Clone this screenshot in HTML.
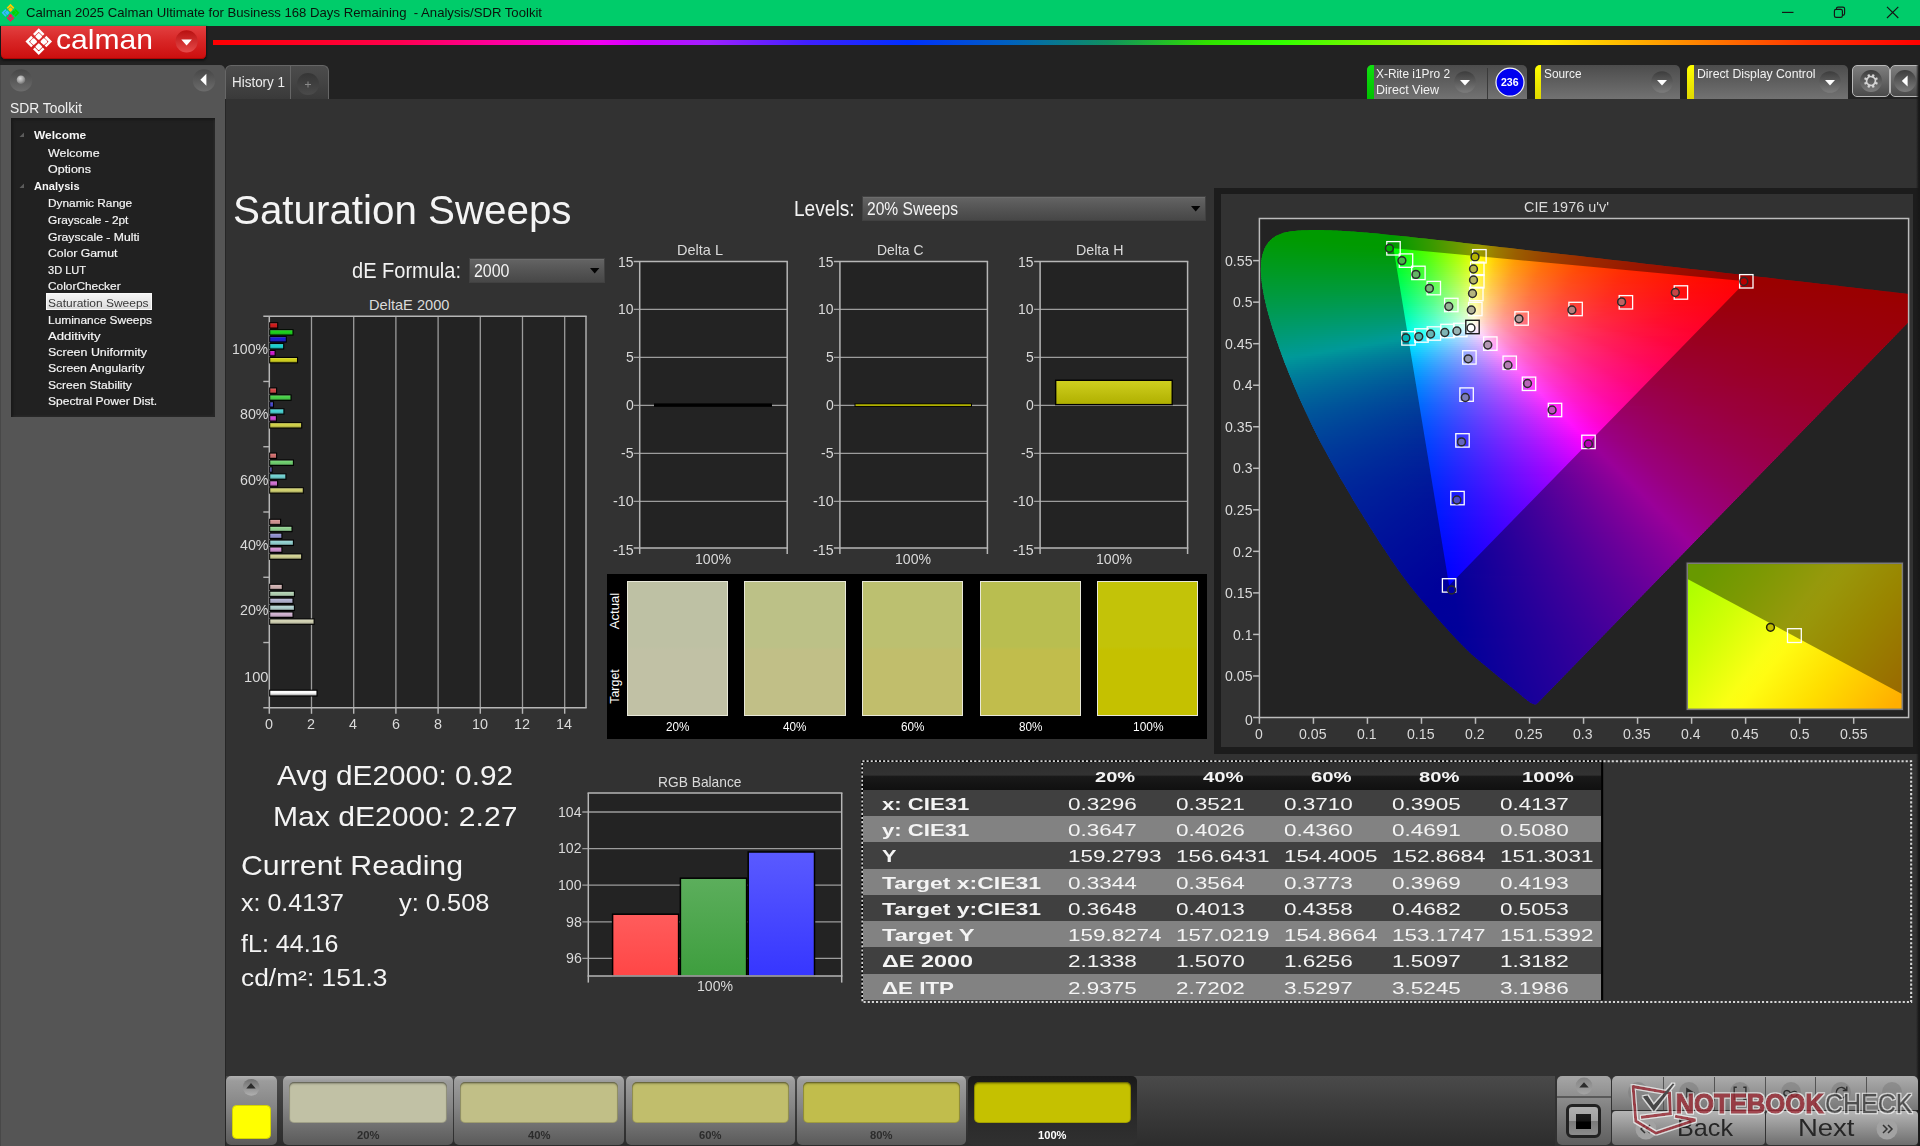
<!DOCTYPE html>
<html lang="en">
<head>
<meta charset="utf-8">
<title>Calman 2025 - Analysis/SDR Toolkit</title>
<style>
*{box-sizing:border-box;margin:0;padding:0}
html,body{width:1920px;height:1146px;overflow:hidden;background:#222;font-family:"Liberation Sans",sans-serif;color:#f0f0f0}
#root{position:relative;width:1920px;height:1146px;overflow:hidden;background:#222}
.a,svg{position:absolute}
.t{position:absolute;white-space:pre;line-height:1;transform-origin:0 50%}
svg{overflow:visible}
svg text{font-family:"Liberation Sans",sans-serif}
</style>
</head>
<body>
<div id="root">
<div class="a" style="left:0;top:0;width:1920px;height:25.5px;background:#00cc6a"></div><svg style="left:0;top:0" width="1920" height="100" viewBox="0 0 1920 100"><g transform="translate(10.5 12.8) rotate(45)" fill="none" stroke-width="1.75" stroke-linecap="butt" stroke-linejoin="miter"><path d="M-0.9 -5.45H-5.45V-0.9" stroke="#ffc800"/><rect x="-4.1" y="-4.1" width="3.55" height="3.55" rx="0.8" fill="#ffc800" stroke="none"/><path d="M0.9 -5.45H5.45V-0.9" stroke="#00d400"/><rect x="0.55" y="-4.1" width="3.55" height="3.55" rx="0.8" fill="#00d400" stroke="none"/><path d="M-0.9 5.45H-5.45V0.9" stroke="#35bbff"/><rect x="-4.1" y="0.55" width="3.55" height="3.55" rx="0.8" fill="#35bbff" stroke="none"/><path d="M0.9 5.45H5.45V0.9" stroke="#ff1058"/><rect x="0.55" y="0.55" width="3.55" height="3.55" rx="0.8" fill="#ff1058" stroke="none"/></g></svg><div class="t" id="t0" style="font-size:13.5px;color:#0a140c;left:26.00px;top:6.22px;transform:scaleX(0.9732);">Calman 2025 Calman Ultimate for Business 168 Days Remaining  - Analysis/SDR Toolkit</div><svg style="left:1770px;top:0" width="150" height="25" viewBox="0 0 150 25" fill="none" stroke="#151515" stroke-width="1.15">
<path d="M12 12.4H23.5"/>
<rect x="64.4" y="9.4" width="8" height="8" rx="1.7"/>
<path d="M66.4 9.4V8.8a1.7 1.7 0 0 1 1.7-1.7h4.8a1.7 1.7 0 0 1 1.7 1.7v4.8a1.7 1.7 0 0 1-1.7 1.7h-.5"/>
<path d="M117 6.8l11.3 11.200M128.3 6.8l-11.3 11.200"/>
</svg><div class="a" style="left:1px;top:25.5px;width:204.6px;height:33.2px;border-radius:0 0 4.5px 4.5px;background:linear-gradient(#e24040,#d82626 45%,#cc0d0d);box-shadow:0 1px 2px 1px rgba(10,10,10,.55),inset 0 -1px 0 rgba(150,0,0,.6)"></div><svg style="left:0;top:0" width="1920" height="100" viewBox="0 0 1920 100"><g transform="translate(38.75 41.6) rotate(45)" fill="none" stroke-width="2.5" stroke-linecap="butt" stroke-linejoin="miter"><path d="M-1.3 -8.15H-8.15V-1.3" stroke="#fff"/><rect x="-6.3" y="-6.3" width="5.35" height="5.35" rx="1.1" fill="#fff" stroke="none"/><path d="M1.3 -8.15H8.15V-1.3" stroke="#fff"/><rect x="0.95" y="-6.3" width="5.35" height="5.35" rx="1.1" fill="#fff" stroke="none"/><path d="M-1.3 8.15H-8.15V1.3" stroke="#fff"/><rect x="-6.3" y="0.95" width="5.35" height="5.35" rx="1.1" fill="#fff" stroke="none"/><path d="M1.3 8.15H8.15V1.3" stroke="#fff"/><rect x="0.95" y="0.95" width="5.35" height="5.35" rx="1.1" fill="#fff" stroke="none"/></g></svg><div class="t" id="t1" style="font-size:28.5px;color:#fff;left:55.50px;top:24.57px;transform:scaleX(1.0558);letter-spacing:0;">calman</div><svg style="left:174px;top:29px" width="24" height="24" viewBox="0 0 24 24">
<defs><linearGradient id="lgdd" x1="0" y1="0" x2="0" y2="1"><stop offset="0" stop-color="#b81010"/><stop offset="1" stop-color="#e64a4a"/></linearGradient></defs>
<circle cx="12.6" cy="12.3" r="11.1" fill="url(#lgdd)"/><path d="M7.3 10.5h10.6l-5.3 6z" fill="#fff"/></svg><div class="a" style="left:213px;top:39.6px;width:1707px;height:5.6px;background:linear-gradient(90deg,#ff0000 0%,#ff0028 6%,#ff0050 11%,#ff00a0 16.8%,#f000f0 22.7%,#d000ff 25%,#a020ff 29%,#4020ff 34.8%,#0030ff 40.7%,#0060c0 46.5%,#109060 52.4%,#30e000 58.2%,#30ff00 62.5%,#a0f000 70.3%,#fff000 78.1%,#ff9000 85.9%,#ff3000 93.7%,#ff0000 100%)"></div><div class="a" style="left:224.8px;top:65px;width:103.8px;height:34.5px;border:1.2px solid #666;border-bottom:none;border-radius:6px 6px 0 0;background:linear-gradient(#4c4c4c,#434343 50%,#393939)"></div><div class="a" style="left:289.7px;top:66px;width:1.2px;height:33px;background:#666"></div><div class="t" id="t2" style="font-size:13.9px;color:#ececec;left:231.60px;top:76.09px;transform:scaleX(0.9669);">History 1</div><svg style="left:296.1px;top:72px" width="24" height="24" viewBox="0 0 24 24"><defs><linearGradient id="lgp" x1="0" y1="0" x2="0" y2="1"><stop offset="0" stop-color="#353535"/><stop offset="1" stop-color="#4a4a4a"/></linearGradient></defs>
<circle cx="12" cy="12" r="11" fill="url(#lgp)"/><path d="M9 12.5h6M12 9.5v6" stroke="#8a8a8a" stroke-width="1" fill="none"/></svg><svg style="left:0;top:0" width="0" height="0"><defs>
<linearGradient id="lgbox" x1="0" y1="0" x2="0" y2="1"><stop offset="0" stop-color="#4c4c4c"/><stop offset="1" stop-color="#747474"/></linearGradient>
<linearGradient id="lgcir" x1="0" y1="0" x2="0" y2="1"><stop offset="0" stop-color="#3c3c3c"/><stop offset="1" stop-color="#7c7c7c"/></linearGradient>
<linearGradient id="lgbtn" x1="0" y1="0" x2="0" y2="1"><stop offset="0" stop-color="#808080"/><stop offset="1" stop-color="#484848"/></linearGradient>
</defs></svg><div class="a" style="left:1367px;top:65px;width:160px;height:34px;border-radius:5px 5px 0 0;background:linear-gradient(#4c4c4c,#727272);overflow:hidden"><div class="a" style="left:0;top:0;width:6.5px;height:34px;background:linear-gradient(#10e010,#00c000)"></div></div><div class="t" id="t3" style="font-size:12.4px;color:#f2f2f2;left:1376.00px;top:67.86px;transform:scaleX(0.9593);">X-Rite i1Pro 2</div><div class="t" id="t4" style="font-size:12.4px;color:#f2f2f2;left:1376.00px;top:84.46px;transform:scaleX(1.0090);">Direct View</div><svg style="left:1453px;top:70px" width="24" height="24" viewBox="-12 -12 24 24"><circle r="10.8" fill="url(#lgcir)"/><path d="M-5 -2h10l-5 5.6z" fill="#fff"/></svg><div class="a" style="left:1486.5px;top:68px;width:1.5px;height:31px;background:#3a3a3a"></div><svg style="left:1494px;top:66px" width="32" height="32" viewBox="-16 -16 32 32"><circle cx="0" cy="0.2" r="14" fill="#0000f0" stroke="#f4f4f4" stroke-width="1.2"/></svg><div class="t" id="t5" style="font-size:10.8px;color:#fff;font-weight:bold;left:1501.10px;top:77.02px;transform:scaleX(0.9769);">236</div><div class="a" style="left:1534.5px;top:65px;width:145.5px;height:34px;border-radius:5px 5px 0 0;background:linear-gradient(#4c4c4c,#727272);overflow:hidden"><div class="a" style="left:0;top:0;width:6.5px;height:34px;background:linear-gradient(#ffff00,#e0d800)"></div></div><div class="t" id="t6" style="font-size:12.4px;color:#f2f2f2;left:1543.50px;top:67.86px;transform:scaleX(0.9550);">Source</div><svg style="left:1650px;top:70px" width="24" height="24" viewBox="-12 -12 24 24"><circle r="10.8" fill="url(#lgcir)"/><path d="M-5 -2h10l-5 5.6z" fill="#fff"/></svg><div class="a" style="left:1687px;top:65px;width:161px;height:34px;border-radius:5px 5px 0 0;background:linear-gradient(#4c4c4c,#727272);overflow:hidden"><div class="a" style="left:0;top:0;width:6.5px;height:34px;background:linear-gradient(#ffff00,#e0d800)"></div></div><div class="t" id="t7" style="font-size:12.4px;color:#f2f2f2;left:1697.00px;top:67.86px;transform:scaleX(0.9890);">Direct Display Control</div><svg style="left:1818px;top:70px" width="24" height="24" viewBox="-12 -12 24 24"><circle r="10.8" fill="url(#lgcir)"/><path d="M-5 -2h10l-5 5.6z" fill="#fff"/></svg><div class="a" style="left:1851.5px;top:65px;width:38px;height:31.5px;border:1.3px solid #b8b8b8;border-radius:5px;background:linear-gradient(#7e7e7e,#4a4a4a)"></div><div class="a" style="left:1890px;top:65px;width:38px;height:31.5px;border:1.3px solid #b8b8b8;border-radius:5px;background:linear-gradient(#7e7e7e,#4a4a4a)"></div><svg style="left:1858.5px;top:68.8px" width="24" height="24" viewBox="-12 -12 24 24"><circle r="11" fill="url(#lgcir)"/><path d="M7.02 -1.05 7.02 1.05 5.16 1.19 4.49 2.81 5.71 4.22 4.22 5.71 2.81 4.49 1.19 5.16 1.05 7.02 -1.05 7.02 -1.19 5.16 -2.81 4.49 -4.22 5.71 -5.71 4.22 -4.49 2.81 -5.16 1.19 -7.02 1.05 -7.02 -1.05 -5.16 -1.19 -4.49 -2.81 -5.71 -4.22 -4.22 -5.71 -2.81 -4.49 -1.19 -5.16 -1.05 -7.02 1.05 -7.02 1.19 -5.16 2.81 -4.49 4.22 -5.71 5.71 -4.22 4.49 -2.81 5.16 -1.19Z M3.500 0A3.500 3.500 0 1 0 -3.500 0A3.500 3.500 0 1 0 3.500 0Z" fill="#d4d4d4" fill-rule="evenodd" transform="rotate(22.5)"/></svg><svg style="left:1893.3px;top:68.8px" width="24" height="24" viewBox="-12 -12 24 24"><circle r="11" fill="url(#lgcir)"/><path d="M2.6 -5.6v11.2l-5.8 -5.6z" fill="#fff"/></svg><div class="a" style="left:0;top:64.8px;width:224.8px;height:1082px;background:#555;border-radius:0 5px 0 0;border-left:1.5px solid #484848"></div><div class="a" style="left:224.8px;top:99px;width:1.4px;height:1047px;background:#262626"></div><svg style="left:8px;top:67px" width="26" height="26" viewBox="-13 -13 26 26"><defs>
<linearGradient id="lgsb" x1="0" y1="0" x2="0" y2="1"><stop offset="0" stop-color="#474747"/><stop offset="1" stop-color="#6c6c6c"/></linearGradient>
<radialGradient id="rgball" cx=".4" cy=".35" r=".7"><stop offset="0" stop-color="#d8d8d8"/><stop offset=".5" stop-color="#a8a8a8"/><stop offset="1" stop-color="#686868"/></radialGradient></defs>
<circle cx="0" cy=".4" r="11.2" fill="url(#lgsb)"/><circle cx="0" cy="-.2" r="4.3" fill="url(#rgball)"/></svg><svg style="left:190.8px;top:67.2px" width="26" height="26" viewBox="-13 -13 26 26"><circle cx="0" cy=".4" r="11.2" fill="url(#lgsb)"/><path d="M2.4 -6.2v12l-6 -6z" fill="#fff"/></svg><div class="t" id="t8" style="font-size:14.7px;color:#f0f0f0;left:10.00px;top:100.70px;transform:scaleX(0.9416);">SDR Toolkit</div><div class="a" style="left:11px;top:118px;width:204px;height:299px;background:#212121;box-shadow:inset 1.5px 1.5px 3px #171717,inset -1.5px -1.5px 2px #2b2b2b"></div><div class="a" style="left:46px;top:293.2px;width:106px;height:16.6px;background:linear-gradient(#f4f4f4,#dcdcdc);border:1px solid #fafafa"></div><div class="t" id="t9" style="font-size:11.7px;color:#f6f6f6;font-weight:bold;left:33.70px;top:128.81px;transform:scaleX(1.0213);">Welcome</div><div class="t" id="t10" style="font-size:11.7px;color:#f6f6f6;left:48.40px;top:146.71px;transform:scaleX(1.0639);-webkit-text-stroke:.18px #f6f6f6;">Welcome</div><div class="t" id="t11" style="font-size:11.7px;color:#f6f6f6;left:48.40px;top:162.50px;transform:scaleX(1.0675);-webkit-text-stroke:.18px #f6f6f6;">Options</div><div class="t" id="t12" style="font-size:11.7px;color:#f6f6f6;font-weight:bold;left:33.70px;top:179.81px;transform:scaleX(0.9485);">Analysis</div><div class="t" id="t13" style="font-size:11.7px;color:#f6f6f6;left:48.40px;top:197.10px;transform:scaleX(1.0126);-webkit-text-stroke:.18px #f6f6f6;">Dynamic Range</div><div class="t" id="t14" style="font-size:11.7px;color:#f6f6f6;left:48.40px;top:213.81px;transform:scaleX(1.0145);-webkit-text-stroke:.18px #f6f6f6;">Grayscale - 2pt</div><div class="t" id="t15" style="font-size:11.7px;color:#f6f6f6;left:48.40px;top:230.50px;transform:scaleX(1.0446);-webkit-text-stroke:.18px #f6f6f6;">Grayscale - Multi</div><div class="t" id="t16" style="font-size:11.7px;color:#f6f6f6;left:48.40px;top:247.21px;transform:scaleX(1.0488);-webkit-text-stroke:.18px #f6f6f6;">Color Gamut</div><div class="t" id="t17" style="font-size:11.7px;color:#f6f6f6;left:48.40px;top:263.71px;transform:scaleX(0.9458);-webkit-text-stroke:.18px #f6f6f6;">3D LUT</div><div class="t" id="t18" style="font-size:11.7px;color:#f6f6f6;left:48.40px;top:280.41px;transform:scaleX(1.0161);-webkit-text-stroke:.18px #f6f6f6;">ColorChecker</div><div class="t" id="t19" style="font-size:11.7px;color:#3a3a3a;left:48.40px;top:296.81px;transform:scaleX(1.0254);">Saturation Sweeps</div><div class="t" id="t20" style="font-size:11.7px;color:#f6f6f6;left:48.40px;top:313.51px;transform:scaleX(1.0195);-webkit-text-stroke:.18px #f6f6f6;">Luminance Sweeps</div><div class="t" id="t21" style="font-size:11.7px;color:#f6f6f6;left:48.40px;top:329.91px;transform:scaleX(1.1222);-webkit-text-stroke:.18px #f6f6f6;">Additivity</div><div class="t" id="t22" style="font-size:11.7px;color:#f6f6f6;left:48.40px;top:346.41px;transform:scaleX(1.0647);-webkit-text-stroke:.18px #f6f6f6;">Screen Uniformity</div><div class="t" id="t23" style="font-size:11.7px;color:#f6f6f6;left:48.40px;top:362.21px;transform:scaleX(1.0512);-webkit-text-stroke:.18px #f6f6f6;">Screen Angularity</div><div class="t" id="t24" style="font-size:11.7px;color:#f6f6f6;left:48.40px;top:378.71px;transform:scaleX(1.0332);-webkit-text-stroke:.18px #f6f6f6;">Screen Stability</div><div class="t" id="t25" style="font-size:11.7px;color:#f6f6f6;left:48.40px;top:395.41px;transform:scaleX(1.0314);-webkit-text-stroke:.18px #f6f6f6;">Spectral Power Dist.</div><svg style="left:19px;top:131.5px" width="6" height="6" viewBox="0 0 6 6"><path d="M5 .5V5H.5z" fill="#5c5c5c"/></svg><svg style="left:19px;top:182.5px" width="6" height="6" viewBox="0 0 6 6"><path d="M5 .5V5H.5z" fill="#5c5c5c"/></svg><div class="a" style="left:226.2px;top:99px;width:1694px;height:1047px;background:#323232"></div><div class="t" id="t26" style="font-size:41.2px;color:#f4f4f4;left:232.80px;top:189.58px;transform:scaleX(0.9791);">Saturation Sweeps</div><div class="t" id="t27" style="font-size:21.2px;color:#f2f2f2;left:351.50px;top:259.98px;transform:scaleX(0.9445);">dE Formula:</div><div class="a" style="left:468.7px;top:257.8px;width:136.3px;height:25.4px;background:linear-gradient(#646464,#565656 45%,#474747);border:1px solid #414141;box-shadow:inset 0 1px 0 #6c6c6c"></div><svg style="left:590.4px;top:268.3px" width="10" height="6" viewBox="0 0 10 6"><path d="M0 0h9.400l-4.700 5.400z" fill="#050505"/></svg><div class="t" id="t28" style="font-size:17.6px;color:#f4f4f4;left:473.60px;top:263.04px;transform:scaleX(0.9070);">2000</div><div class="t" id="t29" style="font-size:21.2px;color:#f2f2f2;left:793.50px;top:197.98px;transform:scaleX(0.9011);">Levels:</div><div class="a" style="left:862.4px;top:195.6px;width:343.6px;height:25.4px;background:linear-gradient(#646464,#565656 45%,#474747);border:1px solid #414141;box-shadow:inset 0 1px 0 #6c6c6c"></div><svg style="left:1191.4px;top:206.1px" width="10" height="6" viewBox="0 0 10 6"><path d="M0 0h9.400l-4.700 5.400z" fill="#050505"/></svg><div class="t" id="t30" style="font-size:17.6px;color:#f4f4f4;left:867.00px;top:201.04px;transform:scaleX(0.8860);">20% Sweeps</div><div class="t" id="t31" style="font-size:14.6px;color:#dadada;left:369.05px;top:297.59px;">DeltaE 2000</div><div class="t" id="t32" style="font-size:14.6px;color:#dadada;left:232.00px;top:342.29px;transform:scaleX(0.9644);">100%</div><div class="t" id="t33" style="font-size:14.6px;color:#dadada;left:239.50px;top:407.29px;transform:scaleX(0.9754);">80%</div><div class="t" id="t34" style="font-size:14.6px;color:#dadada;left:239.50px;top:472.79px;transform:scaleX(0.9754);">60%</div><div class="t" id="t35" style="font-size:14.6px;color:#dadada;left:239.50px;top:537.79px;transform:scaleX(0.9754);">40%</div><div class="t" id="t36" style="font-size:14.6px;color:#dadada;left:239.50px;top:603.29px;transform:scaleX(0.9754);">20%</div><div class="t" id="t37" style="font-size:14.6px;color:#dadada;left:243.50px;top:669.59px;transform:scaleX(1.0058);">100</div><div class="t" id="t38" style="font-size:14.6px;color:#dadada;left:265.00px;top:717.39px;transform:scaleX(0.9846);">0</div><div class="t" id="t39" style="font-size:14.6px;color:#dadada;left:307.20px;top:717.39px;transform:scaleX(0.9846);">2</div><div class="t" id="t40" style="font-size:14.6px;color:#dadada;left:349.40px;top:717.39px;transform:scaleX(0.9846);">4</div><div class="t" id="t41" style="font-size:14.6px;color:#dadada;left:391.60px;top:717.39px;transform:scaleX(0.9846);">6</div><div class="t" id="t42" style="font-size:14.6px;color:#dadada;left:433.80px;top:717.39px;transform:scaleX(0.9846);">8</div><div class="t" id="t43" style="font-size:14.6px;color:#dadada;left:472.00px;top:717.39px;transform:scaleX(0.9856);">10</div><div class="t" id="t44" style="font-size:14.6px;color:#dadada;left:514.20px;top:717.39px;transform:scaleX(0.9856);">12</div><div class="t" id="t45" style="font-size:14.6px;color:#dadada;left:556.40px;top:717.39px;transform:scaleX(0.9856);">14</div><div class="t" id="t46" style="font-size:14.6px;color:#dadada;left:618.00px;top:254.89px;transform:scaleX(0.9548);">15</div><div class="t" id="t47" style="font-size:14.6px;color:#dadada;left:618.00px;top:302.39px;transform:scaleX(0.9548);">10</div><div class="t" id="t48" style="font-size:14.6px;color:#dadada;left:625.70px;top:350.39px;transform:scaleX(0.9600);">5</div><div class="t" id="t49" style="font-size:14.6px;color:#dadada;left:625.70px;top:398.39px;transform:scaleX(0.9600);">0</div><div class="t" id="t50" style="font-size:14.6px;color:#dadada;left:620.90px;top:446.39px;transform:scaleX(0.9704);">-5</div><div class="t" id="t51" style="font-size:14.6px;color:#dadada;left:612.90px;top:494.39px;transform:scaleX(0.9766);">-10</div><div class="t" id="t52" style="font-size:14.6px;color:#dadada;left:612.90px;top:542.99px;transform:scaleX(0.9766);">-15</div><div class="t" id="t53" style="font-size:14.6px;color:#dadada;left:676.70px;top:243.19px;transform:scaleX(0.9946);">Delta L</div><div class="t" id="t54" style="font-size:14.6px;color:#dadada;left:695.20px;top:552.09px;transform:scaleX(0.9644);">100%</div><div class="t" id="t55" style="font-size:14.6px;color:#dadada;left:818.20px;top:254.89px;transform:scaleX(0.9548);">15</div><div class="t" id="t56" style="font-size:14.6px;color:#dadada;left:818.20px;top:302.39px;transform:scaleX(0.9548);">10</div><div class="t" id="t57" style="font-size:14.6px;color:#dadada;left:825.90px;top:350.39px;transform:scaleX(0.9600);">5</div><div class="t" id="t58" style="font-size:14.6px;color:#dadada;left:825.90px;top:398.39px;transform:scaleX(0.9600);">0</div><div class="t" id="t59" style="font-size:14.6px;color:#dadada;left:821.10px;top:446.39px;transform:scaleX(0.9704);">-5</div><div class="t" id="t60" style="font-size:14.6px;color:#dadada;left:813.10px;top:494.39px;transform:scaleX(0.9766);">-10</div><div class="t" id="t61" style="font-size:14.6px;color:#dadada;left:813.10px;top:542.99px;transform:scaleX(0.9766);">-15</div><div class="t" id="t62" style="font-size:14.6px;color:#dadada;left:876.65px;top:243.19px;transform:scaleX(0.9554);">Delta C</div><div class="t" id="t63" style="font-size:14.6px;color:#dadada;left:895.40px;top:552.09px;transform:scaleX(0.9644);">100%</div><div class="t" id="t64" style="font-size:14.6px;color:#dadada;left:1018.40px;top:254.89px;transform:scaleX(0.9548);">15</div><div class="t" id="t65" style="font-size:14.6px;color:#dadada;left:1018.40px;top:302.39px;transform:scaleX(0.9548);">10</div><div class="t" id="t66" style="font-size:14.6px;color:#dadada;left:1026.10px;top:350.39px;transform:scaleX(0.9600);">5</div><div class="t" id="t67" style="font-size:14.6px;color:#dadada;left:1026.10px;top:398.39px;transform:scaleX(0.9600);">0</div><div class="t" id="t68" style="font-size:14.6px;color:#dadada;left:1021.30px;top:446.39px;transform:scaleX(0.9704);">-5</div><div class="t" id="t69" style="font-size:14.6px;color:#dadada;left:1013.30px;top:494.39px;transform:scaleX(0.9766);">-10</div><div class="t" id="t70" style="font-size:14.6px;color:#dadada;left:1013.30px;top:542.99px;transform:scaleX(0.9766);">-15</div><div class="t" id="t71" style="font-size:14.6px;color:#dadada;left:1076.35px;top:243.19px;transform:scaleX(0.9759);">Delta H</div><div class="t" id="t72" style="font-size:14.6px;color:#dadada;left:1095.60px;top:552.09px;transform:scaleX(0.9644);">100%</div><div class="a" style="left:606.5px;top:574.3px;width:600.5px;height:165.2px;background:#000"></div><div class="a" style="left:626.8px;top:581.2px;width:101.2px;height:135px;border:1.2px solid #e8e8d8;background:linear-gradient(#bec1a4 0,#bec1a4 48.500%,#c1c1a5 51.500%,#c1c1a5 100%)"></div><div class="t" id="t73" style="font-size:12.3px;color:#fff;left:665.65px;top:721.34px;transform:scaleX(0.9543);">20%</div><div class="a" style="left:744.42px;top:581.2px;width:101.2px;height:135px;border:1.2px solid #e8e8d8;background:linear-gradient(#bcc187 0,#bcc187 48.500%,#c1bf87 51.500%,#c1bf87 100%)"></div><div class="t" id="t74" style="font-size:12.3px;color:#fff;left:783.27px;top:721.34px;transform:scaleX(0.9543);">40%</div><div class="a" style="left:862.04px;top:581.2px;width:101.2px;height:135px;border:1.2px solid #e8e8d8;background:linear-gradient(#bcc070 0,#bcc070 48.500%,#c1be6c 51.500%,#c1be6c 100%)"></div><div class="t" id="t75" style="font-size:12.3px;color:#fff;left:900.89px;top:721.34px;transform:scaleX(0.9543);">60%</div><div class="a" style="left:979.66px;top:581.2px;width:101.2px;height:135px;border:1.2px solid #e8e8d8;background:linear-gradient(#b9be50 0,#b9be50 48.500%,#c1bd4c 51.500%,#c1bd4c 100%)"></div><div class="t" id="t76" style="font-size:12.3px;color:#fff;left:1018.51px;top:721.34px;transform:scaleX(0.9543);">80%</div><div class="a" style="left:1097.28px;top:581.2px;width:101.2px;height:135px;border:1.2px solid #e8e8d8;background:linear-gradient(#c3c308 0,#c3c308 48.500%,#c5c100 51.500%,#c5c100 100%)"></div><div class="t" id="t77" style="font-size:12.3px;color:#fff;left:1132.63px;top:721.34px;transform:scaleX(0.9697);">100%</div><div class="t" id="t78" style="font-size:12.3px;color:#fff;left:0.00px;top:0.00px;transform-origin:0 0;transform:translate(609.45px,629.25px) rotate(-90deg) scaleX(1.0676);">Actual</div><div class="t" id="t79" style="font-size:12.3px;color:#fff;left:0.00px;top:0.00px;transform-origin:0 0;transform:translate(609.45px,703.75px) rotate(-90deg) scaleX(1.0091);">Target</div><div class="t" id="t80" style="font-size:27.6px;color:#f4f4f4;left:277.20px;top:762.24px;transform:scaleX(1.0782);">Avg dE2000: 0.92</div><div class="t" id="t81" style="font-size:27.6px;color:#f4f4f4;left:272.80px;top:803.44px;transform:scaleX(1.0916);">Max dE2000: 2.27</div><div class="t" id="t82" style="font-size:27.6px;color:#f4f4f4;left:240.60px;top:852.04px;transform:scaleX(1.0965);">Current Reading</div><div class="t" id="t83" style="font-size:23px;color:#f4f4f4;left:240.60px;top:891.95px;transform:scaleX(1.0883);">x: 0.4137</div><div class="t" id="t84" style="font-size:23px;color:#f4f4f4;left:399.30px;top:891.95px;transform:scaleX(1.1058);">y: 0.508</div><div class="t" id="t85" style="font-size:23px;color:#f4f4f4;left:240.60px;top:933.45px;transform:scaleX(1.0890);">fL: 44.16</div><div class="t" id="t86" style="font-size:23px;color:#f4f4f4;left:240.60px;top:967.25px;transform:scaleX(1.1459);">cd/m²: 151.3</div><div class="t" id="t87" style="font-size:14.6px;color:#dadada;left:657.65px;top:774.59px;transform:scaleX(0.9443);">RGB Balance</div><div class="t" id="t88" style="font-size:14.6px;color:#dadada;left:558.10px;top:804.79px;transform:scaleX(0.9647);">104</div><div class="t" id="t89" style="font-size:14.6px;color:#dadada;left:558.10px;top:841.39px;transform:scaleX(0.9647);">102</div><div class="t" id="t90" style="font-size:14.6px;color:#dadada;left:558.10px;top:877.99px;transform:scaleX(0.9647);">100</div><div class="t" id="t91" style="font-size:14.6px;color:#dadada;left:565.80px;top:914.59px;transform:scaleX(0.9732);">98</div><div class="t" id="t92" style="font-size:14.6px;color:#dadada;left:565.80px;top:951.19px;transform:scaleX(0.9732);">96</div><div class="t" id="t93" style="font-size:14.6px;color:#dadada;left:697.00px;top:979.49px;transform:scaleX(0.9644);">100%</div><svg style="left:0;top:0" width="1920" height="1146" viewBox="0 0 1920 1146" fill="none"><defs>
<linearGradient id="shade" x1="0" y1="0" x2="0" y2="1"><stop offset="0" stop-color="#fff" stop-opacity=".25"/><stop offset=".4" stop-color="#fff" stop-opacity="0"/><stop offset="1" stop-color="#000" stop-opacity=".38"/></linearGradient>
<linearGradient id="shadeh" x1="0" y1="0" x2="0" y2="1"><stop offset="0" stop-color="#fff" stop-opacity=".12"/><stop offset="1" stop-color="#000" stop-opacity=".12"/></linearGradient>
<linearGradient id="whbar" x1="0" y1="0" x2="0" y2="1"><stop offset="0" stop-color="#fff"/><stop offset=".5" stop-color="#fafafa"/><stop offset="1" stop-color="#8a8a8a"/></linearGradient>
</defs><rect x="269.3" y="316.2" width="316.7" height="391.6" fill="#232323" /><path d="M311.5 316.2L311.5 707.8" stroke="#9c9c9c" stroke-width="1.3"/><path d="M353.7 316.2L353.7 707.8" stroke="#9c9c9c" stroke-width="1.3"/><path d="M395.9 316.2L395.9 707.8" stroke="#9c9c9c" stroke-width="1.3"/><path d="M438.1 316.2L438.1 707.8" stroke="#9c9c9c" stroke-width="1.3"/><path d="M480.3 316.2L480.3 707.8" stroke="#9c9c9c" stroke-width="1.3"/><path d="M522.5 316.2L522.5 707.8" stroke="#9c9c9c" stroke-width="1.3"/><path d="M564.7 316.2L564.7 707.8" stroke="#9c9c9c" stroke-width="1.3"/><path d="M586 316.2L586 707.8" stroke="#b6b6b6" stroke-width="1.4"/><path d="M263.3 316.2L586.7 316.2" stroke="#b6b6b6" stroke-width="1.5"/><path d="M269.3 316.2L269.3 713.8" stroke="#b6b6b6" stroke-width="1.5"/><path d="M263.3 707.8L586.7 707.8" stroke="#b6b6b6" stroke-width="1.5"/><path d="M263.3 381.467L269.3 381.467" stroke="#b6b6b6" stroke-width="1.4"/><path d="M263.3 446.733L269.3 446.733" stroke="#b6b6b6" stroke-width="1.4"/><path d="M263.3 512L269.3 512" stroke="#b6b6b6" stroke-width="1.4"/><path d="M263.3 577.267L269.3 577.267" stroke="#b6b6b6" stroke-width="1.4"/><path d="M263.3 642.533L269.3 642.533" stroke="#b6b6b6" stroke-width="1.4"/><path d="M311.5 707.8L311.5 713.8" stroke="#b6b6b6" stroke-width="1.4"/><path d="M353.7 707.8L353.7 713.8" stroke="#b6b6b6" stroke-width="1.4"/><path d="M395.9 707.8L395.9 713.8" stroke="#b6b6b6" stroke-width="1.4"/><path d="M438.1 707.8L438.1 713.8" stroke="#b6b6b6" stroke-width="1.4"/><path d="M480.3 707.8L480.3 713.8" stroke="#b6b6b6" stroke-width="1.4"/><path d="M522.5 707.8L522.5 713.8" stroke="#b6b6b6" stroke-width="1.4"/><path d="M564.7 707.8L564.7 713.8" stroke="#b6b6b6" stroke-width="1.4"/><rect x="269.7" y="322.8" width="8" height="5.4" fill="#ce0c0c" stroke="#000" stroke-width="1.1"/><rect x="270.2" y="323.3" width="7" height="4.4" fill="url(#shade)"/><rect x="269.7" y="329.73" width="23.3" height="5.4" fill="#0cce0c" stroke="#000" stroke-width="1.1"/><rect x="270.2" y="330.23" width="22.3" height="4.4" fill="url(#shade)"/><rect x="269.7" y="336.66" width="16.6" height="5.4" fill="#0c0cce" stroke="#000" stroke-width="1.1"/><rect x="270.2" y="337.16" width="15.6" height="4.4" fill="url(#shade)"/><rect x="269.7" y="343.59" width="14" height="5.4" fill="#0ccece" stroke="#000" stroke-width="1.1"/><rect x="270.2" y="344.09" width="13" height="4.4" fill="url(#shade)"/><rect x="269.7" y="350.52" width="5.4" height="5.4" fill="#ce0cce" stroke="#000" stroke-width="1.1"/><rect x="270.2" y="351.02" width="4.4" height="4.4" fill="url(#shade)"/><rect x="269.7" y="357.45" width="27.8" height="5.4" fill="#cece0c" stroke="#000" stroke-width="1.1"/><rect x="270.2" y="357.95" width="26.8" height="4.4" fill="url(#shade)"/><rect x="269.7" y="388" width="6.9" height="5.4" fill="#ce3d3d" stroke="#000" stroke-width="1.1"/><rect x="270.2" y="388.5" width="5.9" height="4.4" fill="url(#shade)"/><rect x="269.7" y="394.93" width="21.3" height="5.4" fill="#3dce3d" stroke="#000" stroke-width="1.1"/><rect x="270.2" y="395.43" width="20.3" height="4.4" fill="url(#shade)"/><rect x="269.7" y="401.86" width="3.8" height="5.4" fill="#3d3dce" stroke="#000" stroke-width="1.1"/><rect x="270.2" y="402.36" width="2.8" height="4.4" fill="url(#shade)"/><rect x="269.7" y="408.79" width="14.2" height="5.4" fill="#3dcece" stroke="#000" stroke-width="1.1"/><rect x="270.2" y="409.29" width="13.2" height="4.4" fill="url(#shade)"/><rect x="269.7" y="415.72" width="6.7" height="5.4" fill="#ce3dce" stroke="#000" stroke-width="1.1"/><rect x="270.2" y="416.22" width="5.7" height="4.4" fill="url(#shade)"/><rect x="269.7" y="422.65" width="32" height="5.4" fill="#cece3d" stroke="#000" stroke-width="1.1"/><rect x="270.2" y="423.15" width="31" height="4.4" fill="url(#shade)"/><rect x="269.7" y="453.1" width="6.9" height="5.4" fill="#ce6767" stroke="#000" stroke-width="1.1"/><rect x="270.2" y="453.6" width="5.9" height="4.4" fill="url(#shade)"/><rect x="269.7" y="460.03" width="23.7" height="5.4" fill="#67ce67" stroke="#000" stroke-width="1.1"/><rect x="270.2" y="460.53" width="22.7" height="4.4" fill="url(#shade)"/><rect x="269.7" y="466.96" width="2.4" height="5.4" fill="#6767ce" stroke="#000" stroke-width="1.1"/><rect x="270.2" y="467.46" width="1.4" height="4.4" fill="url(#shade)"/><rect x="269.7" y="473.89" width="16.2" height="5.4" fill="#67cece" stroke="#000" stroke-width="1.1"/><rect x="270.2" y="474.39" width="15.2" height="4.4" fill="url(#shade)"/><rect x="269.7" y="480.82" width="7.9" height="5.4" fill="#ce67ce" stroke="#000" stroke-width="1.1"/><rect x="270.2" y="481.32" width="6.9" height="4.4" fill="url(#shade)"/><rect x="269.7" y="487.75" width="33.6" height="5.4" fill="#cece67" stroke="#000" stroke-width="1.1"/><rect x="270.2" y="488.25" width="32.6" height="4.4" fill="url(#shade)"/><rect x="269.7" y="519.3" width="10.9" height="5.4" fill="#ce8c8c" stroke="#000" stroke-width="1.1"/><rect x="270.2" y="519.8" width="9.9" height="4.4" fill="url(#shade)"/><rect x="269.7" y="526.23" width="22.3" height="5.4" fill="#8cce8c" stroke="#000" stroke-width="1.1"/><rect x="270.2" y="526.73" width="21.3" height="4.4" fill="url(#shade)"/><rect x="269.7" y="533.16" width="12.2" height="5.4" fill="#8c8cce" stroke="#000" stroke-width="1.1"/><rect x="270.2" y="533.66" width="11.2" height="4.4" fill="url(#shade)"/><rect x="269.7" y="540.09" width="23.7" height="5.4" fill="#8ccece" stroke="#000" stroke-width="1.1"/><rect x="270.2" y="540.59" width="22.7" height="4.4" fill="url(#shade)"/><rect x="269.7" y="547.02" width="12.2" height="5.4" fill="#ce8cce" stroke="#000" stroke-width="1.1"/><rect x="270.2" y="547.52" width="11.2" height="4.4" fill="url(#shade)"/><rect x="269.7" y="553.95" width="32" height="5.4" fill="#cece8c" stroke="#000" stroke-width="1.1"/><rect x="270.2" y="554.45" width="31" height="4.4" fill="url(#shade)"/><rect x="269.7" y="584.3" width="12.6" height="5.4" fill="#ceaeae" stroke="#000" stroke-width="1.1"/><rect x="270.2" y="584.8" width="11.6" height="4.4" fill="url(#shade)"/><rect x="269.7" y="591.23" width="24.7" height="5.4" fill="#aeceae" stroke="#000" stroke-width="1.1"/><rect x="270.2" y="591.73" width="23.7" height="4.4" fill="url(#shade)"/><rect x="269.7" y="598.16" width="23.3" height="5.4" fill="#aeaece" stroke="#000" stroke-width="1.1"/><rect x="270.2" y="598.66" width="22.3" height="4.4" fill="url(#shade)"/><rect x="269.7" y="605.09" width="24.7" height="5.4" fill="#aecece" stroke="#000" stroke-width="1.1"/><rect x="270.2" y="605.59" width="23.7" height="4.4" fill="url(#shade)"/><rect x="269.7" y="612.02" width="23.3" height="5.4" fill="#ceaece" stroke="#000" stroke-width="1.1"/><rect x="270.2" y="612.52" width="22.3" height="4.4" fill="url(#shade)"/><rect x="269.7" y="618.95" width="44.4" height="5.4" fill="#ceceae" stroke="#000" stroke-width="1.1"/><rect x="270.2" y="619.45" width="43.4" height="4.4" fill="url(#shade)"/><rect x="269.7" y="690.2" width="47.3" height="5.8" fill="url(#whbar)" stroke="#000" stroke-width="1.1"/><rect x="639.7" y="261.4" width="147.5" height="286.5" fill="#232323" /><path d="M633.7 309.4L787.2 309.4" stroke="#9c9c9c" stroke-width="1.3"/><path d="M633.7 357.4L787.2 357.4" stroke="#9c9c9c" stroke-width="1.3"/><path d="M633.7 405.4L787.2 405.4" stroke="#9c9c9c" stroke-width="1.3"/><path d="M633.7 453.4L787.2 453.4" stroke="#9c9c9c" stroke-width="1.3"/><path d="M633.7 501.4L787.2 501.4" stroke="#9c9c9c" stroke-width="1.3"/><path d="M633.7 261.4L787.9 261.4" stroke="#b6b6b6" stroke-width="1.5"/><path d="M639.7 261.4L639.7 553.9" stroke="#b6b6b6" stroke-width="1.5"/><path d="M787.2 261.4L787.2 553.9" stroke="#b6b6b6" stroke-width="1.5"/><path d="M633.7 547.9L787.9 547.9" stroke="#b6b6b6" stroke-width="1.5"/><rect x="654" y="403.4" width="118" height="3.400" fill="#000"/><rect x="839.9" y="261.4" width="147.5" height="286.5" fill="#232323" /><path d="M833.9 309.4L987.4 309.4" stroke="#9c9c9c" stroke-width="1.3"/><path d="M833.9 357.4L987.4 357.4" stroke="#9c9c9c" stroke-width="1.3"/><path d="M833.9 405.4L987.4 405.4" stroke="#9c9c9c" stroke-width="1.3"/><path d="M833.9 453.4L987.4 453.4" stroke="#9c9c9c" stroke-width="1.3"/><path d="M833.9 501.4L987.4 501.4" stroke="#9c9c9c" stroke-width="1.3"/><path d="M833.9 261.4L988.1 261.4" stroke="#b6b6b6" stroke-width="1.5"/><path d="M839.9 261.4L839.9 553.9" stroke="#b6b6b6" stroke-width="1.5"/><path d="M987.4 261.4L987.4 553.9" stroke="#b6b6b6" stroke-width="1.5"/><path d="M833.9 547.9L988.1 547.9" stroke="#b6b6b6" stroke-width="1.5"/><rect x="855" y="403.8" width="116.500" height="2.600" fill="#c4c400" stroke="#000" stroke-width="1"/><rect x="1040.1" y="261.4" width="147.5" height="286.5" fill="#232323" /><path d="M1034.1 309.4L1187.6 309.4" stroke="#9c9c9c" stroke-width="1.3"/><path d="M1034.1 357.4L1187.6 357.4" stroke="#9c9c9c" stroke-width="1.3"/><path d="M1034.1 405.4L1187.6 405.4" stroke="#9c9c9c" stroke-width="1.3"/><path d="M1034.1 453.4L1187.6 453.4" stroke="#9c9c9c" stroke-width="1.3"/><path d="M1034.1 501.4L1187.6 501.4" stroke="#9c9c9c" stroke-width="1.3"/><path d="M1034.1 261.4L1188.3 261.4" stroke="#b6b6b6" stroke-width="1.5"/><path d="M1040.1 261.4L1040.1 553.9" stroke="#b6b6b6" stroke-width="1.5"/><path d="M1187.6 261.4L1187.6 553.9" stroke="#b6b6b6" stroke-width="1.5"/><path d="M1034.1 547.9L1188.3 547.9" stroke="#b6b6b6" stroke-width="1.5"/><rect x="1055.700" y="380.300" width="116.500" height="24.300" fill="#c8c800" stroke="#000" stroke-width="1.4"/><rect x="1056.400" y="381" width="115.100" height="22.900" fill="url(#shadeh)"/><rect x="588.3" y="792.9" width="253.4" height="183.2" fill="#232323" /><path d="M582.3 812L841.7 812" stroke="#9c9c9c" stroke-width="1.3"/><path d="M582.3 848.6L841.7 848.6" stroke="#9c9c9c" stroke-width="1.3"/><path d="M582.3 885.2L841.7 885.2" stroke="#9c9c9c" stroke-width="1.3"/><path d="M582.3 921.8L841.7 921.8" stroke="#9c9c9c" stroke-width="1.3"/><path d="M582.3 958.4L841.7 958.4" stroke="#9c9c9c" stroke-width="1.3"/><path d="M587.6 792.9L842.4 792.9" stroke="#b6b6b6" stroke-width="1.5"/><path d="M588.3 792.9L588.3 982.6" stroke="#b6b6b6" stroke-width="1.5"/><path d="M841.7 792.9L841.7 982.6" stroke="#b6b6b6" stroke-width="1.5"/><defs><linearGradient id="gR" x1="0" y1="0" x2="0" y2="1"><stop offset="0" stop-color="#ff5c5c"/><stop offset="1" stop-color="#ff4646"/></linearGradient>
<linearGradient id="gG" x1="0" y1="0" x2="0" y2="1"><stop offset="0" stop-color="#5cae5c"/><stop offset="1" stop-color="#3e9e3e"/></linearGradient>
<linearGradient id="gB" x1="0" y1="0" x2="0" y2="1"><stop offset="0" stop-color="#5a5aff"/><stop offset="1" stop-color="#3636ff"/></linearGradient></defs><rect x="612.6" y="914.2" width="66" height="61.9" fill="url(#gR)" stroke="#000" stroke-width="1.5"/><rect x="680.4" y="878.2" width="66.2" height="97.9" fill="url(#gG)" stroke="#000" stroke-width="1.5"/><rect x="748.2" y="852" width="66.3" height="124.1" fill="url(#gB)" stroke="#000" stroke-width="1.5"/><path d="M587.6 976.1L842.4 976.1" stroke="#b6b6b6" stroke-width="1.5"/></svg><svg style="left:0;top:0" width="1920" height="1146" viewBox="0 0 1920 1146" fill="none"><path d="M862.4 1001V761.3H1602.15V1000.2" stroke="#000" stroke-width="2.1"/><rect x="862.4" y="761.3" width="1048.75" height="240.75" stroke="#d6d6d6" stroke-width="2.1" stroke-dasharray="2.1 2.04"/></svg><div class="a" style="left:863.3px;top:762.3px;width:738px;height:28px;background:linear-gradient(#2f2f2f 0,#323232 46%,#191919 52%,#101010 100%)"></div><div class="a" style="left:863.3px;top:789.9px;width:738px;height:26.56px;background:#404040"></div><div class="t" id="t94" style="font-size:16.2px;color:#f4f4f4;font-weight:bold;left:882.20px;top:795.83px;transform:scaleX(1.3664);">x: CIE31</div><div class="t" id="t95" style="font-size:16px;color:#f4f4f4;left:1067.60px;top:796.90px;transform:scaleX(1.4059);">0.3296</div><div class="t" id="t96" style="font-size:16px;color:#f4f4f4;left:1175.60px;top:796.90px;transform:scaleX(1.4059);">0.3521</div><div class="t" id="t97" style="font-size:16px;color:#f4f4f4;left:1283.60px;top:796.90px;transform:scaleX(1.4059);">0.3710</div><div class="t" id="t98" style="font-size:16px;color:#f4f4f4;left:1391.60px;top:796.90px;transform:scaleX(1.4059);">0.3905</div><div class="t" id="t99" style="font-size:16px;color:#f4f4f4;left:1499.60px;top:796.90px;transform:scaleX(1.4059);">0.4137</div><div class="a" style="left:863.3px;top:816.16px;width:738px;height:26.56px;background:#828282"></div><div class="t" id="t100" style="font-size:16.2px;color:#f4f4f4;font-weight:bold;left:882.20px;top:822.09px;transform:scaleX(1.3664);">y: CIE31</div><div class="t" id="t101" style="font-size:16px;color:#f4f4f4;left:1067.60px;top:823.16px;transform:scaleX(1.4059);">0.3647</div><div class="t" id="t102" style="font-size:16px;color:#f4f4f4;left:1175.60px;top:823.16px;transform:scaleX(1.4059);">0.4026</div><div class="t" id="t103" style="font-size:16px;color:#f4f4f4;left:1283.60px;top:823.16px;transform:scaleX(1.4059);">0.4360</div><div class="t" id="t104" style="font-size:16px;color:#f4f4f4;left:1391.60px;top:823.16px;transform:scaleX(1.4059);">0.4691</div><div class="t" id="t105" style="font-size:16px;color:#f4f4f4;left:1499.60px;top:823.16px;transform:scaleX(1.4059);">0.5080</div><div class="a" style="left:863.3px;top:842.42px;width:738px;height:26.56px;background:#404040"></div><div class="t" id="t106" style="font-size:16.2px;color:#f4f4f4;font-weight:bold;left:882.20px;top:848.35px;transform:scaleX(1.3410);">Y</div><div class="t" id="t107" style="font-size:16px;color:#f4f4f4;left:1067.60px;top:849.42px;transform:scaleX(1.4011);">159.2793</div><div class="t" id="t108" style="font-size:16px;color:#f4f4f4;left:1175.60px;top:849.42px;transform:scaleX(1.4011);">156.6431</div><div class="t" id="t109" style="font-size:16px;color:#f4f4f4;left:1283.60px;top:849.42px;transform:scaleX(1.4011);">154.4005</div><div class="t" id="t110" style="font-size:16px;color:#f4f4f4;left:1391.60px;top:849.42px;transform:scaleX(1.4011);">152.8684</div><div class="t" id="t111" style="font-size:16px;color:#f4f4f4;left:1499.60px;top:849.42px;transform:scaleX(1.4011);">151.3031</div><div class="a" style="left:863.3px;top:868.68px;width:738px;height:26.56px;background:#828282"></div><div class="t" id="t112" style="font-size:16.2px;color:#f4f4f4;font-weight:bold;left:882.20px;top:874.61px;transform:scaleX(1.4177);">Target x:CIE31</div><div class="t" id="t113" style="font-size:16px;color:#f4f4f4;left:1067.60px;top:875.68px;transform:scaleX(1.4059);">0.3344</div><div class="t" id="t114" style="font-size:16px;color:#f4f4f4;left:1175.60px;top:875.68px;transform:scaleX(1.4059);">0.3564</div><div class="t" id="t115" style="font-size:16px;color:#f4f4f4;left:1283.60px;top:875.68px;transform:scaleX(1.4059);">0.3773</div><div class="t" id="t116" style="font-size:16px;color:#f4f4f4;left:1391.60px;top:875.68px;transform:scaleX(1.4059);">0.3969</div><div class="t" id="t117" style="font-size:16px;color:#f4f4f4;left:1499.60px;top:875.68px;transform:scaleX(1.4059);">0.4193</div><div class="a" style="left:863.3px;top:894.94px;width:738px;height:26.56px;background:#404040"></div><div class="t" id="t118" style="font-size:16.2px;color:#f4f4f4;font-weight:bold;left:882.20px;top:900.87px;transform:scaleX(1.4177);">Target y:CIE31</div><div class="t" id="t119" style="font-size:16px;color:#f4f4f4;left:1067.60px;top:901.94px;transform:scaleX(1.4059);">0.3648</div><div class="t" id="t120" style="font-size:16px;color:#f4f4f4;left:1175.60px;top:901.94px;transform:scaleX(1.4059);">0.4013</div><div class="t" id="t121" style="font-size:16px;color:#f4f4f4;left:1283.60px;top:901.94px;transform:scaleX(1.4059);">0.4358</div><div class="t" id="t122" style="font-size:16px;color:#f4f4f4;left:1391.60px;top:901.94px;transform:scaleX(1.4059);">0.4682</div><div class="t" id="t123" style="font-size:16px;color:#f4f4f4;left:1499.60px;top:901.94px;transform:scaleX(1.4059);">0.5053</div><div class="a" style="left:863.3px;top:921.2px;width:738px;height:26.56px;background:#828282"></div><div class="t" id="t124" style="font-size:16.2px;color:#f4f4f4;font-weight:bold;left:882.20px;top:927.13px;transform:scaleX(1.4617);">Target Y</div><div class="t" id="t125" style="font-size:16px;color:#f4f4f4;left:1067.60px;top:928.20px;transform:scaleX(1.4011);">159.8274</div><div class="t" id="t126" style="font-size:16px;color:#f4f4f4;left:1175.60px;top:928.20px;transform:scaleX(1.4011);">157.0219</div><div class="t" id="t127" style="font-size:16px;color:#f4f4f4;left:1283.60px;top:928.20px;transform:scaleX(1.4011);">154.8664</div><div class="t" id="t128" style="font-size:16px;color:#f4f4f4;left:1391.60px;top:928.20px;transform:scaleX(1.4011);">153.1747</div><div class="t" id="t129" style="font-size:16px;color:#f4f4f4;left:1499.60px;top:928.20px;transform:scaleX(1.4011);">151.5392</div><div class="a" style="left:863.3px;top:947.46px;width:738px;height:26.56px;background:#404040"></div><div class="t" id="t130" style="font-size:16.2px;color:#f4f4f4;font-weight:bold;left:882.20px;top:953.39px;transform:scaleX(1.4455);">ΔE 2000</div><div class="t" id="t131" style="font-size:16px;color:#f4f4f4;left:1067.60px;top:954.46px;transform:scaleX(1.4059);">2.1338</div><div class="t" id="t132" style="font-size:16px;color:#f4f4f4;left:1175.60px;top:954.46px;transform:scaleX(1.4059);">1.5070</div><div class="t" id="t133" style="font-size:16px;color:#f4f4f4;left:1283.60px;top:954.46px;transform:scaleX(1.4059);">1.6256</div><div class="t" id="t134" style="font-size:16px;color:#f4f4f4;left:1391.60px;top:954.46px;transform:scaleX(1.4059);">1.5097</div><div class="t" id="t135" style="font-size:16px;color:#f4f4f4;left:1499.60px;top:954.46px;transform:scaleX(1.4059);">1.3182</div><div class="a" style="left:863.3px;top:973.72px;width:738px;height:26.56px;background:#828282"></div><div class="t" id="t136" style="font-size:16.2px;color:#f4f4f4;font-weight:bold;left:882.20px;top:979.65px;transform:scaleX(1.3813);">ΔE ITP</div><div class="t" id="t137" style="font-size:16px;color:#f4f4f4;left:1067.60px;top:980.72px;transform:scaleX(1.4059);">2.9375</div><div class="t" id="t138" style="font-size:16px;color:#f4f4f4;left:1175.60px;top:980.72px;transform:scaleX(1.4059);">2.7202</div><div class="t" id="t139" style="font-size:16px;color:#f4f4f4;left:1283.60px;top:980.72px;transform:scaleX(1.4059);">3.5297</div><div class="t" id="t140" style="font-size:16px;color:#f4f4f4;left:1391.60px;top:980.72px;transform:scaleX(1.4059);">3.5245</div><div class="t" id="t141" style="font-size:16px;color:#f4f4f4;left:1499.60px;top:980.72px;transform:scaleX(1.4059);">3.1986</div><div class="t" id="t142" style="font-size:14.6px;color:#f4f4f4;font-weight:bold;left:1095.30px;top:769.99px;transform:scaleX(1.3724);">20%</div><div class="t" id="t143" style="font-size:14.6px;color:#f4f4f4;font-weight:bold;left:1202.80px;top:769.99px;transform:scaleX(1.3929);">40%</div><div class="t" id="t144" style="font-size:14.6px;color:#f4f4f4;font-weight:bold;left:1311.00px;top:769.99px;transform:scaleX(1.3929);">60%</div><div class="t" id="t145" style="font-size:14.6px;color:#f4f4f4;font-weight:bold;left:1418.60px;top:769.99px;transform:scaleX(1.3827);">80%</div><div class="t" id="t146" style="font-size:14.6px;color:#f4f4f4;font-weight:bold;left:1521.70px;top:769.99px;transform:scaleX(1.3877);">100%</div><div class="a" style="left:1214.4px;top:187.6px;width:704.6px;height:566px;background:#1c1c1c"></div><div class="a" style="left:1220.6px;top:193.8px;width:692px;height:553.2px;background:#323232"></div><div class="t" id="t147" style="font-size:14.6px;color:#dadada;left:1524.00px;top:200.19px;transform:scaleX(0.9896);">CIE 1976 u'v'</div><div class="t" id="t148" style="font-size:14.6px;color:#dadada;left:1244.80px;top:712.69px;transform:scaleX(0.9600);">0</div><div class="t" id="t149" style="font-size:14.6px;color:#dadada;left:1225.10px;top:669.16px;transform:scaleX(0.9681);">0.05</div><div class="t" id="t150" style="font-size:14.6px;color:#dadada;left:1233.10px;top:627.62px;transform:scaleX(0.9607);">0.1</div><div class="t" id="t151" style="font-size:14.6px;color:#dadada;left:1225.10px;top:586.09px;transform:scaleX(0.9681);">0.15</div><div class="t" id="t152" style="font-size:14.6px;color:#dadada;left:1233.10px;top:544.55px;transform:scaleX(0.9607);">0.2</div><div class="t" id="t153" style="font-size:14.6px;color:#dadada;left:1225.10px;top:503.01px;transform:scaleX(0.9681);">0.25</div><div class="t" id="t154" style="font-size:14.6px;color:#dadada;left:1233.10px;top:461.48px;transform:scaleX(0.9607);">0.3</div><div class="t" id="t155" style="font-size:14.6px;color:#dadada;left:1225.10px;top:419.94px;transform:scaleX(0.9681);">0.35</div><div class="t" id="t156" style="font-size:14.6px;color:#dadada;left:1233.10px;top:378.41px;transform:scaleX(0.9607);">0.4</div><div class="t" id="t157" style="font-size:14.6px;color:#dadada;left:1225.10px;top:336.87px;transform:scaleX(0.9681);">0.45</div><div class="t" id="t158" style="font-size:14.6px;color:#dadada;left:1233.10px;top:295.34px;transform:scaleX(0.9607);">0.5</div><div class="t" id="t159" style="font-size:14.6px;color:#dadada;left:1225.10px;top:253.80px;transform:scaleX(0.9681);">0.55</div><div class="t" id="t160" style="font-size:14.6px;color:#dadada;left:1255.10px;top:726.79px;transform:scaleX(0.9600);">0</div><div class="t" id="t161" style="font-size:14.6px;color:#dadada;left:1299.28px;top:726.79px;transform:scaleX(0.9681);">0.05</div><div class="t" id="t162" style="font-size:14.6px;color:#dadada;left:1357.30px;top:726.79px;transform:scaleX(0.9607);">0.1</div><div class="t" id="t163" style="font-size:14.6px;color:#dadada;left:1407.33px;top:726.79px;transform:scaleX(0.9681);">0.15</div><div class="t" id="t164" style="font-size:14.6px;color:#dadada;left:1465.35px;top:726.79px;transform:scaleX(0.9607);">0.2</div><div class="t" id="t165" style="font-size:14.6px;color:#dadada;left:1515.38px;top:726.79px;transform:scaleX(0.9681);">0.25</div><div class="t" id="t166" style="font-size:14.6px;color:#dadada;left:1573.40px;top:726.79px;transform:scaleX(0.9607);">0.3</div><div class="t" id="t167" style="font-size:14.6px;color:#dadada;left:1623.43px;top:726.79px;transform:scaleX(0.9681);">0.35</div><div class="t" id="t168" style="font-size:14.6px;color:#dadada;left:1681.45px;top:726.79px;transform:scaleX(0.9607);">0.4</div><div class="t" id="t169" style="font-size:14.6px;color:#dadada;left:1731.47px;top:726.79px;transform:scaleX(0.9681);">0.45</div><div class="t" id="t170" style="font-size:14.6px;color:#dadada;left:1789.50px;top:726.79px;transform:scaleX(0.9607);">0.5</div><div class="t" id="t171" style="font-size:14.6px;color:#dadada;left:1839.53px;top:726.79px;transform:scaleX(0.9681);">0.55</div><svg style="left:0;top:0" width="1920" height="1146" viewBox="0 0 1920 1146"><rect x="1259.4" y="218.4" width="649.2" height="499.1" fill="#232323"/><defs><clipPath id="hs"><path d="M1536.9 703.7 L1536.8 703.8 L1536.7 703.8 L1536.6 703.9 L1536.5 704.0 L1536.4 704.1 L1536.2 704.2 L1536.0 704.3 L1535.7 704.3 L1535.4 704.3 L1535.0 704.3 L1534.6 704.2 L1534.1 704.2 L1533.6 704.1 L1533.1 704.0 L1532.5 703.8 L1531.9 703.5 L1531.3 703.1 L1530.6 702.7 L1529.9 702.2 L1529.2 701.7 L1528.3 701.1 L1527.4 700.4 L1526.5 699.6 L1525.3 698.7 L1524.1 697.7 L1522.8 696.7 L1521.5 695.5 L1520.0 694.3 L1518.4 693.0 L1516.8 691.6 L1514.9 690.0 L1513.0 688.4 L1510.9 686.7 L1508.7 685.0 L1506.5 683.1 L1504.1 681.2 L1501.5 679.1 L1498.8 676.9 L1495.9 674.5 L1492.9 671.9 L1489.6 669.2 L1486.3 666.5 L1482.9 663.7 L1479.2 660.8 L1475.4 657.5 L1471.3 653.9 L1466.9 649.8 L1462.2 645.1 L1457.0 639.7 L1451.2 633.5 L1445.1 626.8 L1438.7 619.7 L1432.4 612.5 L1426.2 605.3 L1420.3 598.5 L1415.1 592.1 L1410.4 586.2 L1406.1 580.6 L1402.2 575.3 L1398.4 570.0 L1394.8 564.8 L1391.1 559.4 L1387.3 553.7 L1383.3 547.7 L1379.1 541.4 L1374.9 534.8 L1370.5 528.0 L1366.2 521.1 L1361.8 514.0 L1357.5 506.9 L1353.1 499.7 L1348.9 492.5 L1344.6 485.3 L1340.3 477.9 L1336.0 470.4 L1331.8 462.8 L1327.6 455.2 L1323.5 447.7 L1319.5 440.2 L1315.7 432.8 L1312.1 425.5 L1308.6 418.1 L1305.1 410.8 L1301.8 403.5 L1298.6 396.2 L1295.5 389.2 L1292.6 382.2 L1289.8 375.5 L1287.2 369.0 L1284.6 362.5 L1282.3 356.2 L1280.0 350.0 L1277.9 344.0 L1275.9 338.2 L1274.0 332.6 L1272.2 327.2 L1270.7 322.0 L1269.2 317.1 L1267.9 312.3 L1266.7 307.8 L1265.7 303.4 L1264.7 299.2 L1263.9 295.2 L1263.2 291.3 L1262.5 287.6 L1262.0 284.1 L1261.6 280.8 L1261.3 277.6 L1261.1 274.6 L1260.9 271.7 L1260.9 269.0 L1261.0 266.3 L1261.1 263.7 L1261.3 261.3 L1261.6 259.0 L1262.0 256.8 L1262.5 254.8 L1263.1 252.8 L1263.7 250.9 L1264.4 249.1 L1265.2 247.4 L1266.1 245.8 L1267.0 244.3 L1268.0 242.9 L1269.1 241.6 L1270.3 240.4 L1271.4 239.3 L1272.7 238.2 L1274.0 237.2 L1275.3 236.4 L1276.7 235.6 L1278.2 234.9 L1279.7 234.2 L1281.2 233.7 L1282.8 233.1 L1284.4 232.6 L1286.0 232.2 L1287.7 231.9 L1289.4 231.6 L1291.1 231.3 L1292.9 231.1 L1294.7 230.9 L1296.5 230.8 L1298.3 230.6 L1300.1 230.4 L1302.0 230.3 L1303.9 230.3 L1305.8 230.2 L1307.7 230.2 L1309.6 230.1 L1311.6 230.1 L1313.5 230.1 L1315.4 230.1 L1317.3 230.1 L1319.2 230.1 L1321.1 230.1 L1323.1 230.1 L1325.0 230.2 L1327.0 230.2 L1328.9 230.3 L1330.9 230.3 L1332.9 230.4 L1334.8 230.5 L1336.8 230.6 L1338.8 230.7 L1340.9 230.8 L1342.9 230.9 L1345.0 231.0 L1347.1 231.2 L1349.2 231.3 L1351.3 231.4 L1353.5 231.6 L1355.7 231.8 L1357.9 231.9 L1360.1 232.1 L1362.3 232.3 L1364.5 232.4 L1366.4 232.6 L1368.2 232.8 L1370.1 232.9 L1372.2 233.1 L1374.7 233.3 L1377.6 233.6 L1381.2 234.0 L1385.4 234.4 L1390.1 234.9 L1395.3 235.4 L1400.8 236.0 L1406.6 236.6 L1412.6 237.2 L1418.7 237.9 L1424.8 238.5 L1431.0 239.2 L1437.2 239.9 L1443.7 240.6 L1450.3 241.3 L1457.0 242.1 L1463.9 242.9 L1471.0 243.7 L1478.3 244.5 L1485.8 245.4 L1493.4 246.3 L1501.3 247.2 L1509.3 248.1 L1517.4 249.0 L1525.7 250.0 L1534.2 250.9 L1542.9 251.9 L1551.7 253.0 L1560.8 254.0 L1570.0 255.1 L1579.4 256.1 L1588.9 257.2 L1598.5 258.3 L1608.1 259.4 L1617.6 260.5 L1627.2 261.6 L1637.0 262.8 L1646.8 263.9 L1656.7 265.0 L1666.6 266.2 L1676.3 267.3 L1685.9 268.4 L1695.4 269.5 L1704.7 270.5 L1713.9 271.6 L1723.2 272.7 L1732.3 273.7 L1741.2 274.7 L1749.9 275.7 L1758.3 276.7 L1766.3 277.6 L1774.1 278.5 L1781.6 279.4 L1788.9 280.2 L1795.9 281.0 L1802.7 281.8 L1809.2 282.5 L1815.5 283.3 L1821.5 284.0 L1827.3 284.6 L1832.7 285.2 L1837.9 285.8 L1842.8 286.4 L1847.5 286.9 L1852.0 287.5 L1856.4 288.0 L1860.7 288.5 L1864.9 288.9 L1868.8 289.4 L1872.7 289.8 L1876.3 290.3 L1879.8 290.7 L1883.1 291.0 L1886.3 291.4 L1889.4 291.8 L1892.2 292.1 L1895.0 292.4 L1897.5 292.7 L1899.9 293.0 L1902.2 293.2 L1904.3 293.5 L1906.3 293.7 L1908.2 293.9 L1910.0 294.1 L1911.6 294.3 L1913.1 294.5 L1914.4 294.6 L1915.7 294.8 L1916.9 294.9 L1918.2 295.1 L1919.5 295.2 L1920.8 295.4 L1922.1 295.5 L1923.5 295.7 L1924.8 295.8 L1926.0 296.0 L1927.2 296.1 L1928.3 296.2 L1929.2 296.3 L1930.0 296.4 L1930.7 296.5 L1931.2 296.6 L1931.7 296.6 L1932.1 296.7 L1932.4 296.7 L1932.7 296.7 L1933.0 296.8Z"/></clipPath><clipPath id="pr"><rect x="1259.4" y="218.4" width="649.2" height="499.1"/></clipPath><linearGradient id="r0" gradientUnits="userSpaceOnUse" x1="1286" x2="1359" y1="0" y2="0"><stop offset=".000" stop-color="#00ff00"/><stop offset="1.0" stop-color="#00ff00"/></linearGradient><linearGradient id="r1" gradientUnits="userSpaceOnUse" x1="1280" x2="1382" y1="0" y2="0"><stop offset=".000" stop-color="#00ff00"/><stop offset="1.0" stop-color="#00ff00"/></linearGradient><linearGradient id="r2" gradientUnits="userSpaceOnUse" x1="1275" x2="1402" y1="0" y2="0"><stop offset=".000" stop-color="#00ff00"/><stop offset=".929" stop-color="#02ff00"/><stop offset="1.0" stop-color="#16ff00"/></linearGradient><linearGradient id="r3" gradientUnits="userSpaceOnUse" x1="1272" x2="1420" y1="0" y2="0"><stop offset=".000" stop-color="#00ff00"/><stop offset=".818" stop-color="#01ff00"/><stop offset="1.0" stop-color="#41ff00"/></linearGradient><linearGradient id="r4" gradientUnits="userSpaceOnUse" x1="1270" x2="1439" y1="0" y2="0"><stop offset=".000" stop-color="#00ff04"/><stop offset=".355" stop-color="#00ff00"/><stop offset=".728" stop-color="#00ff00"/><stop offset=".941" stop-color="#59ff00"/><stop offset="1.0" stop-color="#75ff00"/></linearGradient><linearGradient id="r5" gradientUnits="userSpaceOnUse" x1="1268" x2="1457" y1="0" y2="0"><stop offset=".000" stop-color="#00ff07"/><stop offset=".370" stop-color="#00ff00"/><stop offset=".667" stop-color="#02ff00"/><stop offset=".857" stop-color="#5bff00"/><stop offset="1.0" stop-color="#abff00"/></linearGradient><linearGradient id="r6" gradientUnits="userSpaceOnUse" x1="1267" x2="1474" y1="0" y2="0"><stop offset=".000" stop-color="#00ff0b"/><stop offset=".435" stop-color="#00ff00"/><stop offset=".614" stop-color="#01ff00"/><stop offset=".787" stop-color="#5bff00"/><stop offset=".937" stop-color="#b8ff00"/><stop offset="1.0" stop-color="#e5ff00"/></linearGradient><linearGradient id="r7" gradientUnits="userSpaceOnUse" x1="1265" x2="1492" y1="0" y2="0"><stop offset=".000" stop-color="#00ff0e"/><stop offset=".493" stop-color="#00ff00"/><stop offset=".573" stop-color="#02ff00"/><stop offset=".727" stop-color="#5bff00"/><stop offset=".863" stop-color="#b9ff00"/><stop offset=".952" stop-color="#fffe00"/><stop offset="1.0" stop-color="#ffda00"/></linearGradient><linearGradient id="r8" gradientUnits="userSpaceOnUse" x1="1264" x2="1509" y1="0" y2="0"><stop offset=".000" stop-color="#00ff11"/><stop offset=".535" stop-color="#02ff00"/><stop offset=".678" stop-color="#5aff00"/><stop offset=".804" stop-color="#b9ff00"/><stop offset=".886" stop-color="#fffe00"/><stop offset=".951" stop-color="#ffcb00"/><stop offset="1.0" stop-color="#ffae00"/></linearGradient><linearGradient id="r9" gradientUnits="userSpaceOnUse" x1="1264" x2="1526" y1="0" y2="0"><stop offset=".000" stop-color="#00ff15"/><stop offset=".500" stop-color="#01ff01"/><stop offset=".634" stop-color="#5aff00"/><stop offset=".748" stop-color="#b6ff00"/><stop offset=".828" stop-color="#fffd00"/><stop offset=".889" stop-color="#ffca00"/><stop offset=".969" stop-color="#ff9b00"/><stop offset="1.0" stop-color="#ff8d00"/></linearGradient><linearGradient id="r10" gradientUnits="userSpaceOnUse" x1="1263" x2="1544" y1="0" y2="0"><stop offset=".000" stop-color="#00ff18"/><stop offset=".470" stop-color="#00ff06"/><stop offset=".594" stop-color="#5aff00"/><stop offset=".701" stop-color="#b6ff00"/><stop offset=".772" stop-color="#feff00"/><stop offset=".833" stop-color="#ffc900"/><stop offset=".907" stop-color="#ff9a00"/><stop offset="1.0" stop-color="#ff7300"/></linearGradient><linearGradient id="r11" gradientUnits="userSpaceOnUse" x1="1262" x2="1561" y1="0" y2="0"><stop offset=".000" stop-color="#00ff1c"/><stop offset=".448" stop-color="#02ff0a"/><stop offset=".565" stop-color="#5cff03"/><stop offset=".666" stop-color="#baff00"/><stop offset=".729" stop-color="#ffff00"/><stop offset=".783" stop-color="#ffcb00"/><stop offset=".849" stop-color="#ff9d00"/><stop offset=".940" stop-color="#ff7300"/><stop offset="1.0" stop-color="#ff5f00"/></linearGradient><linearGradient id="r12" gradientUnits="userSpaceOnUse" x1="1262" x2="1579" y1="0" y2="0"><stop offset=".000" stop-color="#00ff1f"/><stop offset=".423" stop-color="#01ff0e"/><stop offset=".530" stop-color="#59ff08"/><stop offset=".625" stop-color="#b6ff02"/><stop offset=".688" stop-color="#ffff00"/><stop offset=".735" stop-color="#ffcd00"/><stop offset=".798" stop-color="#ff9e00"/><stop offset=".883" stop-color="#ff7400"/><stop offset="1.0" stop-color="#ff4d00"/></linearGradient><linearGradient id="r13" gradientUnits="userSpaceOnUse" x1="1261" x2="1596" y1="0" y2="0"><stop offset=".000" stop-color="#00ff22"/><stop offset=".403" stop-color="#00ff13"/><stop offset=".504" stop-color="#59ff0d"/><stop offset=".594" stop-color="#b7ff07"/><stop offset=".654" stop-color="#fffe02"/><stop offset=".699" stop-color="#ffcc00"/><stop offset=".758" stop-color="#ff9e00"/><stop offset=".839" stop-color="#ff7300"/><stop offset=".949" stop-color="#ff4d00"/><stop offset="1.0" stop-color="#ff4000"/></linearGradient><linearGradient id="r14" gradientUnits="userSpaceOnUse" x1="1261" x2="1614" y1="0" y2="0"><stop offset=".000" stop-color="#00ff26"/><stop offset=".385" stop-color="#02ff17"/><stop offset=".482" stop-color="#5bff12"/><stop offset=".564" stop-color="#b7ff0c"/><stop offset=".620" stop-color="#fffd08"/><stop offset=".663" stop-color="#ffcb03"/><stop offset=".720" stop-color="#ff9d00"/><stop offset=".796" stop-color="#ff7200"/><stop offset=".901" stop-color="#ff4c00"/><stop offset="1.0" stop-color="#ff3400"/></linearGradient><linearGradient id="r15" gradientUnits="userSpaceOnUse" x1="1261" x2="1631" y1="0" y2="0"><stop offset=".000" stop-color="#00ff29"/><stop offset=".368" stop-color="#01ff1c"/><stop offset=".459" stop-color="#5bff17"/><stop offset=".538" stop-color="#b7ff12"/><stop offset=".589" stop-color="#feff0e"/><stop offset=".635" stop-color="#ffc808"/><stop offset=".689" stop-color="#ff9a03"/><stop offset=".762" stop-color="#ff7000"/><stop offset=".862" stop-color="#ff4b00"/><stop offset="1.0" stop-color="#ff2a00"/></linearGradient><linearGradient id="r16" gradientUnits="userSpaceOnUse" x1="1261" x2="1648" y1="0" y2="0"><stop offset=".000" stop-color="#00ff2c"/><stop offset=".351" stop-color="#00ff20"/><stop offset=".439" stop-color="#5bff1c"/><stop offset=".514" stop-color="#b7ff17"/><stop offset=".563" stop-color="#feff14"/><stop offset=".605" stop-color="#ffca0d"/><stop offset=".656" stop-color="#ff9b07"/><stop offset=".726" stop-color="#ff7101"/><stop offset=".822" stop-color="#ff4b00"/><stop offset=".961" stop-color="#ff2900"/><stop offset="1.0" stop-color="#ff2200"/></linearGradient><linearGradient id="r17" gradientUnits="userSpaceOnUse" x1="1260" x2="1666" y1="0" y2="0"><stop offset=".000" stop-color="#00ff30"/><stop offset=".340" stop-color="#02ff25"/><stop offset=".421" stop-color="#5aff21"/><stop offset=".493" stop-color="#b8ff1d"/><stop offset=".539" stop-color="#ffff19"/><stop offset=".576" stop-color="#ffcc12"/><stop offset=".623" stop-color="#ff9e0b"/><stop offset=".687" stop-color="#ff7405"/><stop offset=".776" stop-color="#ff4e00"/><stop offset=".904" stop-color="#ff2b00"/><stop offset="1.0" stop-color="#ff1a00"/></linearGradient><linearGradient id="r18" gradientUnits="userSpaceOnUse" x1="1260" x2="1683" y1="0" y2="0"><stop offset=".000" stop-color="#00ff33"/><stop offset=".326" stop-color="#01ff2a"/><stop offset=".404" stop-color="#5aff26"/><stop offset=".473" stop-color="#b8ff22"/><stop offset=".518" stop-color="#fffe1f"/><stop offset=".553" stop-color="#ffcb17"/><stop offset=".598" stop-color="#ff9e10"/><stop offset=".660" stop-color="#ff7309"/><stop offset=".745" stop-color="#ff4d02"/><stop offset=".868" stop-color="#ff2b00"/><stop offset="1.0" stop-color="#ff1400"/></linearGradient><linearGradient id="r19" gradientUnits="userSpaceOnUse" x1="1260" x2="1700" y1="0" y2="0"><stop offset=".000" stop-color="#00ff37"/><stop offset=".314" stop-color="#00ff2e"/><stop offset=".389" stop-color="#5aff2b"/><stop offset=".455" stop-color="#b8ff28"/><stop offset=".498" stop-color="#fffd25"/><stop offset=".532" stop-color="#ffca1c"/><stop offset=".575" stop-color="#ff9d14"/><stop offset=".634" stop-color="#ff720c"/><stop offset=".716" stop-color="#ff4c05"/><stop offset=".834" stop-color="#ff2a00"/><stop offset="1.0" stop-color="#ff0e00"/></linearGradient><linearGradient id="r20" gradientUnits="userSpaceOnUse" x1="1260" x2="1718" y1="0" y2="0"><stop offset=".000" stop-color="#00ff3a"/><stop offset=".303" stop-color="#02ff33"/><stop offset=".376" stop-color="#5cff31"/><stop offset=".437" stop-color="#b8ff2e"/><stop offset=".476" stop-color="#fdff2c"/><stop offset=".513" stop-color="#ffc720"/><stop offset=".557" stop-color="#ff9817"/><stop offset=".616" stop-color="#ff6e0f"/><stop offset=".697" stop-color="#ff4807"/><stop offset=".814" stop-color="#ff2700"/><stop offset=".993" stop-color="#ff0a00"/><stop offset="1.0" stop-color="#ff0900"/></linearGradient><linearGradient id="r21" gradientUnits="userSpaceOnUse" x1="1260" x2="1735" y1="0" y2="0"><stop offset=".000" stop-color="#00ff3e"/><stop offset=".293" stop-color="#01ff38"/><stop offset=".360" stop-color="#59ff36"/><stop offset=".419" stop-color="#b5ff34"/><stop offset=".459" stop-color="#feff32"/><stop offset=".493" stop-color="#ffc926"/><stop offset=".533" stop-color="#ff9b1c"/><stop offset=".587" stop-color="#ff7113"/><stop offset=".663" stop-color="#ff4b0a"/><stop offset=".773" stop-color="#ff2903"/><stop offset=".939" stop-color="#ff0c00"/><stop offset="1.0" stop-color="#ff0400"/></linearGradient><linearGradient id="r22" gradientUnits="userSpaceOnUse" x1="1261" x2="1753" y1="0" y2="0"><stop offset=".000" stop-color="#00ff41"/><stop offset=".280" stop-color="#01ff3d"/><stop offset=".346" stop-color="#59ff3b"/><stop offset=".402" stop-color="#b5ff3a"/><stop offset=".441" stop-color="#ffff38"/><stop offset=".470" stop-color="#ffce2d"/><stop offset=".508" stop-color="#ff9e21"/><stop offset=".559" stop-color="#ff7417"/><stop offset=".630" stop-color="#ff4e0e"/><stop offset=".732" stop-color="#ff2c06"/><stop offset=".886" stop-color="#ff0e00"/><stop offset="1.0" stop-color="#ff0000"/></linearGradient><linearGradient id="r23" gradientUnits="userSpaceOnUse" x1="1261" x2="1770" y1="0" y2="0"><stop offset=".000" stop-color="#00ff45"/><stop offset=".271" stop-color="#00ff42"/><stop offset=".332" stop-color="#55ff41"/><stop offset=".387" stop-color="#b2ff40"/><stop offset=".426" stop-color="#fffe3f"/><stop offset=".454" stop-color="#ffcd32"/><stop offset=".491" stop-color="#ff9e26"/><stop offset=".540" stop-color="#ff731b"/><stop offset=".609" stop-color="#ff4d11"/><stop offset=".707" stop-color="#ff2b08"/><stop offset=".857" stop-color="#ff0d00"/><stop offset=".982" stop-color="#ff0000"/><stop offset="1.0" stop-color="#ff0000"/></linearGradient><linearGradient id="r24" gradientUnits="userSpaceOnUse" x1="1261" x2="1788" y1="0" y2="0"><stop offset=".000" stop-color="#00ff49"/><stop offset=".264" stop-color="#01ff47"/><stop offset=".324" stop-color="#5bff46"/><stop offset=".378" stop-color="#b9ff46"/><stop offset=".412" stop-color="#fffd45"/><stop offset=".438" stop-color="#ffcc37"/><stop offset=".472" stop-color="#ff9f2b"/><stop offset=".520" stop-color="#ff741f"/><stop offset=".584" stop-color="#ff4e14"/><stop offset=".677" stop-color="#ff2c0b"/><stop offset=".818" stop-color="#ff0e02"/><stop offset=".945" stop-color="#ff0000"/><stop offset="1.0" stop-color="#ff0000"/></linearGradient><linearGradient id="r25" gradientUnits="userSpaceOnUse" x1="1261" x2="1805" y1="0" y2="0"><stop offset=".000" stop-color="#00ff4c"/><stop offset=".256" stop-color="#01ff4c"/><stop offset=".314" stop-color="#5bff4c"/><stop offset=".364" stop-color="#b6ff4c"/><stop offset=".399" stop-color="#fffd4b"/><stop offset=".425" stop-color="#ffcb3c"/><stop offset=".458" stop-color="#ff9e2f"/><stop offset=".504" stop-color="#ff7322"/><stop offset=".566" stop-color="#ff4d17"/><stop offset=".656" stop-color="#ff2b0d"/><stop offset=".792" stop-color="#ff0e04"/><stop offset=".912" stop-color="#ff0000"/><stop offset="1.0" stop-color="#ff0000"/></linearGradient><linearGradient id="r26" gradientUnits="userSpaceOnUse" x1="1261" x2="1822" y1="0" y2="0"><stop offset=".000" stop-color="#00ff50"/><stop offset=".248" stop-color="#00ff51"/><stop offset=".303" stop-color="#57ff52"/><stop offset=".351" stop-color="#b3ff52"/><stop offset=".385" stop-color="#feff53"/><stop offset=".414" stop-color="#ffc741"/><stop offset=".447" stop-color="#ff9932"/><stop offset=".492" stop-color="#ff7025"/><stop offset=".554" stop-color="#ff4a19"/><stop offset=".645" stop-color="#ff280e"/><stop offset=".783" stop-color="#ff0b05"/><stop offset=".882" stop-color="#ff0001"/><stop offset="1.0" stop-color="#ff0000"/></linearGradient><linearGradient id="r27" gradientUnits="userSpaceOnUse" x1="1261" x2="1840" y1="0" y2="0"><stop offset=".000" stop-color="#00ff54"/><stop offset=".242" stop-color="#02ff57"/><stop offset=".295" stop-color="#5aff58"/><stop offset=".342" stop-color="#b6ff59"/><stop offset=".373" stop-color="#ffff59"/><stop offset=".397" stop-color="#ffcd48"/><stop offset=".428" stop-color="#ff9e39"/><stop offset=".470" stop-color="#ff742a"/><stop offset=".527" stop-color="#ff4f1d"/><stop offset=".610" stop-color="#ff2c12"/><stop offset=".734" stop-color="#ff0f08"/><stop offset=".848" stop-color="#ff0002"/><stop offset="1.0" stop-color="#ff0000"/></linearGradient><linearGradient id="r28" gradientUnits="userSpaceOnUse" x1="1262" x2="1857" y1="0" y2="0"><stop offset=".000" stop-color="#00ff58"/><stop offset=".234" stop-color="#01ff5c"/><stop offset=".286" stop-color="#5aff5d"/><stop offset=".331" stop-color="#b7ff5f"/><stop offset=".361" stop-color="#ffff60"/><stop offset=".385" stop-color="#ffcc4e"/><stop offset=".415" stop-color="#ff9e3d"/><stop offset=".455" stop-color="#ff742e"/><stop offset=".511" stop-color="#ff4e20"/><stop offset=".592" stop-color="#ff2c14"/><stop offset=".714" stop-color="#ff0e09"/><stop offset=".822" stop-color="#ff0004"/><stop offset="1.0" stop-color="#ff0000"/></linearGradient><linearGradient id="r29" gradientUnits="userSpaceOnUse" x1="1262" x2="1875" y1="0" y2="0"><stop offset=".000" stop-color="#00ff5b"/><stop offset=".227" stop-color="#00ff61"/><stop offset=".277" stop-color="#59ff63"/><stop offset=".321" stop-color="#b7ff66"/><stop offset=".351" stop-color="#fffe67"/><stop offset=".374" stop-color="#ffcb53"/><stop offset=".403" stop-color="#ff9d42"/><stop offset=".442" stop-color="#ff7332"/><stop offset=".496" stop-color="#ff4d23"/><stop offset=".574" stop-color="#ff2b16"/><stop offset=".693" stop-color="#ff0d0b"/><stop offset=".794" stop-color="#ff0005"/><stop offset="1.0" stop-color="#ff0000"/></linearGradient><linearGradient id="r30" gradientUnits="userSpaceOnUse" x1="1262" x2="1892" y1="0" y2="0"><stop offset=".000" stop-color="#00ff5f"/><stop offset=".222" stop-color="#02ff67"/><stop offset=".271" stop-color="#5cff6a"/><stop offset=".313" stop-color="#b7ff6c"/><stop offset=".341" stop-color="#fffd6d"/><stop offset=".363" stop-color="#ffca59"/><stop offset=".392" stop-color="#ff9c46"/><stop offset=".430" stop-color="#ff7235"/><stop offset=".483" stop-color="#ff4c26"/><stop offset=".559" stop-color="#ff2b19"/><stop offset=".675" stop-color="#ff0d0d"/><stop offset=".770" stop-color="#ff0007"/><stop offset="1.0" stop-color="#ff0000"/></linearGradient><linearGradient id="r31" gradientUnits="userSpaceOnUse" x1="1263" x2="1909.6" y1="0" y2="0"><stop offset=".000" stop-color="#00ff63"/><stop offset=".215" stop-color="#01ff6c"/><stop offset=".261" stop-color="#58ff70"/><stop offset=".302" stop-color="#b4ff73"/><stop offset=".329" stop-color="#feff75"/><stop offset=".354" stop-color="#ffc65d"/><stop offset=".382" stop-color="#ff994a"/><stop offset=".419" stop-color="#ff7039"/><stop offset=".472" stop-color="#ff4a28"/><stop offset=".547" stop-color="#ff281a"/><stop offset=".663" stop-color="#ff0b0e"/><stop offset=".745" stop-color="#ff0008"/><stop offset="1.001" stop-color="#ff0000"/></linearGradient><linearGradient id="r32" gradientUnits="userSpaceOnUse" x1="1263" x2="1909.6" y1="0" y2="0"><stop offset=".000" stop-color="#00ff67"/><stop offset=".215" stop-color="#00ff72"/><stop offset=".261" stop-color="#58ff76"/><stop offset=".302" stop-color="#b4ff7a"/><stop offset=".329" stop-color="#feff7d"/><stop offset=".351" stop-color="#ffcb66"/><stop offset=".379" stop-color="#ff9c51"/><stop offset=".416" stop-color="#ff723e"/><stop offset=".467" stop-color="#ff4c2d"/><stop offset=".541" stop-color="#ff2a1d"/><stop offset=".653" stop-color="#ff0d10"/><stop offset=".742" stop-color="#ff000a"/><stop offset="1.001" stop-color="#ff0000"/></linearGradient><linearGradient id="r33" gradientUnits="userSpaceOnUse" x1="1264" x2="1909.6" y1="0" y2="0"><stop offset=".000" stop-color="#00ff6b"/><stop offset=".215" stop-color="#02ff78"/><stop offset=".262" stop-color="#5bff7c"/><stop offset=".302" stop-color="#b8ff81"/><stop offset=".328" stop-color="#ffff84"/><stop offset=".349" stop-color="#ffce6d"/><stop offset=".375" stop-color="#ffa057"/><stop offset=".410" stop-color="#ff7543"/><stop offset=".460" stop-color="#ff4f31"/><stop offset=".531" stop-color="#ff2d21"/><stop offset=".638" stop-color="#ff0f13"/><stop offset=".737" stop-color="#ff000b"/><stop offset="1.001" stop-color="#ff0000"/></linearGradient><linearGradient id="r34" gradientUnits="userSpaceOnUse" x1="1264" x2="1909.6" y1="0" y2="0"><stop offset=".000" stop-color="#00ff6f"/><stop offset=".215" stop-color="#01ff7e"/><stop offset=".262" stop-color="#5bff82"/><stop offset=".302" stop-color="#b8ff88"/><stop offset=".328" stop-color="#fffe8b"/><stop offset=".349" stop-color="#ffcd73"/><stop offset=".375" stop-color="#ff9f5c"/><stop offset=".410" stop-color="#ff7547"/><stop offset=".460" stop-color="#ff4e34"/><stop offset=".531" stop-color="#ff2c24"/><stop offset=".638" stop-color="#ff0e15"/><stop offset=".734" stop-color="#ff000d"/><stop offset="1.001" stop-color="#ff0001"/></linearGradient><linearGradient id="r35" gradientUnits="userSpaceOnUse" x1="1264" x2="1909.6" y1="0" y2="0"><stop offset=".000" stop-color="#00ff73"/><stop offset=".215" stop-color="#00ff83"/><stop offset=".262" stop-color="#5aff89"/><stop offset=".302" stop-color="#b9ff8f"/><stop offset=".328" stop-color="#fffd92"/><stop offset=".349" stop-color="#ffcc79"/><stop offset=".375" stop-color="#ff9e61"/><stop offset=".410" stop-color="#ff744b"/><stop offset=".460" stop-color="#ff4d38"/><stop offset=".531" stop-color="#ff2b26"/><stop offset=".640" stop-color="#ff0d17"/><stop offset=".733" stop-color="#ff000f"/><stop offset="1.001" stop-color="#ff0002"/></linearGradient><linearGradient id="r36" gradientUnits="userSpaceOnUse" x1="1265" x2="1909.6" y1="0" y2="0"><stop offset=".000" stop-color="#00ff77"/><stop offset=".216" stop-color="#02ff89"/><stop offset=".261" stop-color="#5aff8f"/><stop offset=".299" stop-color="#b5ff96"/><stop offset=".326" stop-color="#fdff9b"/><stop offset=".351" stop-color="#ffc57b"/><stop offset=".379" stop-color="#ff9762"/><stop offset=".416" stop-color="#ff6d4c"/><stop offset=".467" stop-color="#ff4838"/><stop offset=".541" stop-color="#ff2726"/><stop offset=".656" stop-color="#ff0a17"/><stop offset=".731" stop-color="#ff0010"/><stop offset="1.001" stop-color="#ff0003"/></linearGradient><linearGradient id="r37" gradientUnits="userSpaceOnUse" x1="1265" x2="1909.6" y1="0" y2="0"><stop offset=".000" stop-color="#00ff7b"/><stop offset=".216" stop-color="#01ff8f"/><stop offset=".261" stop-color="#59ff96"/><stop offset=".299" stop-color="#b5ff9d"/><stop offset=".326" stop-color="#feffa2"/><stop offset=".348" stop-color="#ffca85"/><stop offset=".374" stop-color="#ff9c6b"/><stop offset=".410" stop-color="#ff7253"/><stop offset=".459" stop-color="#ff4c3e"/><stop offset=".531" stop-color="#ff2a2b"/><stop offset=".639" stop-color="#ff0c1a"/><stop offset=".726" stop-color="#ff0012"/><stop offset="1.001" stop-color="#ff0004"/></linearGradient><linearGradient id="r38" gradientUnits="userSpaceOnUse" x1="1266" x2="1909.6" y1="0" y2="0"><stop offset=".000" stop-color="#00ff7f"/><stop offset=".214" stop-color="#00ff95"/><stop offset=".259" stop-color="#59ff9d"/><stop offset=".298" stop-color="#b5ffa4"/><stop offset=".325" stop-color="#ffffaa"/><stop offset=".345" stop-color="#ffcc8d"/><stop offset=".371" stop-color="#ff9e71"/><stop offset=".407" stop-color="#ff7358"/><stop offset=".455" stop-color="#ff4d42"/><stop offset=".525" stop-color="#ff2b2e"/><stop offset=".631" stop-color="#ff0e1d"/><stop offset=".721" stop-color="#ff0014"/><stop offset="1.001" stop-color="#ff0005"/></linearGradient><linearGradient id="r39" gradientUnits="userSpaceOnUse" x1="1266" x2="1909.6" y1="0" y2="0"><stop offset=".000" stop-color="#00ff84"/><stop offset=".214" stop-color="#00ff9c"/><stop offset=".255" stop-color="#4fffa3"/><stop offset=".294" stop-color="#aaffab"/><stop offset=".325" stop-color="#fffeb2"/><stop offset=".345" stop-color="#ffcb93"/><stop offset=".371" stop-color="#ff9d76"/><stop offset=".407" stop-color="#ff725c"/><stop offset=".455" stop-color="#ff4c45"/><stop offset=".525" stop-color="#ff2b31"/><stop offset=".631" stop-color="#ff0d1f"/><stop offset=".719" stop-color="#ff0015"/><stop offset="1.001" stop-color="#ff0006"/></linearGradient><linearGradient id="r40" gradientUnits="userSpaceOnUse" x1="1267" x2="1909.6" y1="0" y2="0"><stop offset=".000" stop-color="#00ff88"/><stop offset=".209" stop-color="#00ffa1"/><stop offset=".215" stop-color="#01ffa2"/><stop offset=".258" stop-color="#58ffaa"/><stop offset=".297" stop-color="#b6ffb3"/><stop offset=".324" stop-color="#fffdb9"/><stop offset=".344" stop-color="#ffca99"/><stop offset=".370" stop-color="#ff9c7b"/><stop offset=".405" stop-color="#ff7261"/><stop offset=".453" stop-color="#ff4c49"/><stop offset=".523" stop-color="#ff2a33"/><stop offset=".629" stop-color="#ff0d21"/><stop offset=".716" stop-color="#ff0017"/><stop offset="1.001" stop-color="#ff0007"/></linearGradient><linearGradient id="r41" gradientUnits="userSpaceOnUse" x1="1267" x2="1909.6" y1="0" y2="0"><stop offset=".000" stop-color="#00ff8c"/><stop offset=".201" stop-color="#00ffa6"/><stop offset=".215" stop-color="#00ffa8"/><stop offset=".258" stop-color="#58ffb1"/><stop offset=".297" stop-color="#b6ffbb"/><stop offset=".322" stop-color="#fdffc2"/><stop offset=".347" stop-color="#ffc39b"/><stop offset=".373" stop-color="#ff967e"/><stop offset=".409" stop-color="#ff6d62"/><stop offset=".459" stop-color="#ff484a"/><stop offset=".532" stop-color="#ff2634"/><stop offset=".643" stop-color="#ff0a21"/><stop offset=".714" stop-color="#ff0019"/><stop offset="1.001" stop-color="#ff0008"/></linearGradient><linearGradient id="r42" gradientUnits="userSpaceOnUse" x1="1268" x2="1909.6" y1="0" y2="0"><stop offset=".000" stop-color="#00ff91"/><stop offset=".195" stop-color="#00ffab"/><stop offset=".215" stop-color="#02ffaf"/><stop offset=".259" stop-color="#5bffb9"/><stop offset=".296" stop-color="#b6ffc3"/><stop offset=".321" stop-color="#feffcb"/><stop offset=".343" stop-color="#ffc9a6"/><stop offset=".369" stop-color="#ff9a86"/><stop offset=".404" stop-color="#ff7169"/><stop offset=".452" stop-color="#ff4b50"/><stop offset=".522" stop-color="#ff2938"/><stop offset=".628" stop-color="#ff0c24"/><stop offset=".709" stop-color="#ff001b"/><stop offset="1.001" stop-color="#ff0009"/></linearGradient><linearGradient id="r43" gradientUnits="userSpaceOnUse" x1="1268" x2="1909.6" y1="0" y2="0"><stop offset=".000" stop-color="#00ff95"/><stop offset=".190" stop-color="#00ffb0"/><stop offset=".215" stop-color="#01ffb5"/><stop offset=".259" stop-color="#5bffc0"/><stop offset=".296" stop-color="#b7ffcb"/><stop offset=".321" stop-color="#ffffd3"/><stop offset=".341" stop-color="#ffcbae"/><stop offset=".366" stop-color="#ff9e8e"/><stop offset=".401" stop-color="#ff7370"/><stop offset=".447" stop-color="#ff4d55"/><stop offset=".514" stop-color="#ff2b3d"/><stop offset=".617" stop-color="#ff0e28"/><stop offset=".704" stop-color="#ff001d"/><stop offset=".994" stop-color="#ff000a"/><stop offset="1.001" stop-color="#ff000a"/></linearGradient><linearGradient id="r44" gradientUnits="userSpaceOnUse" x1="1269" x2="1909.6" y1="0" y2="0"><stop offset=".000" stop-color="#00ff9a"/><stop offset=".184" stop-color="#00ffb6"/><stop offset=".214" stop-color="#00ffbc"/><stop offset=".258" stop-color="#5affc7"/><stop offset=".295" stop-color="#b7ffd3"/><stop offset=".320" stop-color="#ffffdc"/><stop offset=".339" stop-color="#ffcdb7"/><stop offset=".364" stop-color="#ff9f95"/><stop offset=".397" stop-color="#ff7576"/><stop offset=".442" stop-color="#ff4f5b"/><stop offset=".507" stop-color="#ff2d41"/><stop offset=".606" stop-color="#ff0f2b"/><stop offset=".701" stop-color="#ff001f"/><stop offset=".982" stop-color="#ff000b"/><stop offset="1.001" stop-color="#ff000a"/></linearGradient><linearGradient id="r45" gradientUnits="userSpaceOnUse" x1="1270" x2="1909.6" y1="0" y2="0"><stop offset=".000" stop-color="#00ff9e"/><stop offset=".180" stop-color="#00ffbb"/><stop offset=".213" stop-color="#00ffc3"/><stop offset=".253" stop-color="#53ffce"/><stop offset=".291" stop-color="#afffda"/><stop offset=".319" stop-color="#fffee4"/><stop offset=".338" stop-color="#ffccbe"/><stop offset=".363" stop-color="#ff9e9b"/><stop offset=".396" stop-color="#ff747b"/><stop offset=".441" stop-color="#ff4f5e"/><stop offset=".507" stop-color="#ff2d44"/><stop offset=".607" stop-color="#ff0f2d"/><stop offset=".697" stop-color="#ff0020"/><stop offset=".969" stop-color="#ff000d"/><stop offset="1.001" stop-color="#ff000b"/></linearGradient><linearGradient id="r46" gradientUnits="userSpaceOnUse" x1="1270" x2="1909" y1="0" y2="0"><stop offset=".000" stop-color="#00ffa3"/><stop offset=".175" stop-color="#00ffc0"/><stop offset=".214" stop-color="#01ffca"/><stop offset=".257" stop-color="#59ffd6"/><stop offset=".294" stop-color="#b8ffe4"/><stop offset=".319" stop-color="#fffdec"/><stop offset=".338" stop-color="#ffcbc5"/><stop offset=".363" stop-color="#ff9da0"/><stop offset=".396" stop-color="#ff737f"/><stop offset=".441" stop-color="#ff4e61"/><stop offset=".507" stop-color="#ff2c47"/><stop offset=".607" stop-color="#ff0e2f"/><stop offset=".695" stop-color="#ff0022"/><stop offset=".959" stop-color="#ff000e"/><stop offset="1.0" stop-color="#ff000c"/></linearGradient><linearGradient id="r47" gradientUnits="userSpaceOnUse" x1="1271" x2="1907" y1="0" y2="0"><stop offset=".000" stop-color="#00ffa7"/><stop offset=".170" stop-color="#00ffc5"/><stop offset=".214" stop-color="#00ffd1"/><stop offset=".256" stop-color="#59ffde"/><stop offset=".292" stop-color="#b4ffeb"/><stop offset=".318" stop-color="#fdfff6"/><stop offset=".340" stop-color="#ffc7c9"/><stop offset=".365" stop-color="#ff9aa4"/><stop offset=".399" stop-color="#ff6f81"/><stop offset=".447" stop-color="#ff4a62"/><stop offset=".516" stop-color="#ff2847"/><stop offset=".621" stop-color="#ff0b2f"/><stop offset=".695" stop-color="#ff0024"/><stop offset=".954" stop-color="#ff0010"/><stop offset="1.0" stop-color="#ff000e"/></linearGradient><linearGradient id="r48" gradientUnits="userSpaceOnUse" x1="1271" x2="1905" y1="0" y2="0"><stop offset=".000" stop-color="#00ffac"/><stop offset=".167" stop-color="#00ffcb"/><stop offset=".215" stop-color="#00ffd8"/><stop offset=".254" stop-color="#51ffe5"/><stop offset=".292" stop-color="#b0fff3"/><stop offset=".319" stop-color="#fefeff"/><stop offset=".341" stop-color="#ffc6d0"/><stop offset=".366" stop-color="#ff99a9"/><stop offset=".401" stop-color="#ff6e85"/><stop offset=".448" stop-color="#ff4966"/><stop offset=".517" stop-color="#ff2749"/><stop offset=".623" stop-color="#ff0a31"/><stop offset=".694" stop-color="#ff0026"/><stop offset=".946" stop-color="#ff0011"/><stop offset="1.0" stop-color="#ff000f"/></linearGradient><linearGradient id="r49" gradientUnits="userSpaceOnUse" x1="1272" x2="1903" y1="0" y2="0"><stop offset=".000" stop-color="#00ffb1"/><stop offset=".163" stop-color="#00ffd0"/><stop offset=".216" stop-color="#02ffdf"/><stop offset=".258" stop-color="#5cffee"/><stop offset=".295" stop-color="#b9fffd"/><stop offset=".322" stop-color="#fef4ff"/><stop offset=".344" stop-color="#ffbed1"/><stop offset=".371" stop-color="#ff91a9"/><stop offset=".407" stop-color="#ff6785"/><stop offset=".458" stop-color="#ff4364"/><stop offset=".532" stop-color="#ff2248"/><stop offset=".647" stop-color="#ff052f"/><stop offset=".699" stop-color="#ff0027"/><stop offset=".951" stop-color="#ff0012"/><stop offset="1.0" stop-color="#ff0010"/></linearGradient><linearGradient id="r50" gradientUnits="userSpaceOnUse" x1="1273" x2="1901" y1="0" y2="0"><stop offset=".000" stop-color="#00ffb6"/><stop offset=".159" stop-color="#00ffd6"/><stop offset=".215" stop-color="#01ffe6"/><stop offset=".256" stop-color="#58fff5"/><stop offset=".285" stop-color="#9dfcff"/><stop offset=".325" stop-color="#feeaff"/><stop offset=".349" stop-color="#ffb4cf"/><stop offset=".377" stop-color="#ff87a6"/><stop offset=".416" stop-color="#ff6083"/><stop offset=".470" stop-color="#ff3c62"/><stop offset=".549" stop-color="#ff1c45"/><stop offset=".674" stop-color="#ff002d"/><stop offset=".898" stop-color="#ff0017"/><stop offset="1.0" stop-color="#ff0011"/></linearGradient><linearGradient id="r51" gradientUnits="userSpaceOnUse" x1="1273" x2="1899" y1="0" y2="0"><stop offset=".000" stop-color="#00ffba"/><stop offset=".157" stop-color="#00ffdb"/><stop offset=".216" stop-color="#00ffee"/><stop offset=".256" stop-color="#54fffd"/><stop offset=".329" stop-color="#fee0ff"/><stop offset=".355" stop-color="#ffaacd"/><stop offset=".385" stop-color="#ff7ea4"/><stop offset=".427" stop-color="#ff577f"/><stop offset=".486" stop-color="#ff345f"/><stop offset=".573" stop-color="#ff1542"/><stop offset=".684" stop-color="#ff002d"/><stop offset=".912" stop-color="#ff0017"/><stop offset="1.0" stop-color="#ff0012"/></linearGradient><linearGradient id="r52" gradientUnits="userSpaceOnUse" x1="1274" x2="1897" y1="0" y2="0"><stop offset=".000" stop-color="#00ffbf"/><stop offset=".154" stop-color="#00ffe1"/><stop offset=".217" stop-color="#02fff6"/><stop offset=".247" stop-color="#40fcff"/><stop offset=".321" stop-color="#e3dcff"/><stop offset=".334" stop-color="#ffd4fd"/><stop offset=".356" stop-color="#ffa6d1"/><stop offset=".387" stop-color="#ff7ca7"/><stop offset=".429" stop-color="#ff5582"/><stop offset=".488" stop-color="#ff3261"/><stop offset=".578" stop-color="#ff1443"/><stop offset=".684" stop-color="#ff002f"/><stop offset=".909" stop-color="#ff0019"/><stop offset="1.0" stop-color="#ff0013"/></linearGradient><linearGradient id="r53" gradientUnits="userSpaceOnUse" x1="1275" x2="1895" y1="0" y2="0"><stop offset=".000" stop-color="#00ffc4"/><stop offset=".150" stop-color="#00ffe7"/><stop offset=".216" stop-color="#01fffd"/><stop offset=".295" stop-color="#a3e0ff"/><stop offset=".335" stop-color="#feceff"/><stop offset=".363" stop-color="#ff9bcc"/><stop offset=".395" stop-color="#ff72a4"/><stop offset=".440" stop-color="#ff4c7e"/><stop offset=".506" stop-color="#ff2a5c"/><stop offset=".606" stop-color="#ff0c3f"/><stop offset=".685" stop-color="#ff0031"/><stop offset=".906" stop-color="#ff001a"/><stop offset="1.0" stop-color="#ff0014"/></linearGradient><linearGradient id="r54" gradientUnits="userSpaceOnUse" x1="1275" x2="1893" y1="0" y2="0"><stop offset=".000" stop-color="#00ffc9"/><stop offset=".147" stop-color="#00ffec"/><stop offset=".209" stop-color="#00fdff"/><stop offset=".217" stop-color="#00f9ff"/><stop offset=".294" stop-color="#9bdaff"/><stop offset=".340" stop-color="#fec6ff"/><stop offset=".367" stop-color="#ff95cd"/><stop offset=".401" stop-color="#ff6ca3"/><stop offset=".448" stop-color="#ff477e"/><stop offset=".516" stop-color="#ff265c"/><stop offset=".620" stop-color="#ff093f"/><stop offset=".686" stop-color="#ff0033"/><stop offset=".903" stop-color="#ff001c"/><stop offset="1.0" stop-color="#ff0015"/></linearGradient><linearGradient id="r55" gradientUnits="userSpaceOnUse" x1="1276" x2="1891" y1="0" y2="0"><stop offset=".000" stop-color="#00ffcf"/><stop offset=".145" stop-color="#00fff2"/><stop offset=".189" stop-color="#00fdff"/><stop offset=".218" stop-color="#02f2ff"/><stop offset=".301" stop-color="#a4d0ff"/><stop offset=".345" stop-color="#ffbbfd"/><stop offset=".371" stop-color="#ff8fce"/><stop offset=".405" stop-color="#ff68a5"/><stop offset=".452" stop-color="#ff447f"/><stop offset=".520" stop-color="#ff245e"/><stop offset=".624" stop-color="#ff0840"/><stop offset=".686" stop-color="#ff0035"/><stop offset=".899" stop-color="#ff001d"/><stop offset="1.0" stop-color="#ff0017"/></linearGradient><linearGradient id="r56" gradientUnits="userSpaceOnUse" x1="1277" x2="1889" y1="0" y2="0"><stop offset=".000" stop-color="#00ffd4"/><stop offset=".142" stop-color="#00fff8"/><stop offset=".170" stop-color="#00fcff"/><stop offset=".217" stop-color="#01ebff"/><stop offset=".302" stop-color="#a2c9ff"/><stop offset=".348" stop-color="#ffb4fd"/><stop offset=".374" stop-color="#ff8acf"/><stop offset=".410" stop-color="#ff62a4"/><stop offset=".459" stop-color="#ff407f"/><stop offset=".529" stop-color="#ff215d"/><stop offset=".637" stop-color="#ff0540"/><stop offset=".690" stop-color="#ff0036"/><stop offset=".902" stop-color="#ff001e"/><stop offset="1.0" stop-color="#ff0018"/></linearGradient><linearGradient id="r57" gradientUnits="userSpaceOnUse" x1="1277" x2="1887" y1="0" y2="0"><stop offset=".000" stop-color="#00ffd9"/><stop offset=".149" stop-color="#00fdff"/><stop offset=".218" stop-color="#00e4ff"/><stop offset=".302" stop-color="#9bc4ff"/><stop offset=".352" stop-color="#ffadfd"/><stop offset=".379" stop-color="#ff84d0"/><stop offset=".415" stop-color="#ff5fa6"/><stop offset=".464" stop-color="#ff3d80"/><stop offset=".536" stop-color="#ff1e5e"/><stop offset=".644" stop-color="#ff0440"/><stop offset=".697" stop-color="#ff0037"/><stop offset=".910" stop-color="#ff001f"/><stop offset="1.0" stop-color="#ff0019"/></linearGradient><linearGradient id="r58" gradientUnits="userSpaceOnUse" x1="1278" x2="1886" y1="0" y2="0"><stop offset=".000" stop-color="#00ffde"/><stop offset=".128" stop-color="#00fdff"/><stop offset=".219" stop-color="#02ddff"/><stop offset=".308" stop-color="#a3bbff"/><stop offset=".355" stop-color="#ffa6fd"/><stop offset=".383" stop-color="#ff7dce"/><stop offset=".421" stop-color="#ff58a4"/><stop offset=".472" stop-color="#ff387f"/><stop offset=".546" stop-color="#ff1b5d"/><stop offset=".660" stop-color="#ff013f"/><stop offset=".844" stop-color="#ff0026"/><stop offset="1.0" stop-color="#ff001a"/></linearGradient><linearGradient id="r59" gradientUnits="userSpaceOnUse" x1="1279" x2="1884" y1="0" y2="0"><stop offset=".000" stop-color="#00ffe4"/><stop offset=".107" stop-color="#00fdff"/><stop offset=".218" stop-color="#01d7ff"/><stop offset=".309" stop-color="#a2b5ff"/><stop offset=".359" stop-color="#ff9ffd"/><stop offset=".387" stop-color="#ff78cf"/><stop offset=".425" stop-color="#ff55a5"/><stop offset=".478" stop-color="#ff357f"/><stop offset=".554" stop-color="#ff185d"/><stop offset=".668" stop-color="#ff0040"/><stop offset=".855" stop-color="#ff0027"/><stop offset="1.0" stop-color="#ff001b"/></linearGradient><linearGradient id="r60" gradientUnits="userSpaceOnUse" x1="1279" x2="1882" y1="0" y2="0"><stop offset=".000" stop-color="#00ffe9"/><stop offset=".088" stop-color="#00fdff"/><stop offset=".219" stop-color="#00d2ff"/><stop offset=".310" stop-color="#9dafff"/><stop offset=".363" stop-color="#ff99fd"/><stop offset=".391" stop-color="#ff74d0"/><stop offset=".430" stop-color="#ff51a6"/><stop offset=".483" stop-color="#ff3280"/><stop offset=".559" stop-color="#ff165f"/><stop offset=".668" stop-color="#ff0042"/><stop offset=".852" stop-color="#ff0028"/><stop offset="1.0" stop-color="#ff001d"/></linearGradient><linearGradient id="r61" gradientUnits="userSpaceOnUse" x1="1280" x2="1880" y1="0" y2="0"><stop offset=".000" stop-color="#00ffef"/><stop offset=".068" stop-color="#00fdff"/><stop offset=".220" stop-color="#02cbff"/><stop offset=".315" stop-color="#a2a8ff"/><stop offset=".367" stop-color="#ff92fd"/><stop offset=".397" stop-color="#ff6dcf"/><stop offset=".437" stop-color="#ff4ca5"/><stop offset=".492" stop-color="#ff2e7f"/><stop offset=".572" stop-color="#ff135d"/><stop offset=".670" stop-color="#ff0044"/><stop offset=".852" stop-color="#ff002a"/><stop offset="1.0" stop-color="#ff001e"/></linearGradient><linearGradient id="r62" gradientUnits="userSpaceOnUse" x1="1281" x2="1878" y1="0" y2="0"><stop offset=".000" stop-color="#00fff5"/><stop offset=".047" stop-color="#00fdff"/><stop offset=".219" stop-color="#01c6ff"/><stop offset=".317" stop-color="#a1a3ff"/><stop offset=".370" stop-color="#ff8dfd"/><stop offset=".400" stop-color="#ff69cf"/><stop offset=".441" stop-color="#ff49a6"/><stop offset=".497" stop-color="#ff2b7f"/><stop offset=".580" stop-color="#ff105d"/><stop offset=".670" stop-color="#ff0046"/><stop offset=".849" stop-color="#ff002c"/><stop offset="1.0" stop-color="#ff001f"/></linearGradient><linearGradient id="r63" gradientUnits="userSpaceOnUse" x1="1282" x2="1876" y1="0" y2="0"><stop offset=".000" stop-color="#00fffa"/><stop offset=".030" stop-color="#00fbff"/><stop offset=".219" stop-color="#00c1ff"/><stop offset=".318" stop-color="#a09dff"/><stop offset=".374" stop-color="#ff87fd"/><stop offset=".404" stop-color="#ff65d0"/><stop offset=".446" stop-color="#ff44a5"/><stop offset=".503" stop-color="#ff2880"/><stop offset=".586" stop-color="#ff0e5e"/><stop offset=".670" stop-color="#ff0048"/><stop offset=".847" stop-color="#ff002e"/><stop offset="1.0" stop-color="#ff0020"/></linearGradient><linearGradient id="r64" gradientUnits="userSpaceOnUse" x1="1282" x2="1874" y1="0" y2="0"><stop offset=".000" stop-color="#00feff"/><stop offset=".221" stop-color="#02bbff"/><stop offset=".324" stop-color="#a497ff"/><stop offset=".378" stop-color="#ff81fd"/><stop offset=".410" stop-color="#ff5fcf"/><stop offset=".453" stop-color="#ff40a5"/><stop offset=".512" stop-color="#ff247f"/><stop offset=".596" stop-color="#ff0c5e"/><stop offset=".669" stop-color="#ff004b"/><stop offset=".841" stop-color="#ff0030"/><stop offset="1.0" stop-color="#ff0022"/></linearGradient><linearGradient id="r65" gradientUnits="userSpaceOnUse" x1="1283" x2="1872" y1="0" y2="0"><stop offset=".000" stop-color="#00f8ff"/><stop offset=".221" stop-color="#01b7ff"/><stop offset=".326" stop-color="#a392ff"/><stop offset=".382" stop-color="#ff7cfd"/><stop offset=".414" stop-color="#ff5bcf"/><stop offset=".458" stop-color="#ff3da5"/><stop offset=".520" stop-color="#ff217f"/><stop offset=".608" stop-color="#ff095d"/><stop offset=".669" stop-color="#ff004d"/><stop offset=".839" stop-color="#ff0032"/><stop offset="1.0" stop-color="#ff0023"/></linearGradient><linearGradient id="r66" gradientUnits="userSpaceOnUse" x1="1284" x2="1870" y1="0" y2="0"><stop offset=".000" stop-color="#00f3ff"/><stop offset=".220" stop-color="#00b2ff"/><stop offset=".328" stop-color="#a28dff"/><stop offset=".386" stop-color="#ff77fd"/><stop offset=".418" stop-color="#ff57d0"/><stop offset=".462" stop-color="#ff3aa6"/><stop offset=".524" stop-color="#ff1f80"/><stop offset=".613" stop-color="#ff085e"/><stop offset=".669" stop-color="#ff004f"/><stop offset=".836" stop-color="#ff0034"/><stop offset="1.0" stop-color="#ff0024"/></linearGradient><linearGradient id="r67" gradientUnits="userSpaceOnUse" x1="1285" x2="1868" y1="0" y2="0"><stop offset=".000" stop-color="#00edff"/><stop offset=".221" stop-color="#02adff"/><stop offset=".331" stop-color="#a388ff"/><stop offset=".389" stop-color="#ff72fd"/><stop offset=".424" stop-color="#ff52cf"/><stop offset=".470" stop-color="#ff35a4"/><stop offset=".533" stop-color="#ff1c7f"/><stop offset=".626" stop-color="#ff055d"/><stop offset=".674" stop-color="#ff0051"/><stop offset=".842" stop-color="#ff0035"/><stop offset="1.0" stop-color="#ff0026"/></linearGradient><linearGradient id="r68" gradientUnits="userSpaceOnUse" x1="1286" x2="1866" y1="0" y2="0"><stop offset=".000" stop-color="#00e8ff"/><stop offset=".221" stop-color="#01a9ff"/><stop offset=".333" stop-color="#a284ff"/><stop offset=".393" stop-color="#ff6dfd"/><stop offset=".428" stop-color="#ff4fd0"/><stop offset=".474" stop-color="#ff33a5"/><stop offset=".538" stop-color="#ff1a80"/><stop offset=".631" stop-color="#ff035e"/><stop offset=".686" stop-color="#ff0050"/><stop offset=".859" stop-color="#ff0034"/><stop offset="1.0" stop-color="#ff0027"/></linearGradient><linearGradient id="r69" gradientUnits="userSpaceOnUse" x1="1286" x2="1864" y1="0" y2="0"><stop offset=".000" stop-color="#00e3ff"/><stop offset=".221" stop-color="#00a5ff"/><stop offset=".336" stop-color="#a17fff"/><stop offset=".398" stop-color="#ff68fd"/><stop offset=".434" stop-color="#ff4ace"/><stop offset=".483" stop-color="#ff2fa4"/><stop offset=".550" stop-color="#ff167e"/><stop offset=".647" stop-color="#ff005c"/><stop offset=".794" stop-color="#ff003f"/><stop offset="1.0" stop-color="#ff0028"/></linearGradient><linearGradient id="r70" gradientUnits="userSpaceOnUse" x1="1287" x2="1862" y1="0" y2="0"><stop offset=".000" stop-color="#00deff"/><stop offset=".223" stop-color="#02a0ff"/><stop offset=".339" stop-color="#a37bff"/><stop offset=".402" stop-color="#ff64fd"/><stop offset=".438" stop-color="#ff47cf"/><stop offset=".487" stop-color="#ff2ca5"/><stop offset=".555" stop-color="#ff147f"/><stop offset=".652" stop-color="#ff005d"/><stop offset=".800" stop-color="#ff0040"/><stop offset="1.0" stop-color="#ff002a"/></linearGradient><linearGradient id="r71" gradientUnits="userSpaceOnUse" x1="1288" x2="1860" y1="0" y2="0"><stop offset=".000" stop-color="#00d9ff"/><stop offset=".222" stop-color="#019cff"/><stop offset=".341" stop-color="#a276ff"/><stop offset=".406" stop-color="#ff60fd"/><stop offset=".442" stop-color="#ff43d0"/><stop offset=".491" stop-color="#ff2aa6"/><stop offset=".559" stop-color="#ff1380"/><stop offset=".654" stop-color="#ff005f"/><stop offset=".801" stop-color="#ff0041"/><stop offset="1.0" stop-color="#ff002b"/></linearGradient><linearGradient id="r72" gradientUnits="userSpaceOnUse" x1="1289" x2="1858" y1="0" y2="0"><stop offset=".000" stop-color="#00d4ff"/><stop offset=".221" stop-color="#0099ff"/><stop offset=".343" stop-color="#a173ff"/><stop offset=".409" stop-color="#ff5bfd"/><stop offset=".448" stop-color="#ff3fce"/><stop offset=".499" stop-color="#ff26a5"/><stop offset=".569" stop-color="#ff107f"/><stop offset=".654" stop-color="#ff0062"/><stop offset=".800" stop-color="#ff0043"/><stop offset="1.0" stop-color="#ff002c"/></linearGradient><linearGradient id="r73" gradientUnits="userSpaceOnUse" x1="1290" x2="1856" y1="0" y2="0"><stop offset=".000" stop-color="#00d0ff"/><stop offset=".223" stop-color="#0294ff"/><stop offset=".348" stop-color="#a46eff"/><stop offset=".413" stop-color="#ff57fe"/><stop offset=".452" stop-color="#ff3ccf"/><stop offset=".504" stop-color="#ff24a5"/><stop offset=".576" stop-color="#ff0e7f"/><stop offset=".654" stop-color="#ff0064"/><stop offset=".797" stop-color="#ff0046"/><stop offset="1.0" stop-color="#ff002e"/></linearGradient><linearGradient id="r74" gradientUnits="userSpaceOnUse" x1="1290" x2="1854" y1="0" y2="0"><stop offset=".000" stop-color="#00ccff"/><stop offset=".223" stop-color="#0191ff"/><stop offset=".351" stop-color="#a36aff"/><stop offset=".418" stop-color="#ff53fe"/><stop offset=".457" stop-color="#ff39d0"/><stop offset=".511" stop-color="#ff21a5"/><stop offset=".583" stop-color="#ff0c7f"/><stop offset=".652" stop-color="#ff0067"/><stop offset=".793" stop-color="#ff0049"/><stop offset="1.0" stop-color="#ff002f"/></linearGradient><linearGradient id="r75" gradientUnits="userSpaceOnUse" x1="1291" x2="1852" y1="0" y2="0"><stop offset=".000" stop-color="#00c7ff"/><stop offset=".223" stop-color="#008dff"/><stop offset=".353" stop-color="#a267ff"/><stop offset=".422" stop-color="#ff4ffe"/><stop offset=".463" stop-color="#ff35cf"/><stop offset=".517" stop-color="#ff1ea5"/><stop offset=".592" stop-color="#ff097f"/><stop offset=".652" stop-color="#ff006a"/><stop offset=".791" stop-color="#ff004b"/><stop offset="1.0" stop-color="#ff0031"/></linearGradient><linearGradient id="r76" gradientUnits="userSpaceOnUse" x1="1292" x2="1851" y1="0" y2="0"><stop offset=".000" stop-color="#00c3ff"/><stop offset=".224" stop-color="#028aff"/><stop offset=".356" stop-color="#a463ff"/><stop offset=".426" stop-color="#ff4cfe"/><stop offset=".467" stop-color="#ff33cf"/><stop offset=".522" stop-color="#ff1ca5"/><stop offset=".599" stop-color="#ff077f"/><stop offset=".651" stop-color="#ff006d"/><stop offset=".787" stop-color="#ff004d"/><stop offset="1.0" stop-color="#ff0032"/></linearGradient><linearGradient id="r77" gradientUnits="userSpaceOnUse" x1="1293" x2="1849" y1="0" y2="0"><stop offset=".000" stop-color="#00bfff"/><stop offset=".223" stop-color="#0186ff"/><stop offset=".358" stop-color="#a35fff"/><stop offset=".430" stop-color="#ff48fe"/><stop offset=".471" stop-color="#ff30d0"/><stop offset=".527" stop-color="#ff1aa6"/><stop offset=".604" stop-color="#ff0680"/><stop offset=".651" stop-color="#ff006f"/><stop offset=".786" stop-color="#ff004f"/><stop offset=".996" stop-color="#ff0034"/><stop offset="1.0" stop-color="#ff0033"/></linearGradient><linearGradient id="r78" gradientUnits="userSpaceOnUse" x1="1294" x2="1847" y1="0" y2="0"><stop offset=".000" stop-color="#00bbff"/><stop offset=".222" stop-color="#0083ff"/><stop offset=".360" stop-color="#a25cff"/><stop offset=".434" stop-color="#ff45fe"/><stop offset=".477" stop-color="#ff2ccf"/><stop offset=".535" stop-color="#ff17a4"/><stop offset=".615" stop-color="#ff037f"/><stop offset=".675" stop-color="#ff006b"/><stop offset=".819" stop-color="#ff004c"/><stop offset="1.0" stop-color="#ff0035"/></linearGradient><linearGradient id="r79" gradientUnits="userSpaceOnUse" x1="1295" x2="1845" y1="0" y2="0"><stop offset=".000" stop-color="#00b7ff"/><stop offset=".224" stop-color="#0280ff"/><stop offset=".364" stop-color="#a358ff"/><stop offset=".438" stop-color="#ff41fe"/><stop offset=".482" stop-color="#ff2acf"/><stop offset=".540" stop-color="#ff15a5"/><stop offset=".622" stop-color="#ff017f"/><stop offset=".738" stop-color="#ff005d"/><stop offset=".916" stop-color="#ff0040"/><stop offset="1.0" stop-color="#ff0036"/></linearGradient><linearGradient id="r80" gradientUnits="userSpaceOnUse" x1="1295" x2="1843" y1="0" y2="0"><stop offset=".000" stop-color="#00b4ff"/><stop offset=".224" stop-color="#017dff"/><stop offset=".367" stop-color="#a255ff"/><stop offset=".443" stop-color="#ff3efe"/><stop offset=".487" stop-color="#ff27d0"/><stop offset=".547" stop-color="#ff12a5"/><stop offset=".630" stop-color="#ff007f"/><stop offset=".748" stop-color="#ff005d"/><stop offset=".929" stop-color="#ff0040"/><stop offset="1.0" stop-color="#ff0038"/></linearGradient><linearGradient id="r81" gradientUnits="userSpaceOnUse" x1="1296" x2="1841" y1="0" y2="0"><stop offset=".000" stop-color="#00b0ff"/><stop offset=".224" stop-color="#007aff"/><stop offset=".369" stop-color="#a152ff"/><stop offset=".448" stop-color="#ff3bfe"/><stop offset=".494" stop-color="#ff24cf"/><stop offset=".554" stop-color="#ff10a5"/><stop offset=".637" stop-color="#ff0080"/><stop offset=".758" stop-color="#ff005e"/><stop offset=".941" stop-color="#ff0040"/><stop offset="1.0" stop-color="#ff0039"/></linearGradient><linearGradient id="r82" gradientUnits="userSpaceOnUse" x1="1297" x2="1839" y1="0" y2="0"><stop offset=".000" stop-color="#00acff"/><stop offset=".225" stop-color="#0277ff"/><stop offset=".373" stop-color="#a24fff"/><stop offset=".452" stop-color="#ff37fe"/><stop offset=".498" stop-color="#ff22cf"/><stop offset=".561" stop-color="#ff0ea5"/><stop offset=".635" stop-color="#ff0083"/><stop offset=".753" stop-color="#ff0061"/><stop offset=".932" stop-color="#ff0043"/><stop offset="1.0" stop-color="#ff003b"/></linearGradient><linearGradient id="r83" gradientUnits="userSpaceOnUse" x1="1298" x2="1837" y1="0" y2="0"><stop offset=".000" stop-color="#00a9ff"/><stop offset=".224" stop-color="#0174ff"/><stop offset=".377" stop-color="#a44cff"/><stop offset=".456" stop-color="#ff34fe"/><stop offset=".503" stop-color="#ff20d0"/><stop offset=".566" stop-color="#ff0ca6"/><stop offset=".635" stop-color="#ff0086"/><stop offset=".751" stop-color="#ff0064"/><stop offset=".928" stop-color="#ff0045"/><stop offset="1.0" stop-color="#ff003d"/></linearGradient><linearGradient id="r84" gradientUnits="userSpaceOnUse" x1="1299" x2="1835" y1="0" y2="0"><stop offset=".000" stop-color="#00a5ff"/><stop offset=".226" stop-color="#0271ff"/><stop offset=".381" stop-color="#a549ff"/><stop offset=".461" stop-color="#ff31fe"/><stop offset=".509" stop-color="#ff1dcf"/><stop offset=".575" stop-color="#ff0aa4"/><stop offset=".632" stop-color="#ff008a"/><stop offset=".748" stop-color="#ff0067"/><stop offset=".920" stop-color="#ff0048"/><stop offset="1.0" stop-color="#ff003e"/></linearGradient><linearGradient id="r85" gradientUnits="userSpaceOnUse" x1="1300" x2="1833" y1="0" y2="0"><stop offset=".000" stop-color="#00a2ff"/><stop offset=".225" stop-color="#026fff"/><stop offset=".383" stop-color="#a446ff"/><stop offset=".465" stop-color="#ff2ffe"/><stop offset=".514" stop-color="#ff1acf"/><stop offset=".580" stop-color="#ff08a5"/><stop offset=".632" stop-color="#ff008d"/><stop offset=".745" stop-color="#ff006a"/><stop offset=".914" stop-color="#ff004a"/><stop offset="1.0" stop-color="#ff0040"/></linearGradient><linearGradient id="r86" gradientUnits="userSpaceOnUse" x1="1301" x2="1831" y1="0" y2="0"><stop offset=".000" stop-color="#009eff"/><stop offset=".225" stop-color="#016cff"/><stop offset=".385" stop-color="#a343ff"/><stop offset=".470" stop-color="#ff2cfe"/><stop offset=".519" stop-color="#ff18d0"/><stop offset=".585" stop-color="#ff06a6"/><stop offset=".632" stop-color="#ff0090"/><stop offset=".743" stop-color="#ff006d"/><stop offset=".909" stop-color="#ff004d"/><stop offset="1.0" stop-color="#ff0041"/></linearGradient><linearGradient id="r87" gradientUnits="userSpaceOnUse" x1="1302" x2="1829" y1="0" y2="0"><stop offset=".000" stop-color="#009bff"/><stop offset=".226" stop-color="#0269ff"/><stop offset=".389" stop-color="#a440ff"/><stop offset=".474" stop-color="#ff29fe"/><stop offset=".526" stop-color="#ff16cf"/><stop offset=".594" stop-color="#ff04a5"/><stop offset=".639" stop-color="#ff0090"/><stop offset=".753" stop-color="#ff006d"/><stop offset=".922" stop-color="#ff004d"/><stop offset="1.0" stop-color="#ff0043"/></linearGradient><linearGradient id="r88" gradientUnits="userSpaceOnUse" x1="1302" x2="1827" y1="0" y2="0"><stop offset=".000" stop-color="#0098ff"/><stop offset=".227" stop-color="#0267ff"/><stop offset=".392" stop-color="#a33eff"/><stop offset=".480" stop-color="#ff26fe"/><stop offset=".531" stop-color="#ff14d0"/><stop offset=".600" stop-color="#ff03a6"/><stop offset=".695" stop-color="#ff0080"/><stop offset=".832" stop-color="#ff005e"/><stop offset="1.0" stop-color="#ff0045"/></linearGradient><linearGradient id="r89" gradientUnits="userSpaceOnUse" x1="1303" x2="1825" y1="0" y2="0"><stop offset=".000" stop-color="#0095ff"/><stop offset=".226" stop-color="#0165ff"/><stop offset=".395" stop-color="#a23cff"/><stop offset=".485" stop-color="#ff24fe"/><stop offset=".536" stop-color="#ff12d0"/><stop offset=".607" stop-color="#ff01a5"/><stop offset=".705" stop-color="#ff007f"/><stop offset=".847" stop-color="#ff005d"/><stop offset="1.0" stop-color="#ff0046"/></linearGradient><linearGradient id="r90" gradientUnits="userSpaceOnUse" x1="1304" x2="1823" y1="0" y2="0"><stop offset=".000" stop-color="#0092ff"/><stop offset=".227" stop-color="#0262ff"/><stop offset=".399" stop-color="#a339ff"/><stop offset=".489" stop-color="#ff21fe"/><stop offset=".543" stop-color="#ff0fcf"/><stop offset=".615" stop-color="#ff00a5"/><stop offset=".715" stop-color="#ff007f"/><stop offset=".859" stop-color="#ff005d"/><stop offset="1.0" stop-color="#ff0048"/></linearGradient><linearGradient id="r91" gradientUnits="userSpaceOnUse" x1="1305" x2="1821" y1="0" y2="0"><stop offset=".000" stop-color="#008fff"/><stop offset=".227" stop-color="#0260ff"/><stop offset=".401" stop-color="#a337ff"/><stop offset=".494" stop-color="#ff1ffe"/><stop offset=".548" stop-color="#ff0dd0"/><stop offset=".616" stop-color="#ff00a8"/><stop offset=".715" stop-color="#ff0081"/><stop offset=".859" stop-color="#ff005f"/><stop offset="1.0" stop-color="#ff004a"/></linearGradient><linearGradient id="r92" gradientUnits="userSpaceOnUse" x1="1306" x2="1819" y1="0" y2="0"><stop offset=".000" stop-color="#008cff"/><stop offset=".226" stop-color="#015eff"/><stop offset=".405" stop-color="#a434ff"/><stop offset=".499" stop-color="#ff1cfe"/><stop offset=".554" stop-color="#ff0bd0"/><stop offset=".616" stop-color="#ff00ab"/><stop offset=".713" stop-color="#ff0085"/><stop offset=".854" stop-color="#ff0062"/><stop offset="1.0" stop-color="#ff004b"/></linearGradient><linearGradient id="r93" gradientUnits="userSpaceOnUse" x1="1307" x2="1817" y1="0" y2="0"><stop offset=".000" stop-color="#008aff"/><stop offset=".227" stop-color="#025bff"/><stop offset=".410" stop-color="#a531ff"/><stop offset=".504" stop-color="#ff1afe"/><stop offset=".561" stop-color="#ff09cf"/><stop offset=".614" stop-color="#ff00b0"/><stop offset=".710" stop-color="#ff0089"/><stop offset=".847" stop-color="#ff0066"/><stop offset="1.0" stop-color="#ff004d"/></linearGradient><linearGradient id="r94" gradientUnits="userSpaceOnUse" x1="1308" x2="1815" y1="0" y2="0"><stop offset=".000" stop-color="#0087ff"/><stop offset=".227" stop-color="#0259ff"/><stop offset=".412" stop-color="#a42fff"/><stop offset=".509" stop-color="#ff17fe"/><stop offset=".566" stop-color="#ff07d0"/><stop offset=".613" stop-color="#ff00b4"/><stop offset=".708" stop-color="#ff008c"/><stop offset=".842" stop-color="#ff0069"/><stop offset="1.0" stop-color="#ff004f"/></linearGradient><linearGradient id="r95" gradientUnits="userSpaceOnUse" x1="1309" x2="1814" y1="0" y2="0"><stop offset=".000" stop-color="#0084ff"/><stop offset=".226" stop-color="#0157ff"/><stop offset=".414" stop-color="#a32dff"/><stop offset=".513" stop-color="#ff15fe"/><stop offset=".570" stop-color="#ff05d0"/><stop offset=".612" stop-color="#ff00b7"/><stop offset=".705" stop-color="#ff0090"/><stop offset=".838" stop-color="#ff006c"/><stop offset="1.0" stop-color="#ff0051"/></linearGradient><linearGradient id="r96" gradientUnits="userSpaceOnUse" x1="1310" x2="1812" y1="0" y2="0"><stop offset=".000" stop-color="#0081ff"/><stop offset=".227" stop-color="#0255ff"/><stop offset=".418" stop-color="#a42bff"/><stop offset=".518" stop-color="#ff13fe"/><stop offset=".578" stop-color="#ff03cf"/><stop offset=".624" stop-color="#ff00b5"/><stop offset=".721" stop-color="#ff008d"/><stop offset=".859" stop-color="#ff006a"/><stop offset="1.0" stop-color="#ff0052"/></linearGradient><linearGradient id="r97" gradientUnits="userSpaceOnUse" x1="1311" x2="1810" y1="0" y2="0"><stop offset=".000" stop-color="#007fff"/><stop offset=".226" stop-color="#0253ff"/><stop offset=".421" stop-color="#a329ff"/><stop offset=".523" stop-color="#ff11fe"/><stop offset=".583" stop-color="#ff02d0"/><stop offset=".663" stop-color="#ff00a6"/><stop offset=".776" stop-color="#ff007f"/><stop offset=".938" stop-color="#ff005d"/><stop offset="1.0" stop-color="#ff0054"/></linearGradient><linearGradient id="r98" gradientUnits="userSpaceOnUse" x1="1312" x2="1808" y1="0" y2="0"><stop offset=".000" stop-color="#007cff"/><stop offset=".226" stop-color="#0151ff"/><stop offset=".423" stop-color="#a327ff"/><stop offset=".528" stop-color="#ff0ffe"/><stop offset=".589" stop-color="#ff00d0"/><stop offset=".671" stop-color="#ff00a6"/><stop offset=".786" stop-color="#ff007f"/><stop offset=".952" stop-color="#ff005d"/><stop offset="1.0" stop-color="#ff0056"/></linearGradient><linearGradient id="r99" gradientUnits="userSpaceOnUse" x1="1313" x2="1806" y1="0" y2="0"><stop offset=".000" stop-color="#007aff"/><stop offset=".227" stop-color="#024fff"/><stop offset=".428" stop-color="#a425ff"/><stop offset=".533" stop-color="#ff0dfe"/><stop offset=".596" stop-color="#ff00cf"/><stop offset=".680" stop-color="#ff00a5"/><stop offset=".795" stop-color="#ff007f"/><stop offset=".963" stop-color="#ff005d"/><stop offset="1.0" stop-color="#ff0058"/></linearGradient><linearGradient id="r100" gradientUnits="userSpaceOnUse" x1="1314" x2="1804" y1="0" y2="0"><stop offset=".000" stop-color="#0077ff"/><stop offset=".227" stop-color="#024dff"/><stop offset=".431" stop-color="#a323ff"/><stop offset=".539" stop-color="#ff0bfe"/><stop offset=".596" stop-color="#ff00d4"/><stop offset=".680" stop-color="#ff00a9"/><stop offset=".794" stop-color="#ff0082"/><stop offset=".959" stop-color="#ff0060"/><stop offset="1.0" stop-color="#ff005a"/></linearGradient><linearGradient id="r101" gradientUnits="userSpaceOnUse" x1="1315" x2="1802" y1="0" y2="0"><stop offset=".000" stop-color="#0075ff"/><stop offset=".226" stop-color="#014cff"/><stop offset=".433" stop-color="#a221ff"/><stop offset=".544" stop-color="#ff09fe"/><stop offset=".593" stop-color="#ff00d9"/><stop offset=".676" stop-color="#ff00ae"/><stop offset=".789" stop-color="#ff0086"/><stop offset=".949" stop-color="#ff0064"/><stop offset="1.0" stop-color="#ff005c"/></linearGradient><linearGradient id="r102" gradientUnits="userSpaceOnUse" x1="1316" x2="1800" y1="0" y2="0"><stop offset=".000" stop-color="#0073ff"/><stop offset=".227" stop-color="#024aff"/><stop offset=".440" stop-color="#a51fff"/><stop offset=".550" stop-color="#ff07fe"/><stop offset=".593" stop-color="#ff00de"/><stop offset=".674" stop-color="#ff00b2"/><stop offset=".783" stop-color="#ff008b"/><stop offset=".940" stop-color="#ff0067"/><stop offset="1.0" stop-color="#ff005e"/></linearGradient><linearGradient id="r103" gradientUnits="userSpaceOnUse" x1="1317" x2="1798" y1="0" y2="0"><stop offset=".000" stop-color="#0070ff"/><stop offset=".227" stop-color="#0248ff"/><stop offset=".443" stop-color="#a41dff"/><stop offset=".555" stop-color="#ff05fe"/><stop offset=".595" stop-color="#ff00e1"/><stop offset=".676" stop-color="#ff00b4"/><stop offset=".786" stop-color="#ff008d"/><stop offset=".942" stop-color="#ff0069"/><stop offset="1.0" stop-color="#ff0060"/></linearGradient><linearGradient id="r104" gradientUnits="userSpaceOnUse" x1="1318" x2="1796" y1="0" y2="0"><stop offset=".000" stop-color="#006eff"/><stop offset=".226" stop-color="#0146ff"/><stop offset=".446" stop-color="#a31bff"/><stop offset=".561" stop-color="#ff03fe"/><stop offset=".617" stop-color="#ff00d6"/><stop offset=".705" stop-color="#ff00ab"/><stop offset=".826" stop-color="#ff0084"/><stop offset="1.0" stop-color="#ff0062"/></linearGradient><linearGradient id="r105" gradientUnits="userSpaceOnUse" x1="1319" x2="1794" y1="0" y2="0"><stop offset=".000" stop-color="#006cff"/><stop offset=".227" stop-color="#0244ff"/><stop offset=".451" stop-color="#a419ff"/><stop offset=".566" stop-color="#ff01fe"/><stop offset=".636" stop-color="#ff00cf"/><stop offset=".728" stop-color="#ff00a5"/><stop offset=".857" stop-color="#ff007f"/><stop offset="1.0" stop-color="#ff0064"/></linearGradient><linearGradient id="r106" gradientUnits="userSpaceOnUse" x1="1320" x2="1792" y1="0" y2="0"><stop offset=".000" stop-color="#006aff"/><stop offset=".227" stop-color="#0243ff"/><stop offset=".453" stop-color="#a418ff"/><stop offset=".572" stop-color="#ff00fe"/><stop offset=".642" stop-color="#ff00d0"/><stop offset=".737" stop-color="#ff00a5"/><stop offset=".869" stop-color="#ff007f"/><stop offset="1.0" stop-color="#ff0066"/></linearGradient><linearGradient id="r107" gradientUnits="userSpaceOnUse" x1="1321" x2="1790" y1="0" y2="0"><stop offset=".000" stop-color="#0067ff"/><stop offset=".226" stop-color="#0141ff"/><stop offset=".456" stop-color="#a316ff"/><stop offset=".578" stop-color="#ff00fe"/><stop offset=".650" stop-color="#ff00cf"/><stop offset=".746" stop-color="#ff00a5"/><stop offset=".881" stop-color="#ff007f"/><stop offset="1.0" stop-color="#ff0068"/></linearGradient><linearGradient id="r108" gradientUnits="userSpaceOnUse" x1="1322" x2="1788" y1="0" y2="0"><stop offset=".000" stop-color="#0065ff"/><stop offset=".227" stop-color="#0240ff"/><stop offset=".461" stop-color="#a414ff"/><stop offset=".575" stop-color="#f900ff"/><stop offset=".588" stop-color="#ff00fb"/><stop offset=".663" stop-color="#ff00cc"/><stop offset=".764" stop-color="#ff00a2"/><stop offset=".903" stop-color="#ff007c"/><stop offset="1.0" stop-color="#ff006a"/></linearGradient><linearGradient id="r109" gradientUnits="userSpaceOnUse" x1="1323" x2="1786" y1="0" y2="0"><stop offset=".000" stop-color="#0063ff"/><stop offset=".227" stop-color="#023eff"/><stop offset=".464" stop-color="#a313ff"/><stop offset=".572" stop-color="#f300ff"/><stop offset=".592" stop-color="#ff00fd"/><stop offset=".667" stop-color="#ff00ce"/><stop offset=".769" stop-color="#ff00a3"/><stop offset=".909" stop-color="#ff007d"/><stop offset="1.0" stop-color="#ff006c"/></linearGradient><linearGradient id="r110" gradientUnits="userSpaceOnUse" x1="1324" x2="1784" y1="0" y2="0"><stop offset=".000" stop-color="#0061ff"/><stop offset=".226" stop-color="#013dff"/><stop offset=".467" stop-color="#a311ff"/><stop offset=".570" stop-color="#ec00ff"/><stop offset=".598" stop-color="#ff00fd"/><stop offset=".674" stop-color="#ff00ce"/><stop offset=".776" stop-color="#ff00a4"/><stop offset=".917" stop-color="#ff007e"/><stop offset="1.0" stop-color="#ff006e"/></linearGradient><linearGradient id="r111" gradientUnits="userSpaceOnUse" x1="1325" x2="1782" y1="0" y2="0"><stop offset=".000" stop-color="#005fff"/><stop offset=".228" stop-color="#023bff"/><stop offset=".473" stop-color="#a310ff"/><stop offset=".569" stop-color="#e800ff"/><stop offset=".604" stop-color="#ff00fd"/><stop offset=".681" stop-color="#ff00cf"/><stop offset=".783" stop-color="#ff00a4"/><stop offset=".928" stop-color="#ff007e"/><stop offset="1.0" stop-color="#ff0070"/></linearGradient><linearGradient id="r112" gradientUnits="userSpaceOnUse" x1="1326" x2="1780" y1="0" y2="0"><stop offset=".000" stop-color="#005dff"/><stop offset=".227" stop-color="#023aff"/><stop offset=".478" stop-color="#a40eff"/><stop offset=".566" stop-color="#e200ff"/><stop offset=".610" stop-color="#ff00fd"/><stop offset=".689" stop-color="#ff00ce"/><stop offset=".795" stop-color="#ff00a4"/><stop offset=".943" stop-color="#ff007d"/><stop offset="1.0" stop-color="#ff0073"/></linearGradient><linearGradient id="r113" gradientUnits="userSpaceOnUse" x1="1327" x2="1778" y1="0" y2="0"><stop offset=".000" stop-color="#005bff"/><stop offset=".226" stop-color="#0138ff"/><stop offset=".481" stop-color="#a40dff"/><stop offset=".563" stop-color="#dc00ff"/><stop offset=".616" stop-color="#ff00fd"/><stop offset=".696" stop-color="#ff00ce"/><stop offset=".803" stop-color="#ff00a4"/><stop offset=".951" stop-color="#ff007e"/><stop offset="1.0" stop-color="#ff0075"/></linearGradient><linearGradient id="r114" gradientUnits="userSpaceOnUse" x1="1329" x2="1777" y1="0" y2="0"><stop offset=".000" stop-color="#0059ff"/><stop offset=".225" stop-color="#0237ff"/><stop offset=".484" stop-color="#a40bff"/><stop offset=".558" stop-color="#d600ff"/><stop offset=".621" stop-color="#ff00fd"/><stop offset=".701" stop-color="#ff00cf"/><stop offset=".810" stop-color="#ff00a4"/><stop offset=".962" stop-color="#ff007e"/><stop offset="1.0" stop-color="#ff0077"/></linearGradient><linearGradient id="r115" gradientUnits="userSpaceOnUse" x1="1330" x2="1775" y1="0" y2="0"><stop offset=".000" stop-color="#0057ff"/><stop offset=".225" stop-color="#0235ff"/><stop offset=".488" stop-color="#a40aff"/><stop offset=".557" stop-color="#d200ff"/><stop offset=".627" stop-color="#ff00fd"/><stop offset=".710" stop-color="#ff00ce"/><stop offset=".820" stop-color="#ff00a4"/><stop offset=".973" stop-color="#ff007e"/><stop offset="1.0" stop-color="#ff0079"/></linearGradient><linearGradient id="r116" gradientUnits="userSpaceOnUse" x1="1331" x2="1773" y1="0" y2="0"><stop offset=".000" stop-color="#0056ff"/><stop offset=".224" stop-color="#0134ff"/><stop offset=".491" stop-color="#a308ff"/><stop offset=".554" stop-color="#cc00ff"/><stop offset=".633" stop-color="#ff00fd"/><stop offset=".717" stop-color="#ff00ce"/><stop offset=".830" stop-color="#ff00a4"/><stop offset=".986" stop-color="#ff007e"/><stop offset="1.0" stop-color="#ff007b"/></linearGradient><linearGradient id="r117" gradientUnits="userSpaceOnUse" x1="1332" x2="1771" y1="0" y2="0"><stop offset=".000" stop-color="#0054ff"/><stop offset=".226" stop-color="#0233ff"/><stop offset=".497" stop-color="#a407ff"/><stop offset=".554" stop-color="#c800ff"/><stop offset=".640" stop-color="#ff00fd"/><stop offset=".724" stop-color="#ff00cf"/><stop offset=".838" stop-color="#ff00a4"/><stop offset=".995" stop-color="#ff007e"/><stop offset="1.0" stop-color="#ff007e"/></linearGradient><linearGradient id="r118" gradientUnits="userSpaceOnUse" x1="1333" x2="1769" y1="0" y2="0"><stop offset=".000" stop-color="#0052ff"/><stop offset=".225" stop-color="#0231ff"/><stop offset=".500" stop-color="#a305ff"/><stop offset=".553" stop-color="#c400ff"/><stop offset=".647" stop-color="#ff00fd"/><stop offset=".734" stop-color="#ff00ce"/><stop offset=".851" stop-color="#ff00a4"/><stop offset="1.0" stop-color="#ff0080"/></linearGradient><linearGradient id="r119" gradientUnits="userSpaceOnUse" x1="1334" x2="1767" y1="0" y2="0"><stop offset=".000" stop-color="#0050ff"/><stop offset=".224" stop-color="#0130ff"/><stop offset=".503" stop-color="#a304ff"/><stop offset=".557" stop-color="#c400ff"/><stop offset=".654" stop-color="#ff00fd"/><stop offset=".741" stop-color="#ff00ce"/><stop offset=".859" stop-color="#ff00a4"/><stop offset="1.0" stop-color="#ff0082"/></linearGradient><linearGradient id="r120" gradientUnits="userSpaceOnUse" x1="1335" x2="1765" y1="0" y2="0"><stop offset=".000" stop-color="#004fff"/><stop offset=".226" stop-color="#022fff"/><stop offset=".509" stop-color="#a403ff"/><stop offset=".602" stop-color="#dc00ff"/><stop offset=".660" stop-color="#ff00fd"/><stop offset=".749" stop-color="#ff00cf"/><stop offset=".867" stop-color="#ff00a5"/><stop offset="1.0" stop-color="#ff0085"/></linearGradient><linearGradient id="r121" gradientUnits="userSpaceOnUse" x1="1336" x2="1763" y1="0" y2="0"><stop offset=".000" stop-color="#004dff"/><stop offset=".225" stop-color="#022eff"/><stop offset=".513" stop-color="#a302ff"/><stop offset=".667" stop-color="#ff00fd"/><stop offset=".759" stop-color="#ff00ce"/><stop offset=".881" stop-color="#ff00a4"/><stop offset="1.0" stop-color="#ff0087"/></linearGradient><linearGradient id="r122" gradientUnits="userSpaceOnUse" x1="1338" x2="1761" y1="0" y2="0"><stop offset=".000" stop-color="#004bff"/><stop offset=".222" stop-color="#012dff"/><stop offset=".518" stop-color="#a400ff"/><stop offset=".674" stop-color="#ff00fd"/><stop offset=".766" stop-color="#ff00ce"/><stop offset=".889" stop-color="#ff00a4"/><stop offset="1.0" stop-color="#ff008a"/></linearGradient><linearGradient id="r123" gradientUnits="userSpaceOnUse" x1="1339" x2="1759" y1="0" y2="0"><stop offset=".000" stop-color="#0049ff"/><stop offset=".224" stop-color="#022bff"/><stop offset=".524" stop-color="#a500ff"/><stop offset=".681" stop-color="#ff00fd"/><stop offset=".774" stop-color="#ff00cf"/><stop offset=".900" stop-color="#ff00a4"/><stop offset="1.0" stop-color="#ff008c"/></linearGradient><linearGradient id="r124" gradientUnits="userSpaceOnUse" x1="1340" x2="1757" y1="0" y2="0"><stop offset=".000" stop-color="#0048ff"/><stop offset=".223" stop-color="#022aff"/><stop offset=".528" stop-color="#a400ff"/><stop offset=".688" stop-color="#ff00fd"/><stop offset=".784" stop-color="#ff00ce"/><stop offset=".914" stop-color="#ff00a4"/><stop offset="1.0" stop-color="#ff008f"/></linearGradient><linearGradient id="r125" gradientUnits="userSpaceOnUse" x1="1341" x2="1755" y1="0" y2="0"><stop offset=".000" stop-color="#0046ff"/><stop offset=".222" stop-color="#0129ff"/><stop offset=".524" stop-color="#9f00ff"/><stop offset=".696" stop-color="#ff00fd"/><stop offset=".792" stop-color="#ff00cf"/><stop offset=".923" stop-color="#ff00a4"/><stop offset="1.0" stop-color="#ff0092"/></linearGradient><linearGradient id="r126" gradientUnits="userSpaceOnUse" x1="1342" x2="1753" y1="0" y2="0"><stop offset=".000" stop-color="#0045ff"/><stop offset=".224" stop-color="#0228ff"/><stop offset=".521" stop-color="#9b00ff"/><stop offset=".703" stop-color="#ff00fd"/><stop offset=".800" stop-color="#ff00cf"/><stop offset=".932" stop-color="#ff00a5"/><stop offset="1.0" stop-color="#ff0094"/></linearGradient><linearGradient id="r127" gradientUnits="userSpaceOnUse" x1="1343" x2="1751" y1="0" y2="0"><stop offset=".000" stop-color="#0043ff"/><stop offset=".223" stop-color="#0227ff"/><stop offset=".517" stop-color="#9600ff"/><stop offset=".711" stop-color="#ff00fd"/><stop offset=".811" stop-color="#ff00ce"/><stop offset=".946" stop-color="#ff00a4"/><stop offset="1.0" stop-color="#ff0097"/></linearGradient><linearGradient id="r128" gradientUnits="userSpaceOnUse" x1="1345" x2="1749" y1="0" y2="0"><stop offset=".000" stop-color="#0041ff"/><stop offset=".220" stop-color="#0126ff"/><stop offset=".512" stop-color="#9200ff"/><stop offset=".718" stop-color="#ff00fd"/><stop offset=".819" stop-color="#ff00cf"/><stop offset=".955" stop-color="#ff00a4"/><stop offset="1.0" stop-color="#ff009a"/></linearGradient><linearGradient id="r129" gradientUnits="userSpaceOnUse" x1="1346" x2="1747" y1="0" y2="0"><stop offset=".000" stop-color="#0040ff"/><stop offset=".222" stop-color="#0224ff"/><stop offset=".509" stop-color="#8e00ff"/><stop offset=".726" stop-color="#ff00fd"/><stop offset=".828" stop-color="#ff00cf"/><stop offset=".968" stop-color="#ff00a4"/><stop offset="1.0" stop-color="#ff009d"/></linearGradient><linearGradient id="r130" gradientUnits="userSpaceOnUse" x1="1347" x2="1745" y1="0" y2="0"><stop offset=".000" stop-color="#003eff"/><stop offset=".221" stop-color="#0223ff"/><stop offset=".505" stop-color="#8a00ff"/><stop offset=".734" stop-color="#ff00fd"/><stop offset=".839" stop-color="#ff00ce"/><stop offset=".980" stop-color="#ff00a4"/><stop offset="1.0" stop-color="#ff009f"/></linearGradient><linearGradient id="r131" gradientUnits="userSpaceOnUse" x1="1348" x2="1743" y1="0" y2="0"><stop offset=".000" stop-color="#003dff"/><stop offset=".220" stop-color="#0122ff"/><stop offset=".501" stop-color="#8600ff"/><stop offset=".742" stop-color="#ff00fd"/><stop offset=".848" stop-color="#ff00cf"/><stop offset=".992" stop-color="#ff00a4"/><stop offset="1.0" stop-color="#ff00a2"/></linearGradient><linearGradient id="r132" gradientUnits="userSpaceOnUse" x1="1349" x2="1741" y1="0" y2="0"><stop offset=".000" stop-color="#003cff"/><stop offset=".222" stop-color="#0221ff"/><stop offset=".500" stop-color="#8300ff"/><stop offset=".750" stop-color="#ff00fd"/><stop offset=".857" stop-color="#ff00cf"/><stop offset="1.0" stop-color="#ff00a5"/></linearGradient><linearGradient id="r133" gradientUnits="userSpaceOnUse" x1="1350" x2="1740" y1="0" y2="0"><stop offset=".000" stop-color="#003aff"/><stop offset=".221" stop-color="#0220ff"/><stop offset=".495" stop-color="#7f00ff"/><stop offset=".756" stop-color="#ff00fd"/><stop offset=".867" stop-color="#ff00ce"/><stop offset="1.0" stop-color="#ff00a7"/></linearGradient><linearGradient id="r134" gradientUnits="userSpaceOnUse" x1="1352" x2="1738" y1="0" y2="0"><stop offset=".000" stop-color="#0039ff"/><stop offset=".218" stop-color="#011fff"/><stop offset=".490" stop-color="#7b00ff"/><stop offset=".764" stop-color="#ff00fd"/><stop offset=".876" stop-color="#ff00cf"/><stop offset="1.0" stop-color="#ff00aa"/></linearGradient><linearGradient id="r135" gradientUnits="userSpaceOnUse" x1="1353" x2="1736" y1="0" y2="0"><stop offset=".000" stop-color="#0037ff"/><stop offset=".219" stop-color="#021eff"/><stop offset=".486" stop-color="#7700ff"/><stop offset=".773" stop-color="#ff00fd"/><stop offset=".888" stop-color="#ff00ce"/><stop offset="1.0" stop-color="#ff00ae"/></linearGradient><linearGradient id="r136" gradientUnits="userSpaceOnUse" x1="1354" x2="1734" y1="0" y2="0"><stop offset=".000" stop-color="#0036ff"/><stop offset=".218" stop-color="#021dff"/><stop offset=".482" stop-color="#7400ff"/><stop offset=".782" stop-color="#ff00fd"/><stop offset=".897" stop-color="#ff00ce"/><stop offset="1.0" stop-color="#ff00b1"/></linearGradient><linearGradient id="r137" gradientUnits="userSpaceOnUse" x1="1355" x2="1732" y1="0" y2="0"><stop offset=".000" stop-color="#0035ff"/><stop offset=".220" stop-color="#021cff"/><stop offset=".477" stop-color="#7000ff"/><stop offset=".790" stop-color="#ff00fd"/><stop offset=".907" stop-color="#ff00cf"/><stop offset="1.0" stop-color="#ff00b4"/></linearGradient><linearGradient id="r138" gradientUnits="userSpaceOnUse" x1="1356" x2="1730" y1="0" y2="0"><stop offset=".000" stop-color="#0033ff"/><stop offset=".219" stop-color="#021bff"/><stop offset=".473" stop-color="#6c00ff"/><stop offset=".799" stop-color="#ff00fd"/><stop offset=".920" stop-color="#ff00ce"/><stop offset="1.0" stop-color="#ff00b7"/></linearGradient><linearGradient id="r139" gradientUnits="userSpaceOnUse" x1="1358" x2="1728" y1="0" y2="0"><stop offset=".000" stop-color="#0032ff"/><stop offset=".216" stop-color="#021bff"/><stop offset=".468" stop-color="#6900ff"/><stop offset=".808" stop-color="#ff00fd"/><stop offset=".930" stop-color="#ff00cf"/><stop offset="1.0" stop-color="#ff00ba"/></linearGradient><linearGradient id="r140" gradientUnits="userSpaceOnUse" x1="1359" x2="1726" y1="0" y2="0"><stop offset=".000" stop-color="#0031ff"/><stop offset=".218" stop-color="#0219ff"/><stop offset=".463" stop-color="#6500ff"/><stop offset=".817" stop-color="#ff00fd"/><stop offset=".940" stop-color="#ff00cf"/><stop offset="1.0" stop-color="#ff00bd"/></linearGradient><linearGradient id="r141" gradientUnits="userSpaceOnUse" x1="1360" x2="1724" y1="0" y2="0"><stop offset=".000" stop-color="#002fff"/><stop offset=".217" stop-color="#0219ff"/><stop offset=".462" stop-color="#6300ff"/><stop offset=".827" stop-color="#ff00fd"/><stop offset=".953" stop-color="#ff00ce"/><stop offset="1.0" stop-color="#ff00c1"/></linearGradient><linearGradient id="r142" gradientUnits="userSpaceOnUse" x1="1361" x2="1722" y1="0" y2="0"><stop offset=".000" stop-color="#002eff"/><stop offset=".216" stop-color="#0218ff"/><stop offset=".457" stop-color="#6000ff"/><stop offset=".837" stop-color="#ff00fd"/><stop offset=".964" stop-color="#ff00cf"/><stop offset="1.0" stop-color="#ff00c4"/></linearGradient><linearGradient id="r143" gradientUnits="userSpaceOnUse" x1="1363" x2="1720" y1="0" y2="0"><stop offset=".000" stop-color="#002dff"/><stop offset=".216" stop-color="#0217ff"/><stop offset=".451" stop-color="#5c00ff"/><stop offset=".846" stop-color="#ff00fd"/><stop offset=".975" stop-color="#ff00cf"/><stop offset="1.0" stop-color="#ff00c8"/></linearGradient><linearGradient id="r144" gradientUnits="userSpaceOnUse" x1="1364" x2="1718" y1="0" y2="0"><stop offset=".000" stop-color="#002cff"/><stop offset=".215" stop-color="#0216ff"/><stop offset=".446" stop-color="#5900ff"/><stop offset=".856" stop-color="#ff00fd"/><stop offset=".989" stop-color="#ff00ce"/><stop offset="1.0" stop-color="#ff00cb"/></linearGradient><linearGradient id="r145" gradientUnits="userSpaceOnUse" x1="1365" x2="1716" y1="0" y2="0"><stop offset=".000" stop-color="#002aff"/><stop offset=".214" stop-color="#0215ff"/><stop offset=".442" stop-color="#5600ff"/><stop offset=".852" stop-color="#fb00ff"/><stop offset=".875" stop-color="#ff00fa"/><stop offset="1.0" stop-color="#ff00cf"/></linearGradient><linearGradient id="r146" gradientUnits="userSpaceOnUse" x1="1366" x2="1714" y1="0" y2="0"><stop offset=".000" stop-color="#0029ff"/><stop offset=".216" stop-color="#0214ff"/><stop offset=".437" stop-color="#5300ff"/><stop offset=".853" stop-color="#f700ff"/><stop offset=".879" stop-color="#ff00fc"/><stop offset="1.0" stop-color="#ff00d2"/></linearGradient><linearGradient id="r147" gradientUnits="userSpaceOnUse" x1="1368" x2="1712" y1="0" y2="0"><stop offset=".000" stop-color="#0028ff"/><stop offset=".212" stop-color="#0214ff"/><stop offset=".430" stop-color="#5000ff"/><stop offset=".855" stop-color="#f400ff"/><stop offset=".890" stop-color="#ff00fc"/><stop offset="1.0" stop-color="#ff00d6"/></linearGradient><linearGradient id="r148" gradientUnits="userSpaceOnUse" x1="1369" x2="1710" y1="0" y2="0"><stop offset=".000" stop-color="#0027ff"/><stop offset=".211" stop-color="#0213ff"/><stop offset=".428" stop-color="#4e00ff"/><stop offset=".862" stop-color="#f200ff"/><stop offset=".900" stop-color="#ff00fc"/><stop offset="1.0" stop-color="#ff00da"/></linearGradient><linearGradient id="r149" gradientUnits="userSpaceOnUse" x1="1370" x2="1708" y1="0" y2="0"><stop offset=".000" stop-color="#0026ff"/><stop offset=".213" stop-color="#0212ff"/><stop offset=".423" stop-color="#4b00ff"/><stop offset=".864" stop-color="#ef00ff"/><stop offset=".908" stop-color="#ff00fd"/><stop offset="1.0" stop-color="#ff00de"/></linearGradient><linearGradient id="r150" gradientUnits="userSpaceOnUse" x1="1371" x2="1706" y1="0" y2="0"><stop offset=".000" stop-color="#0025ff"/><stop offset=".212" stop-color="#0211ff"/><stop offset=".418" stop-color="#4800ff"/><stop offset=".866" stop-color="#ec00ff"/><stop offset=".919" stop-color="#ff00fd"/><stop offset="1.0" stop-color="#ff00e1"/></linearGradient><linearGradient id="r151" gradientUnits="userSpaceOnUse" x1="1373" x2="1705" y1="0" y2="0"><stop offset=".000" stop-color="#0023ff"/><stop offset=".208" stop-color="#0211ff"/><stop offset=".410" stop-color="#4500ff"/><stop offset=".928" stop-color="#ff00fd"/><stop offset="1.0" stop-color="#ff00e4"/></linearGradient><linearGradient id="r152" gradientUnits="userSpaceOnUse" x1="1374" x2="1703" y1="0" y2="0"><stop offset=".000" stop-color="#0022ff"/><stop offset=".210" stop-color="#0210ff"/><stop offset=".404" stop-color="#4200ff"/><stop offset=".869" stop-color="#e600ff"/><stop offset=".939" stop-color="#ff00fd"/><stop offset="1.0" stop-color="#ff00e8"/></linearGradient><linearGradient id="r153" gradientUnits="userSpaceOnUse" x1="1375" x2="1701" y1="0" y2="0"><stop offset=".000" stop-color="#0021ff"/><stop offset=".209" stop-color="#020fff"/><stop offset=".402" stop-color="#4000ff"/><stop offset=".874" stop-color="#e400ff"/><stop offset=".951" stop-color="#ff00fd"/><stop offset="1.0" stop-color="#ff00ed"/></linearGradient><linearGradient id="r154" gradientUnits="userSpaceOnUse" x1="1376" x2="1699" y1="0" y2="0"><stop offset=".000" stop-color="#0020ff"/><stop offset=".207" stop-color="#020eff"/><stop offset=".396" stop-color="#3d00ff"/><stop offset=".876" stop-color="#e100ff"/><stop offset=".963" stop-color="#ff00fd"/><stop offset="1.0" stop-color="#ff00f1"/></linearGradient><linearGradient id="r155" gradientUnits="userSpaceOnUse" x1="1378" x2="1697" y1="0" y2="0"><stop offset=".000" stop-color="#001fff"/><stop offset=".207" stop-color="#020dff"/><stop offset=".389" stop-color="#3b00ff"/><stop offset=".878" stop-color="#de00ff"/><stop offset=".975" stop-color="#ff00fe"/><stop offset="1.0" stop-color="#ff00f5"/></linearGradient><linearGradient id="r156" gradientUnits="userSpaceOnUse" x1="1379" x2="1695" y1="0" y2="0"><stop offset=".000" stop-color="#001eff"/><stop offset=".206" stop-color="#020dff"/><stop offset=".383" stop-color="#3800ff"/><stop offset=".883" stop-color="#dc00ff"/><stop offset=".987" stop-color="#ff00fe"/><stop offset="1.0" stop-color="#ff00f9"/></linearGradient><linearGradient id="r157" gradientUnits="userSpaceOnUse" x1="1380" x2="1693" y1="0" y2="0"><stop offset=".000" stop-color="#001dff"/><stop offset=".204" stop-color="#020cff"/><stop offset=".377" stop-color="#3500ff"/><stop offset=".885" stop-color="#d900ff"/><stop offset="1.0" stop-color="#ff00fe"/></linearGradient><linearGradient id="r158" gradientUnits="userSpaceOnUse" x1="1382" x2="1691" y1="0" y2="0"><stop offset=".000" stop-color="#001cff"/><stop offset=".204" stop-color="#020bff"/><stop offset=".372" stop-color="#3400ff"/><stop offset=".890" stop-color="#d700ff"/><stop offset="1.0" stop-color="#fc00ff"/></linearGradient><linearGradient id="r159" gradientUnits="userSpaceOnUse" x1="1383" x2="1689" y1="0" y2="0"><stop offset=".000" stop-color="#001bff"/><stop offset=".203" stop-color="#020bff"/><stop offset=".366" stop-color="#3100ff"/><stop offset=".895" stop-color="#d500ff"/><stop offset="1.0" stop-color="#f800ff"/></linearGradient><linearGradient id="r160" gradientUnits="userSpaceOnUse" x1="1384" x2="1687" y1="0" y2="0"><stop offset=".000" stop-color="#001aff"/><stop offset=".201" stop-color="#020aff"/><stop offset=".360" stop-color="#2f00ff"/><stop offset=".898" stop-color="#d200ff"/><stop offset="1.0" stop-color="#f300ff"/></linearGradient><linearGradient id="r161" gradientUnits="userSpaceOnUse" x1="1386" x2="1685" y1="0" y2="0"><stop offset=".000" stop-color="#0019ff"/><stop offset=".201" stop-color="#0209ff"/><stop offset=".351" stop-color="#2c00ff"/><stop offset=".900" stop-color="#cf00ff"/><stop offset="1.0" stop-color="#ef00ff"/></linearGradient><linearGradient id="r162" gradientUnits="userSpaceOnUse" x1="1387" x2="1683" y1="0" y2="0"><stop offset=".000" stop-color="#0018ff"/><stop offset=".199" stop-color="#0209ff"/><stop offset=".348" stop-color="#2a00ff"/><stop offset=".905" stop-color="#ce00ff"/><stop offset="1.0" stop-color="#eb00ff"/></linearGradient><linearGradient id="r163" gradientUnits="userSpaceOnUse" x1="1388" x2="1681" y1="0" y2="0"><stop offset=".000" stop-color="#0017ff"/><stop offset=".198" stop-color="#0208ff"/><stop offset=".341" stop-color="#2800ff"/><stop offset=".911" stop-color="#cc00ff"/><stop offset="1.0" stop-color="#e700ff"/></linearGradient><linearGradient id="r164" gradientUnits="userSpaceOnUse" x1="1390" x2="1679" y1="0" y2="0"><stop offset=".000" stop-color="#0016ff"/><stop offset=".197" stop-color="#0207ff"/><stop offset=".336" stop-color="#2700ff"/><stop offset=".917" stop-color="#ca00ff"/><stop offset="1.0" stop-color="#e300ff"/></linearGradient><linearGradient id="r165" gradientUnits="userSpaceOnUse" x1="1391" x2="1677" y1="0" y2="0"><stop offset=".000" stop-color="#0015ff"/><stop offset=".196" stop-color="#0207ff"/><stop offset=".332" stop-color="#2500ff"/><stop offset=".923" stop-color="#c800ff"/><stop offset="1.0" stop-color="#df00ff"/></linearGradient><linearGradient id="r166" gradientUnits="userSpaceOnUse" x1="1392" x2="1675" y1="0" y2="0"><stop offset=".000" stop-color="#0014ff"/><stop offset=".194" stop-color="#0206ff"/><stop offset=".325" stop-color="#2300ff"/><stop offset=".926" stop-color="#c600ff"/><stop offset="1.0" stop-color="#db00ff"/></linearGradient><linearGradient id="r167" gradientUnits="userSpaceOnUse" x1="1394" x2="1673" y1="0" y2="0"><stop offset=".000" stop-color="#0013ff"/><stop offset=".194" stop-color="#0205ff"/><stop offset=".323" stop-color="#2200ff"/><stop offset=".935" stop-color="#c500ff"/><stop offset="1.0" stop-color="#d700ff"/></linearGradient><linearGradient id="r168" gradientUnits="userSpaceOnUse" x1="1395" x2="1671" y1="0" y2="0"><stop offset=".000" stop-color="#0012ff"/><stop offset=".192" stop-color="#0205ff"/><stop offset=".319" stop-color="#2100ff"/><stop offset=".946" stop-color="#c400ff"/><stop offset="1.0" stop-color="#d300ff"/></linearGradient><linearGradient id="r169" gradientUnits="userSpaceOnUse" x1="1396" x2="1669" y1="0" y2="0"><stop offset=".000" stop-color="#0011ff"/><stop offset=".190" stop-color="#0204ff"/><stop offset=".319" stop-color="#2000ff"/><stop offset=".956" stop-color="#c400ff"/><stop offset="1.0" stop-color="#d000ff"/></linearGradient><linearGradient id="r170" gradientUnits="userSpaceOnUse" x1="1398" x2="1668" y1="0" y2="0"><stop offset=".000" stop-color="#0010ff"/><stop offset=".189" stop-color="#0204ff"/><stop offset=".330" stop-color="#2300ff"/><stop offset=".978" stop-color="#c700ff"/><stop offset="1.0" stop-color="#cd00ff"/></linearGradient><linearGradient id="r171" gradientUnits="userSpaceOnUse" x1="1399" x2="1666" y1="0" y2="0"><stop offset=".000" stop-color="#000fff"/><stop offset=".187" stop-color="#0203ff"/><stop offset=".352" stop-color="#2800ff"/><stop offset="1.0" stop-color="#c900ff"/></linearGradient><linearGradient id="r172" gradientUnits="userSpaceOnUse" x1="1401" x2="1664" y1="0" y2="0"><stop offset=".000" stop-color="#000eff"/><stop offset=".183" stop-color="#0203ff"/><stop offset=".449" stop-color="#3f00ff"/><stop offset="1.0" stop-color="#c600ff"/></linearGradient><linearGradient id="r173" gradientUnits="userSpaceOnUse" x1="1402" x2="1662" y1="0" y2="0"><stop offset=".000" stop-color="#000dff"/><stop offset=".185" stop-color="#0202ff"/><stop offset=".881" stop-color="#a500ff"/><stop offset="1.0" stop-color="#c200ff"/></linearGradient><linearGradient id="r174" gradientUnits="userSpaceOnUse" x1="1404" x2="1660" y1="0" y2="0"><stop offset=".000" stop-color="#000cff"/><stop offset=".180" stop-color="#0201ff"/><stop offset=".891" stop-color="#a400ff"/><stop offset="1.0" stop-color="#bf00ff"/></linearGradient><linearGradient id="r175" gradientUnits="userSpaceOnUse" x1="1405" x2="1658" y1="0" y2="0"><stop offset=".000" stop-color="#000cff"/><stop offset=".178" stop-color="#0201ff"/><stop offset=".901" stop-color="#a400ff"/><stop offset="1.0" stop-color="#bb00ff"/></linearGradient><linearGradient id="r176" gradientUnits="userSpaceOnUse" x1="1407" x2="1656" y1="0" y2="0"><stop offset=".000" stop-color="#000bff"/><stop offset=".177" stop-color="#0200ff"/><stop offset=".916" stop-color="#a400ff"/><stop offset="1.0" stop-color="#b800ff"/></linearGradient><linearGradient id="r177" gradientUnits="userSpaceOnUse" x1="1408" x2="1654" y1="0" y2="0"><stop offset=".000" stop-color="#000aff"/><stop offset=".175" stop-color="#0200ff"/><stop offset=".927" stop-color="#a400ff"/><stop offset="1.0" stop-color="#b500ff"/></linearGradient><linearGradient id="r178" gradientUnits="userSpaceOnUse" x1="1410" x2="1652" y1="0" y2="0"><stop offset=".000" stop-color="#0009ff"/><stop offset=".174" stop-color="#0200ff"/><stop offset=".942" stop-color="#a400ff"/><stop offset="1.0" stop-color="#b100ff"/></linearGradient><linearGradient id="r179" gradientUnits="userSpaceOnUse" x1="1411" x2="1650" y1="0" y2="0"><stop offset=".000" stop-color="#0008ff"/><stop offset=".172" stop-color="#0200ff"/><stop offset=".954" stop-color="#a400ff"/><stop offset="1.0" stop-color="#ae00ff"/></linearGradient><linearGradient id="r180" gradientUnits="userSpaceOnUse" x1="1413" x2="1648" y1="0" y2="0"><stop offset=".000" stop-color="#0007ff"/><stop offset=".166" stop-color="#0200ff"/><stop offset=".970" stop-color="#a500ff"/><stop offset="1.0" stop-color="#ab00ff"/></linearGradient><linearGradient id="r181" gradientUnits="userSpaceOnUse" x1="1415" x2="1646" y1="0" y2="0"><stop offset=".000" stop-color="#0006ff"/><stop offset=".165" stop-color="#0200ff"/><stop offset=".987" stop-color="#a500ff"/><stop offset="1.0" stop-color="#a800ff"/></linearGradient><linearGradient id="r182" gradientUnits="userSpaceOnUse" x1="1416" x2="1644" y1="0" y2="0"><stop offset=".000" stop-color="#0006ff"/><stop offset=".162" stop-color="#0200ff"/><stop offset="1.0" stop-color="#a500ff"/></linearGradient><linearGradient id="r183" gradientUnits="userSpaceOnUse" x1="1418" x2="1642" y1="0" y2="0"><stop offset=".000" stop-color="#0005ff"/><stop offset=".156" stop-color="#0200ff"/><stop offset="1.0" stop-color="#a200ff"/></linearGradient><linearGradient id="r184" gradientUnits="userSpaceOnUse" x1="1419" x2="1640" y1="0" y2="0"><stop offset=".000" stop-color="#0004ff"/><stop offset=".158" stop-color="#0200ff"/><stop offset="1.0" stop-color="#9f00ff"/></linearGradient><linearGradient id="r185" gradientUnits="userSpaceOnUse" x1="1421" x2="1638" y1="0" y2="0"><stop offset=".000" stop-color="#0003ff"/><stop offset=".152" stop-color="#0200ff"/><stop offset="1.0" stop-color="#9c00ff"/></linearGradient><linearGradient id="r186" gradientUnits="userSpaceOnUse" x1="1423" x2="1636" y1="0" y2="0"><stop offset=".000" stop-color="#0002ff"/><stop offset=".146" stop-color="#0200ff"/><stop offset="1.0" stop-color="#9900ff"/></linearGradient><linearGradient id="r187" gradientUnits="userSpaceOnUse" x1="1425" x2="1634" y1="0" y2="0"><stop offset=".000" stop-color="#0001ff"/><stop offset=".144" stop-color="#0200ff"/><stop offset="1.0" stop-color="#9600ff"/></linearGradient><linearGradient id="r188" gradientUnits="userSpaceOnUse" x1="1426" x2="1632" y1="0" y2="0"><stop offset=".000" stop-color="#0001ff"/><stop offset=".141" stop-color="#0200ff"/><stop offset="1.0" stop-color="#9300ff"/></linearGradient><linearGradient id="r189" gradientUnits="userSpaceOnUse" x1="1428" x2="1631" y1="0" y2="0"><stop offset=".000" stop-color="#0000ff"/><stop offset=".138" stop-color="#0300ff"/><stop offset="1.0" stop-color="#9100ff"/></linearGradient><linearGradient id="r190" gradientUnits="userSpaceOnUse" x1="1430" x2="1629" y1="0" y2="0"><stop offset=".000" stop-color="#0000ff"/><stop offset=".131" stop-color="#0200ff"/><stop offset="1.0" stop-color="#8e00ff"/></linearGradient><linearGradient id="r191" gradientUnits="userSpaceOnUse" x1="1431" x2="1627" y1="0" y2="0"><stop offset=".000" stop-color="#0000ff"/><stop offset=".128" stop-color="#0200ff"/><stop offset="1.0" stop-color="#8b00ff"/></linearGradient><linearGradient id="r192" gradientUnits="userSpaceOnUse" x1="1433" x2="1625" y1="0" y2="0"><stop offset=".000" stop-color="#0000ff"/><stop offset=".125" stop-color="#0300ff"/><stop offset="1.0" stop-color="#8900ff"/></linearGradient><linearGradient id="r193" gradientUnits="userSpaceOnUse" x1="1435" x2="1623" y1="0" y2="0"><stop offset=".000" stop-color="#0000ff"/><stop offset=".117" stop-color="#0200ff"/><stop offset="1.0" stop-color="#8600ff"/></linearGradient><linearGradient id="r194" gradientUnits="userSpaceOnUse" x1="1437" x2="1621" y1="0" y2="0"><stop offset=".000" stop-color="#0000ff"/><stop offset=".109" stop-color="#0200ff"/><stop offset="1.0" stop-color="#8300ff"/></linearGradient><linearGradient id="r195" gradientUnits="userSpaceOnUse" x1="1438" x2="1619" y1="0" y2="0"><stop offset=".000" stop-color="#0000ff"/><stop offset=".110" stop-color="#0300ff"/><stop offset="1.0" stop-color="#8100ff"/></linearGradient><linearGradient id="r196" gradientUnits="userSpaceOnUse" x1="1440" x2="1617" y1="0" y2="0"><stop offset=".000" stop-color="#0000ff"/><stop offset=".102" stop-color="#0200ff"/><stop offset="1.0" stop-color="#7e00ff"/></linearGradient><linearGradient id="r197" gradientUnits="userSpaceOnUse" x1="1442" x2="1615" y1="0" y2="0"><stop offset=".000" stop-color="#0000ff"/><stop offset=".098" stop-color="#0300ff"/><stop offset="1.0" stop-color="#7b00ff"/></linearGradient><linearGradient id="r198" gradientUnits="userSpaceOnUse" x1="1444" x2="1613" y1="0" y2="0"><stop offset=".000" stop-color="#0000ff"/><stop offset=".089" stop-color="#0200ff"/><stop offset="1.0" stop-color="#7900ff"/></linearGradient><linearGradient id="r199" gradientUnits="userSpaceOnUse" x1="1446" x2="1611" y1="0" y2="0"><stop offset=".000" stop-color="#0000ff"/><stop offset=".085" stop-color="#0300ff"/><stop offset="1.0" stop-color="#7600ff"/></linearGradient><linearGradient id="r200" gradientUnits="userSpaceOnUse" x1="1448" x2="1609" y1="0" y2="0"><stop offset=".000" stop-color="#0000ff"/><stop offset=".081" stop-color="#0300ff"/><stop offset="1.0" stop-color="#7400ff"/></linearGradient><linearGradient id="r201" gradientUnits="userSpaceOnUse" x1="1449" x2="1607" y1="0" y2="0"><stop offset=".000" stop-color="#0000ff"/><stop offset=".082" stop-color="#0400ff"/><stop offset="1.0" stop-color="#7100ff"/></linearGradient><linearGradient id="r202" gradientUnits="userSpaceOnUse" x1="1451" x2="1605" y1="0" y2="0"><stop offset=".000" stop-color="#0000ff"/><stop offset=".078" stop-color="#0400ff"/><stop offset="1.0" stop-color="#6f00ff"/></linearGradient><linearGradient id="r203" gradientUnits="userSpaceOnUse" x1="1453" x2="1603" y1="0" y2="0"><stop offset=".000" stop-color="#0000ff"/><stop offset=".113" stop-color="#0900ff"/><stop offset="1.0" stop-color="#6d00ff"/></linearGradient><linearGradient id="r204" gradientUnits="userSpaceOnUse" x1="1455" x2="1601" y1="0" y2="0"><stop offset=".000" stop-color="#0000ff"/><stop offset="1.0" stop-color="#6a00ff"/></linearGradient><linearGradient id="r205" gradientUnits="userSpaceOnUse" x1="1457" x2="1599" y1="0" y2="0"><stop offset=".000" stop-color="#0000ff"/><stop offset="1.0" stop-color="#6800ff"/></linearGradient><linearGradient id="r206" gradientUnits="userSpaceOnUse" x1="1459" x2="1597" y1="0" y2="0"><stop offset=".000" stop-color="#0100ff"/><stop offset="1.0" stop-color="#6600ff"/></linearGradient><linearGradient id="r207" gradientUnits="userSpaceOnUse" x1="1461" x2="1595" y1="0" y2="0"><stop offset=".000" stop-color="#0200ff"/><stop offset="1.0" stop-color="#6300ff"/></linearGradient><linearGradient id="r208" gradientUnits="userSpaceOnUse" x1="1463" x2="1594" y1="0" y2="0"><stop offset=".000" stop-color="#0300ff"/><stop offset="1.0" stop-color="#6200ff"/></linearGradient><linearGradient id="r209" gradientUnits="userSpaceOnUse" x1="1465" x2="1592" y1="0" y2="0"><stop offset=".000" stop-color="#0400ff"/><stop offset="1.0" stop-color="#6000ff"/></linearGradient><linearGradient id="r210" gradientUnits="userSpaceOnUse" x1="1467" x2="1590" y1="0" y2="0"><stop offset=".000" stop-color="#0500ff"/><stop offset="1.0" stop-color="#5d00ff"/></linearGradient><linearGradient id="r211" gradientUnits="userSpaceOnUse" x1="1469" x2="1588" y1="0" y2="0"><stop offset=".000" stop-color="#0600ff"/><stop offset="1.0" stop-color="#5b00ff"/></linearGradient><linearGradient id="r212" gradientUnits="userSpaceOnUse" x1="1471" x2="1586" y1="0" y2="0"><stop offset=".000" stop-color="#0700ff"/><stop offset="1.0" stop-color="#5900ff"/></linearGradient><linearGradient id="r213" gradientUnits="userSpaceOnUse" x1="1473" x2="1584" y1="0" y2="0"><stop offset=".000" stop-color="#0900ff"/><stop offset="1.0" stop-color="#5700ff"/></linearGradient><linearGradient id="r214" gradientUnits="userSpaceOnUse" x1="1475" x2="1582" y1="0" y2="0"><stop offset=".000" stop-color="#0a00ff"/><stop offset="1.0" stop-color="#5500ff"/></linearGradient><linearGradient id="r215" gradientUnits="userSpaceOnUse" x1="1478" x2="1580" y1="0" y2="0"><stop offset=".000" stop-color="#0b00ff"/><stop offset="1.0" stop-color="#5300ff"/></linearGradient><linearGradient id="r216" gradientUnits="userSpaceOnUse" x1="1480" x2="1578" y1="0" y2="0"><stop offset=".000" stop-color="#0d00ff"/><stop offset="1.0" stop-color="#5100ff"/></linearGradient><linearGradient id="r217" gradientUnits="userSpaceOnUse" x1="1483" x2="1576" y1="0" y2="0"><stop offset=".000" stop-color="#0e00ff"/><stop offset="1.0" stop-color="#4f00ff"/></linearGradient><linearGradient id="r218" gradientUnits="userSpaceOnUse" x1="1485" x2="1574" y1="0" y2="0"><stop offset=".000" stop-color="#0f00ff"/><stop offset="1.0" stop-color="#4d00ff"/></linearGradient><linearGradient id="r219" gradientUnits="userSpaceOnUse" x1="1488" x2="1572" y1="0" y2="0"><stop offset=".000" stop-color="#1100ff"/><stop offset="1.0" stop-color="#4b00ff"/></linearGradient><linearGradient id="r220" gradientUnits="userSpaceOnUse" x1="1490" x2="1570" y1="0" y2="0"><stop offset=".000" stop-color="#1200ff"/><stop offset="1.0" stop-color="#4900ff"/></linearGradient><linearGradient id="r221" gradientUnits="userSpaceOnUse" x1="1493" x2="1568" y1="0" y2="0"><stop offset=".000" stop-color="#1400ff"/><stop offset="1.0" stop-color="#4700ff"/></linearGradient><linearGradient id="r222" gradientUnits="userSpaceOnUse" x1="1495" x2="1566" y1="0" y2="0"><stop offset=".000" stop-color="#1500ff"/><stop offset="1.0" stop-color="#4500ff"/></linearGradient><linearGradient id="r223" gradientUnits="userSpaceOnUse" x1="1497" x2="1564" y1="0" y2="0"><stop offset=".000" stop-color="#1600ff"/><stop offset="1.0" stop-color="#4300ff"/></linearGradient><linearGradient id="r224" gradientUnits="userSpaceOnUse" x1="1500" x2="1562" y1="0" y2="0"><stop offset=".000" stop-color="#1800ff"/><stop offset="1.0" stop-color="#4100ff"/></linearGradient><linearGradient id="r225" gradientUnits="userSpaceOnUse" x1="1502" x2="1560" y1="0" y2="0"><stop offset=".000" stop-color="#1900ff"/><stop offset="1.0" stop-color="#3f00ff"/></linearGradient><linearGradient id="r226" gradientUnits="userSpaceOnUse" x1="1505" x2="1559" y1="0" y2="0"><stop offset=".000" stop-color="#1a00ff"/><stop offset="1.0" stop-color="#3e00ff"/></linearGradient><linearGradient id="r227" gradientUnits="userSpaceOnUse" x1="1507" x2="1557" y1="0" y2="0"><stop offset=".000" stop-color="#1b00ff"/><stop offset="1.0" stop-color="#3c00ff"/></linearGradient><linearGradient id="r228" gradientUnits="userSpaceOnUse" x1="1510" x2="1555" y1="0" y2="0"><stop offset=".000" stop-color="#1d00ff"/><stop offset="1.0" stop-color="#3a00ff"/></linearGradient><linearGradient id="r229" gradientUnits="userSpaceOnUse" x1="1512" x2="1553" y1="0" y2="0"><stop offset=".000" stop-color="#1e00ff"/><stop offset="1.0" stop-color="#3800ff"/></linearGradient><linearGradient id="r230" gradientUnits="userSpaceOnUse" x1="1514" x2="1551" y1="0" y2="0"><stop offset=".000" stop-color="#1f00ff"/><stop offset="1.0" stop-color="#3700ff"/></linearGradient><linearGradient id="r231" gradientUnits="userSpaceOnUse" x1="1517" x2="1549" y1="0" y2="0"><stop offset=".000" stop-color="#2000ff"/><stop offset="1.0" stop-color="#3500ff"/></linearGradient><linearGradient id="r232" gradientUnits="userSpaceOnUse" x1="1519" x2="1547" y1="0" y2="0"><stop offset=".000" stop-color="#2100ff"/><stop offset="1.0" stop-color="#3300ff"/></linearGradient><linearGradient id="r233" gradientUnits="userSpaceOnUse" x1="1522" x2="1545" y1="0" y2="0"><stop offset=".000" stop-color="#2300ff"/><stop offset="1.0" stop-color="#3100ff"/></linearGradient><linearGradient id="r234" gradientUnits="userSpaceOnUse" x1="1524" x2="1543" y1="0" y2="0"><stop offset=".000" stop-color="#2400ff"/><stop offset="1.0" stop-color="#3000ff"/></linearGradient><linearGradient id="r235" gradientUnits="userSpaceOnUse" x1="1526" x2="1541" y1="0" y2="0"><stop offset=".000" stop-color="#2400ff"/><stop offset="1.0" stop-color="#2e00ff"/></linearGradient><linearGradient id="r236" gradientUnits="userSpaceOnUse" x1="1529" x2="1539" y1="0" y2="0"><stop offset=".000" stop-color="#2600ff"/><stop offset="1.0" stop-color="#2c00ff"/></linearGradient><linearGradient id="r237" gradientUnits="userSpaceOnUse" x1="1533" x2="1537" y1="0" y2="0"><stop offset=".000" stop-color="#2800ff"/><stop offset="1.0" stop-color="#2b00ff"/></linearGradient></defs><g clip-path="url(#pr)"><g clip-path="url(#hs)"><rect x="1286" y="230" width="73" height="2.5" fill="url(#r0)"/><rect x="1280" y="232" width="102" height="2.5" fill="url(#r1)"/><rect x="1275" y="234" width="127" height="2.5" fill="url(#r2)"/><rect x="1272" y="236" width="148" height="2.5" fill="url(#r3)"/><rect x="1270" y="238" width="169" height="2.5" fill="url(#r4)"/><rect x="1268" y="240" width="189" height="2.5" fill="url(#r5)"/><rect x="1267" y="242" width="207" height="2.5" fill="url(#r6)"/><rect x="1265" y="244" width="227" height="2.5" fill="url(#r7)"/><rect x="1264" y="246" width="245" height="2.5" fill="url(#r8)"/><rect x="1264" y="248" width="262" height="2.5" fill="url(#r9)"/><rect x="1263" y="250" width="281" height="2.5" fill="url(#r10)"/><rect x="1262" y="252" width="299" height="2.5" fill="url(#r11)"/><rect x="1262" y="254" width="317" height="2.5" fill="url(#r12)"/><rect x="1261" y="256" width="335" height="2.5" fill="url(#r13)"/><rect x="1261" y="258" width="353" height="2.5" fill="url(#r14)"/><rect x="1261" y="260" width="370" height="2.5" fill="url(#r15)"/><rect x="1261" y="262" width="387" height="2.5" fill="url(#r16)"/><rect x="1260" y="264" width="406" height="2.5" fill="url(#r17)"/><rect x="1260" y="266" width="423" height="2.5" fill="url(#r18)"/><rect x="1260" y="268" width="440" height="2.5" fill="url(#r19)"/><rect x="1260" y="270" width="458" height="2.5" fill="url(#r20)"/><rect x="1260" y="272" width="475" height="2.5" fill="url(#r21)"/><rect x="1261" y="274" width="492" height="2.5" fill="url(#r22)"/><rect x="1261" y="276" width="509" height="2.5" fill="url(#r23)"/><rect x="1261" y="278" width="527" height="2.5" fill="url(#r24)"/><rect x="1261" y="280" width="544" height="2.5" fill="url(#r25)"/><rect x="1261" y="282" width="561" height="2.5" fill="url(#r26)"/><rect x="1261" y="284" width="579" height="2.5" fill="url(#r27)"/><rect x="1262" y="286" width="595" height="2.5" fill="url(#r28)"/><rect x="1262" y="288" width="613" height="2.5" fill="url(#r29)"/><rect x="1262" y="290" width="630" height="2.5" fill="url(#r30)"/><rect x="1263" y="292" width="646.6" height="2.5" fill="url(#r31)"/><rect x="1263" y="294" width="646.6" height="2.5" fill="url(#r32)"/><rect x="1264" y="296" width="645.6" height="2.5" fill="url(#r33)"/><rect x="1264" y="298" width="645.6" height="2.5" fill="url(#r34)"/><rect x="1264" y="300" width="645.6" height="2.5" fill="url(#r35)"/><rect x="1265" y="302" width="644.6" height="2.5" fill="url(#r36)"/><rect x="1265" y="304" width="644.6" height="2.5" fill="url(#r37)"/><rect x="1266" y="306" width="643.6" height="2.5" fill="url(#r38)"/><rect x="1266" y="308" width="643.6" height="2.5" fill="url(#r39)"/><rect x="1267" y="310" width="642.6" height="2.5" fill="url(#r40)"/><rect x="1267" y="312" width="642.6" height="2.5" fill="url(#r41)"/><rect x="1268" y="314" width="641.6" height="2.5" fill="url(#r42)"/><rect x="1268" y="316" width="641.6" height="2.5" fill="url(#r43)"/><rect x="1269" y="318" width="640.6" height="2.5" fill="url(#r44)"/><rect x="1270" y="320" width="639.6" height="2.5" fill="url(#r45)"/><rect x="1270" y="322" width="639" height="2.5" fill="url(#r46)"/><rect x="1271" y="324" width="636" height="2.5" fill="url(#r47)"/><rect x="1271" y="326" width="634" height="2.5" fill="url(#r48)"/><rect x="1272" y="328" width="631" height="2.5" fill="url(#r49)"/><rect x="1273" y="330" width="628" height="2.5" fill="url(#r50)"/><rect x="1273" y="332" width="626" height="2.5" fill="url(#r51)"/><rect x="1274" y="334" width="623" height="2.5" fill="url(#r52)"/><rect x="1275" y="336" width="620" height="2.5" fill="url(#r53)"/><rect x="1275" y="338" width="618" height="2.5" fill="url(#r54)"/><rect x="1276" y="340" width="615" height="2.5" fill="url(#r55)"/><rect x="1277" y="342" width="612" height="2.5" fill="url(#r56)"/><rect x="1277" y="344" width="610" height="2.5" fill="url(#r57)"/><rect x="1278" y="346" width="608" height="2.5" fill="url(#r58)"/><rect x="1279" y="348" width="605" height="2.5" fill="url(#r59)"/><rect x="1279" y="350" width="603" height="2.5" fill="url(#r60)"/><rect x="1280" y="352" width="600" height="2.5" fill="url(#r61)"/><rect x="1281" y="354" width="597" height="2.5" fill="url(#r62)"/><rect x="1282" y="356" width="594" height="2.5" fill="url(#r63)"/><rect x="1282" y="358" width="592" height="2.5" fill="url(#r64)"/><rect x="1283" y="360" width="589" height="2.5" fill="url(#r65)"/><rect x="1284" y="362" width="586" height="2.5" fill="url(#r66)"/><rect x="1285" y="364" width="583" height="2.5" fill="url(#r67)"/><rect x="1286" y="366" width="580" height="2.5" fill="url(#r68)"/><rect x="1286" y="368" width="578" height="2.5" fill="url(#r69)"/><rect x="1287" y="370" width="575" height="2.5" fill="url(#r70)"/><rect x="1288" y="372" width="572" height="2.5" fill="url(#r71)"/><rect x="1289" y="374" width="569" height="2.5" fill="url(#r72)"/><rect x="1290" y="376" width="566" height="2.5" fill="url(#r73)"/><rect x="1290" y="378" width="564" height="2.5" fill="url(#r74)"/><rect x="1291" y="380" width="561" height="2.5" fill="url(#r75)"/><rect x="1292" y="382" width="559" height="2.5" fill="url(#r76)"/><rect x="1293" y="384" width="556" height="2.5" fill="url(#r77)"/><rect x="1294" y="386" width="553" height="2.5" fill="url(#r78)"/><rect x="1295" y="388" width="550" height="2.5" fill="url(#r79)"/><rect x="1295" y="390" width="548" height="2.5" fill="url(#r80)"/><rect x="1296" y="392" width="545" height="2.5" fill="url(#r81)"/><rect x="1297" y="394" width="542" height="2.5" fill="url(#r82)"/><rect x="1298" y="396" width="539" height="2.5" fill="url(#r83)"/><rect x="1299" y="398" width="536" height="2.5" fill="url(#r84)"/><rect x="1300" y="400" width="533" height="2.5" fill="url(#r85)"/><rect x="1301" y="402" width="530" height="2.5" fill="url(#r86)"/><rect x="1302" y="404" width="527" height="2.5" fill="url(#r87)"/><rect x="1302" y="406" width="525" height="2.5" fill="url(#r88)"/><rect x="1303" y="408" width="522" height="2.5" fill="url(#r89)"/><rect x="1304" y="410" width="519" height="2.5" fill="url(#r90)"/><rect x="1305" y="412" width="516" height="2.5" fill="url(#r91)"/><rect x="1306" y="414" width="513" height="2.5" fill="url(#r92)"/><rect x="1307" y="416" width="510" height="2.5" fill="url(#r93)"/><rect x="1308" y="418" width="507" height="2.5" fill="url(#r94)"/><rect x="1309" y="420" width="505" height="2.5" fill="url(#r95)"/><rect x="1310" y="422" width="502" height="2.5" fill="url(#r96)"/><rect x="1311" y="424" width="499" height="2.5" fill="url(#r97)"/><rect x="1312" y="426" width="496" height="2.5" fill="url(#r98)"/><rect x="1313" y="428" width="493" height="2.5" fill="url(#r99)"/><rect x="1314" y="430" width="490" height="2.5" fill="url(#r100)"/><rect x="1315" y="432" width="487" height="2.5" fill="url(#r101)"/><rect x="1316" y="434" width="484" height="2.5" fill="url(#r102)"/><rect x="1317" y="436" width="481" height="2.5" fill="url(#r103)"/><rect x="1318" y="438" width="478" height="2.5" fill="url(#r104)"/><rect x="1319" y="440" width="475" height="2.5" fill="url(#r105)"/><rect x="1320" y="442" width="472" height="2.5" fill="url(#r106)"/><rect x="1321" y="444" width="469" height="2.5" fill="url(#r107)"/><rect x="1322" y="446" width="466" height="2.5" fill="url(#r108)"/><rect x="1323" y="448" width="463" height="2.5" fill="url(#r109)"/><rect x="1324" y="450" width="460" height="2.5" fill="url(#r110)"/><rect x="1325" y="452" width="457" height="2.5" fill="url(#r111)"/><rect x="1326" y="454" width="454" height="2.5" fill="url(#r112)"/><rect x="1327" y="456" width="451" height="2.5" fill="url(#r113)"/><rect x="1329" y="458" width="448" height="2.5" fill="url(#r114)"/><rect x="1330" y="460" width="445" height="2.5" fill="url(#r115)"/><rect x="1331" y="462" width="442" height="2.5" fill="url(#r116)"/><rect x="1332" y="464" width="439" height="2.5" fill="url(#r117)"/><rect x="1333" y="466" width="436" height="2.5" fill="url(#r118)"/><rect x="1334" y="468" width="433" height="2.5" fill="url(#r119)"/><rect x="1335" y="470" width="430" height="2.5" fill="url(#r120)"/><rect x="1336" y="472" width="427" height="2.5" fill="url(#r121)"/><rect x="1338" y="474" width="423" height="2.5" fill="url(#r122)"/><rect x="1339" y="476" width="420" height="2.5" fill="url(#r123)"/><rect x="1340" y="478" width="417" height="2.5" fill="url(#r124)"/><rect x="1341" y="480" width="414" height="2.5" fill="url(#r125)"/><rect x="1342" y="482" width="411" height="2.5" fill="url(#r126)"/><rect x="1343" y="484" width="408" height="2.5" fill="url(#r127)"/><rect x="1345" y="486" width="404" height="2.5" fill="url(#r128)"/><rect x="1346" y="488" width="401" height="2.5" fill="url(#r129)"/><rect x="1347" y="490" width="398" height="2.5" fill="url(#r130)"/><rect x="1348" y="492" width="395" height="2.5" fill="url(#r131)"/><rect x="1349" y="494" width="392" height="2.5" fill="url(#r132)"/><rect x="1350" y="496" width="390" height="2.5" fill="url(#r133)"/><rect x="1352" y="498" width="386" height="2.5" fill="url(#r134)"/><rect x="1353" y="500" width="383" height="2.5" fill="url(#r135)"/><rect x="1354" y="502" width="380" height="2.5" fill="url(#r136)"/><rect x="1355" y="504" width="377" height="2.5" fill="url(#r137)"/><rect x="1356" y="506" width="374" height="2.5" fill="url(#r138)"/><rect x="1358" y="508" width="370" height="2.5" fill="url(#r139)"/><rect x="1359" y="510" width="367" height="2.5" fill="url(#r140)"/><rect x="1360" y="512" width="364" height="2.5" fill="url(#r141)"/><rect x="1361" y="514" width="361" height="2.5" fill="url(#r142)"/><rect x="1363" y="516" width="357" height="2.5" fill="url(#r143)"/><rect x="1364" y="518" width="354" height="2.5" fill="url(#r144)"/><rect x="1365" y="520" width="351" height="2.5" fill="url(#r145)"/><rect x="1366" y="522" width="348" height="2.5" fill="url(#r146)"/><rect x="1368" y="524" width="344" height="2.5" fill="url(#r147)"/><rect x="1369" y="526" width="341" height="2.5" fill="url(#r148)"/><rect x="1370" y="528" width="338" height="2.5" fill="url(#r149)"/><rect x="1371" y="530" width="335" height="2.5" fill="url(#r150)"/><rect x="1373" y="532" width="332" height="2.5" fill="url(#r151)"/><rect x="1374" y="534" width="329" height="2.5" fill="url(#r152)"/><rect x="1375" y="536" width="326" height="2.5" fill="url(#r153)"/><rect x="1376" y="538" width="323" height="2.5" fill="url(#r154)"/><rect x="1378" y="540" width="319" height="2.5" fill="url(#r155)"/><rect x="1379" y="542" width="316" height="2.5" fill="url(#r156)"/><rect x="1380" y="544" width="313" height="2.5" fill="url(#r157)"/><rect x="1382" y="546" width="309" height="2.5" fill="url(#r158)"/><rect x="1383" y="548" width="306" height="2.5" fill="url(#r159)"/><rect x="1384" y="550" width="303" height="2.5" fill="url(#r160)"/><rect x="1386" y="552" width="299" height="2.5" fill="url(#r161)"/><rect x="1387" y="554" width="296" height="2.5" fill="url(#r162)"/><rect x="1388" y="556" width="293" height="2.5" fill="url(#r163)"/><rect x="1390" y="558" width="289" height="2.5" fill="url(#r164)"/><rect x="1391" y="560" width="286" height="2.5" fill="url(#r165)"/><rect x="1392" y="562" width="283" height="2.5" fill="url(#r166)"/><rect x="1394" y="564" width="279" height="2.5" fill="url(#r167)"/><rect x="1395" y="566" width="276" height="2.5" fill="url(#r168)"/><rect x="1396" y="568" width="273" height="2.5" fill="url(#r169)"/><rect x="1398" y="570" width="270" height="2.5" fill="url(#r170)"/><rect x="1399" y="572" width="267" height="2.5" fill="url(#r171)"/><rect x="1401" y="574" width="263" height="2.5" fill="url(#r172)"/><rect x="1402" y="576" width="260" height="2.5" fill="url(#r173)"/><rect x="1404" y="578" width="256" height="2.5" fill="url(#r174)"/><rect x="1405" y="580" width="253" height="2.5" fill="url(#r175)"/><rect x="1407" y="582" width="249" height="2.5" fill="url(#r176)"/><rect x="1408" y="584" width="246" height="2.5" fill="url(#r177)"/><rect x="1410" y="586" width="242" height="2.5" fill="url(#r178)"/><rect x="1411" y="588" width="239" height="2.5" fill="url(#r179)"/><rect x="1413" y="590" width="235" height="2.5" fill="url(#r180)"/><rect x="1415" y="592" width="231" height="2.5" fill="url(#r181)"/><rect x="1416" y="594" width="228" height="2.5" fill="url(#r182)"/><rect x="1418" y="596" width="224" height="2.5" fill="url(#r183)"/><rect x="1419" y="598" width="221" height="2.5" fill="url(#r184)"/><rect x="1421" y="600" width="217" height="2.5" fill="url(#r185)"/><rect x="1423" y="602" width="213" height="2.5" fill="url(#r186)"/><rect x="1425" y="604" width="209" height="2.5" fill="url(#r187)"/><rect x="1426" y="606" width="206" height="2.5" fill="url(#r188)"/><rect x="1428" y="608" width="203" height="2.5" fill="url(#r189)"/><rect x="1430" y="610" width="199" height="2.5" fill="url(#r190)"/><rect x="1431" y="612" width="196" height="2.5" fill="url(#r191)"/><rect x="1433" y="614" width="192" height="2.5" fill="url(#r192)"/><rect x="1435" y="616" width="188" height="2.5" fill="url(#r193)"/><rect x="1437" y="618" width="184" height="2.5" fill="url(#r194)"/><rect x="1438" y="620" width="181" height="2.5" fill="url(#r195)"/><rect x="1440" y="622" width="177" height="2.5" fill="url(#r196)"/><rect x="1442" y="624" width="173" height="2.5" fill="url(#r197)"/><rect x="1444" y="626" width="169" height="2.5" fill="url(#r198)"/><rect x="1446" y="628" width="165" height="2.5" fill="url(#r199)"/><rect x="1448" y="630" width="161" height="2.5" fill="url(#r200)"/><rect x="1449" y="632" width="158" height="2.5" fill="url(#r201)"/><rect x="1451" y="634" width="154" height="2.5" fill="url(#r202)"/><rect x="1453" y="636" width="150" height="2.5" fill="url(#r203)"/><rect x="1455" y="638" width="146" height="2.5" fill="url(#r204)"/><rect x="1457" y="640" width="142" height="2.5" fill="url(#r205)"/><rect x="1459" y="642" width="138" height="2.5" fill="url(#r206)"/><rect x="1461" y="644" width="134" height="2.5" fill="url(#r207)"/><rect x="1463" y="646" width="131" height="2.5" fill="url(#r208)"/><rect x="1465" y="648" width="127" height="2.5" fill="url(#r209)"/><rect x="1467" y="650" width="123" height="2.5" fill="url(#r210)"/><rect x="1469" y="652" width="119" height="2.5" fill="url(#r211)"/><rect x="1471" y="654" width="115" height="2.5" fill="url(#r212)"/><rect x="1473" y="656" width="111" height="2.5" fill="url(#r213)"/><rect x="1475" y="658" width="107" height="2.5" fill="url(#r214)"/><rect x="1478" y="660" width="102" height="2.5" fill="url(#r215)"/><rect x="1480" y="662" width="98" height="2.5" fill="url(#r216)"/><rect x="1483" y="664" width="93" height="2.5" fill="url(#r217)"/><rect x="1485" y="666" width="89" height="2.5" fill="url(#r218)"/><rect x="1488" y="668" width="84" height="2.5" fill="url(#r219)"/><rect x="1490" y="670" width="80" height="2.5" fill="url(#r220)"/><rect x="1493" y="672" width="75" height="2.5" fill="url(#r221)"/><rect x="1495" y="674" width="71" height="2.5" fill="url(#r222)"/><rect x="1497" y="676" width="67" height="2.5" fill="url(#r223)"/><rect x="1500" y="678" width="62" height="2.5" fill="url(#r224)"/><rect x="1502" y="680" width="58" height="2.5" fill="url(#r225)"/><rect x="1505" y="682" width="54" height="2.5" fill="url(#r226)"/><rect x="1507" y="684" width="50" height="2.5" fill="url(#r227)"/><rect x="1510" y="686" width="45" height="2.5" fill="url(#r228)"/><rect x="1512" y="688" width="41" height="2.5" fill="url(#r229)"/><rect x="1514" y="690" width="37" height="2.5" fill="url(#r230)"/><rect x="1517" y="692" width="32" height="2.5" fill="url(#r231)"/><rect x="1519" y="694" width="28" height="2.5" fill="url(#r232)"/><rect x="1522" y="696" width="23" height="2.5" fill="url(#r233)"/><rect x="1524" y="698" width="19" height="2.5" fill="url(#r234)"/><rect x="1526" y="700" width="15" height="2.5" fill="url(#r235)"/><rect x="1529" y="702" width="10" height="2.5" fill="url(#r236)"/><rect x="1533" y="704" width="4" height="2.5" fill="url(#r237)"/><path d="M1200 150H1950V800H1200Z M1746.2 281.2 L1393.5 248.3 L1449.1 585.4Z" fill="#000" fill-opacity="0.395" fill-rule="evenodd"/></g></g><g fill="none" stroke="#bcbcbc" stroke-width="1.5"><path d="M1259.4 218.4H1908.6V717.5H1259.4Z"/><path d="M1253.1 717.5H1259.4"/><path d="M1253.1 675.965H1259.4"/><path d="M1253.1 634.43H1259.4"/><path d="M1253.1 592.895H1259.4"/><path d="M1253.1 551.36H1259.4"/><path d="M1253.1 509.825H1259.4"/><path d="M1253.1 468.29H1259.4"/><path d="M1253.1 426.755H1259.4"/><path d="M1253.1 385.22H1259.4"/><path d="M1253.1 343.685H1259.4"/><path d="M1253.1 302.15H1259.4"/><path d="M1253.1 260.615H1259.4"/><path d="M1259.4 717.5V723.8"/><path d="M1313.43 717.5V723.8"/><path d="M1367.45 717.5V723.8"/><path d="M1421.48 717.5V723.8"/><path d="M1475.5 717.5V723.8"/><path d="M1529.53 717.5V723.8"/><path d="M1583.55 717.5V723.8"/><path d="M1637.58 717.5V723.8"/><path d="M1691.6 717.5V723.8"/><path d="M1745.62 717.5V723.8"/><path d="M1799.65 717.5V723.8"/><path d="M1853.68 717.5V723.8"/></g><rect x="1386.8" y="241.6" width="13.4" height="13.4" fill="none" stroke="#fff" stroke-width="1.3"/><circle cx="1389.4" cy="248.3" r="3.9" fill="#00b400" stroke="#2a2a2a" stroke-width="1.5"/><rect x="1399.3" y="253.9" width="13.4" height="13.4" fill="none" stroke="#fff" stroke-width="1.3"/><circle cx="1401.9" cy="260.6" r="3.9" fill="#48b848" stroke="#2a2a2a" stroke-width="1.5"/><rect x="1411.7" y="266.2" width="13.4" height="13.4" fill="none" stroke="#fff" stroke-width="1.3"/><circle cx="1415.9" cy="274.4" r="3.9" fill="#64b464" stroke="#2a2a2a" stroke-width="1.5"/><rect x="1427.1" y="281.4" width="13.4" height="13.4" fill="none" stroke="#fff" stroke-width="1.3"/><circle cx="1429.4" cy="288.4" r="3.9" fill="#7cb47c" stroke="#2a2a2a" stroke-width="1.5"/><rect x="1444.6" y="298.3" width="13.4" height="13.4" fill="none" stroke="#fff" stroke-width="1.3"/><circle cx="1448.8" cy="306.5" r="3.9" fill="#96b496" stroke="#2a2a2a" stroke-width="1.5"/><rect x="1472.7" y="249.6" width="13.4" height="13.4" fill="none" stroke="#fff" stroke-width="1.3"/><circle cx="1475.0" cy="256.9" r="3.9" fill="#b4b400" stroke="#2a2a2a" stroke-width="1.5"/><rect x="1470.6" y="262.1" width="13.4" height="13.4" fill="none" stroke="#fff" stroke-width="1.3"/><circle cx="1473.5" cy="269.0" r="3.9" fill="#b4b448" stroke="#2a2a2a" stroke-width="1.5"/><rect x="1470.6" y="274.6" width="13.4" height="13.4" fill="none" stroke="#fff" stroke-width="1.3"/><circle cx="1473.5" cy="280.0" r="3.9" fill="#b4b466" stroke="#2a2a2a" stroke-width="1.5"/><rect x="1469.6" y="287.3" width="13.4" height="13.4" fill="none" stroke="#fff" stroke-width="1.3"/><circle cx="1472.5" cy="293.5" r="3.9" fill="#b4b47e" stroke="#2a2a2a" stroke-width="1.5"/><rect x="1468.6" y="302.3" width="13.4" height="13.4" fill="none" stroke="#fff" stroke-width="1.3"/><circle cx="1471.3" cy="310.0" r="3.9" fill="#b4b498" stroke="#2a2a2a" stroke-width="1.5"/><rect x="1401.8" y="331.7" width="13.4" height="13.4" fill="none" stroke="#fff" stroke-width="1.3"/><circle cx="1405.9" cy="337.9" r="3.9" fill="#00b4b4" stroke="#2a2a2a" stroke-width="1.5"/><rect x="1414.8" y="328.8" width="13.4" height="13.4" fill="none" stroke="#fff" stroke-width="1.3"/><circle cx="1418.8" cy="336.6" r="3.9" fill="#48b4b4" stroke="#2a2a2a" stroke-width="1.5"/><rect x="1427.2" y="326.8" width="13.4" height="13.4" fill="none" stroke="#fff" stroke-width="1.3"/><circle cx="1430.6" cy="334.0" r="3.9" fill="#66b4b4" stroke="#2a2a2a" stroke-width="1.5"/><rect x="1440.8" y="324.3" width="13.4" height="13.4" fill="none" stroke="#fff" stroke-width="1.3"/><circle cx="1444.8" cy="332.5" r="3.9" fill="#7eb4b4" stroke="#2a2a2a" stroke-width="1.5"/><rect x="1453.6" y="323.3" width="13.4" height="13.4" fill="none" stroke="#fff" stroke-width="1.3"/><circle cx="1456.9" cy="331.0" r="3.9" fill="#98b4b4" stroke="#2a2a2a" stroke-width="1.5"/><rect x="1514.9" y="311.8" width="13.4" height="13.4" fill="none" stroke="#fff" stroke-width="1.3"/><circle cx="1519.0" cy="318.8" r="3.9" fill="#b49898" stroke="#2a2a2a" stroke-width="1.5"/><rect x="1568.9" y="302.3" width="13.4" height="13.4" fill="none" stroke="#fff" stroke-width="1.3"/><circle cx="1571.9" cy="310.0" r="3.9" fill="#b87c7c" stroke="#2a2a2a" stroke-width="1.5"/><rect x="1619.2" y="295.6" width="13.4" height="13.4" fill="none" stroke="#fff" stroke-width="1.3"/><circle cx="1621.6" cy="301.9" r="3.9" fill="#c06262" stroke="#2a2a2a" stroke-width="1.5"/><rect x="1674.2" y="285.8" width="13.4" height="13.4" fill="none" stroke="#fff" stroke-width="1.3"/><circle cx="1675.3" cy="292.5" r="3.9" fill="#c84444" stroke="#2a2a2a" stroke-width="1.5"/><rect x="1739.6" y="274.6" width="13.4" height="13.4" fill="none" stroke="#fff" stroke-width="1.3"/><circle cx="1743.8" cy="281.5" r="3.9" fill="#b80000" stroke="#2a2a2a" stroke-width="1.5"/><rect x="1483.6" y="336.9" width="13.4" height="13.4" fill="none" stroke="#fff" stroke-width="1.3"/><circle cx="1487.8" cy="345.0" r="3.9" fill="#b498b4" stroke="#2a2a2a" stroke-width="1.5"/><rect x="1503.0" y="356.1" width="13.4" height="13.4" fill="none" stroke="#fff" stroke-width="1.3"/><circle cx="1508.0" cy="365.2" r="3.9" fill="#b47cb4" stroke="#2a2a2a" stroke-width="1.5"/><rect x="1522.3" y="377.1" width="13.4" height="13.4" fill="none" stroke="#fff" stroke-width="1.3"/><circle cx="1527.5" cy="383.5" r="3.9" fill="#b866b8" stroke="#2a2a2a" stroke-width="1.5"/><rect x="1548.3" y="403.3" width="13.4" height="13.4" fill="none" stroke="#fff" stroke-width="1.3"/><circle cx="1552.1" cy="410.0" r="3.9" fill="#c050c0" stroke="#2a2a2a" stroke-width="1.5"/><rect x="1581.8" y="435.2" width="13.4" height="13.4" fill="none" stroke="#fff" stroke-width="1.3"/><circle cx="1588.4" cy="444.0" r="3.9" fill="#b800b8" stroke="#2a2a2a" stroke-width="1.5"/><rect x="1462.7" y="350.7" width="13.4" height="13.4" fill="none" stroke="#fff" stroke-width="1.3"/><circle cx="1468.2" cy="358.8" r="3.9" fill="#9898b4" stroke="#2a2a2a" stroke-width="1.5"/><rect x="1459.9" y="387.9" width="13.4" height="13.4" fill="none" stroke="#fff" stroke-width="1.3"/><circle cx="1465.3" cy="397.5" r="3.9" fill="#7c7cb8" stroke="#2a2a2a" stroke-width="1.5"/><rect x="1455.8" y="433.7" width="13.4" height="13.4" fill="none" stroke="#fff" stroke-width="1.3"/><circle cx="1461.5" cy="441.9" r="3.9" fill="#6464c0" stroke="#2a2a2a" stroke-width="1.5"/><rect x="1450.8" y="491.4" width="13.4" height="13.4" fill="none" stroke="#fff" stroke-width="1.3"/><circle cx="1456.9" cy="500.0" r="3.9" fill="#4848c8" stroke="#2a2a2a" stroke-width="1.5"/><rect x="1442.4" y="578.7" width="13.4" height="13.4" fill="none" stroke="#fff" stroke-width="1.3"/><circle cx="1451.6" cy="590.0" r="3.9" fill="#0000a0" stroke="#2a2a2a" stroke-width="1.5"/><rect x="1465.8" y="320.3" width="13.4" height="13.4" fill="none" stroke="#1c1c1c" stroke-width="1.4"/><circle cx="1471" cy="328" r="3.9" fill="#fff" stroke="#2a2a2a" stroke-width="1.5"/><defs><linearGradient id="ins" gradientUnits="userSpaceOnUse" x1="1700" y1="575" x2="1885" y2="718">
<stop offset="0" stop-color="#aeff00"/><stop offset=".2" stop-color="#d0ff06"/><stop offset=".42" stop-color="#faff14"/><stop offset=".48" stop-color="#fffc12"/><stop offset=".7" stop-color="#ffde00"/><stop offset="1" stop-color="#ffae00"/></linearGradient>
<clipPath id="insc"><rect x="1688" y="564" width="213.6" height="144.6"/></clipPath></defs>
<rect x="1685.4" y="561.7" width="218.6" height="149" fill="#2b2b2b"/>
<rect x="1687.3" y="563.3" width="215" height="146" fill="url(#ins)" stroke="#7c7c7c" stroke-width="1.5"/>
<g clip-path="url(#insc)"><path d="M1680 575L1910 698.300V550H1680Z" fill="#000" fill-opacity=".4"/></g>
<circle cx="1770.5" cy="627.3" r="3.9" fill="#c2bc00" stroke="#22220a" stroke-width="1.5"/>
<rect x="1787.5" y="628.7" width="13.8" height="13.8" fill="none" stroke="#fff" stroke-width="1.3"/></svg><div class="a" style="left:1915.5px;top:65px;width:4.5px;height:1081px;background:linear-gradient(90deg,rgba(24,24,24,0),#181818 70%)"></div><div class="a" style="left:226.2px;top:1075.5px;width:1329px;height:71px;background:linear-gradient(#4a4a4a,#3d3d3d 40%,#2c2c2c)"></div><div class="a" style="left:226.1px;top:1076.2px;width:50.9px;height:68.4px;border-radius:5px;background:linear-gradient(#b2b2b2,#9c9c9c 7%,#858585 45%,#5a5a5a)"></div><svg style="left:0;top:0" width="0" height="0"><defs><linearGradient id="lgup" x1="0" y1="0" x2="0" y2="1"><stop offset="0" stop-color="#6e6e6e"/><stop offset="1" stop-color="#b0b0b0"/></linearGradient></defs></svg><svg style="left:241.3px;top:1076.8px" width="20" height="20" viewBox="-10 -10 20 20"><circle cx=".2" cy=".3" r="8.4" fill="url(#lgup)"/><path d="M-4.7 1.4h9.4l-4.7 -5.3z" fill="#2c2c2c"/></svg><div class="a" style="left:231.9px;top:1105.3px;width:39.5px;height:34.1px;border-radius:4.5px;background:#ffff00;border:1.2px solid #d4d400"></div><div class="a" style="left:283.4px;top:1076.2px;width:169.2px;height:68.4px;border-radius:5px;background:linear-gradient(#b2b2b2,#9c9c9c 7%,#858585 45%,#5a5a5a)"></div><div class="a" style="left:289.4px;top:1082px;width:157.6px;height:40.6px;border-radius:5px;background:#c1c1a5;box-shadow:inset 0 1.5px 2px rgba(0,0,0,.4),inset 0 0 0 1px rgba(0,0,0,.16)"></div><div class="t" id="t172" style="font-size:11.4px;color:#2c2c2c;font-weight:bold;left:356.75px;top:1130.41px;transform:scaleX(0.9863);">20%</div><div class="a" style="left:454.45px;top:1076.2px;width:169.2px;height:68.4px;border-radius:5px;background:linear-gradient(#b2b2b2,#9c9c9c 7%,#858585 45%,#5a5a5a)"></div><div class="a" style="left:460.45px;top:1082px;width:157.6px;height:40.6px;border-radius:5px;background:#c1bf87;box-shadow:inset 0 1.5px 2px rgba(0,0,0,.4),inset 0 0 0 1px rgba(0,0,0,.16)"></div><div class="t" id="t173" style="font-size:11.4px;color:#2c2c2c;font-weight:bold;left:527.80px;top:1130.41px;transform:scaleX(0.9863);">40%</div><div class="a" style="left:625.5px;top:1076.2px;width:169.2px;height:68.4px;border-radius:5px;background:linear-gradient(#b2b2b2,#9c9c9c 7%,#858585 45%,#5a5a5a)"></div><div class="a" style="left:631.5px;top:1082px;width:157.6px;height:40.6px;border-radius:5px;background:#c1be6c;box-shadow:inset 0 1.5px 2px rgba(0,0,0,.4),inset 0 0 0 1px rgba(0,0,0,.16)"></div><div class="t" id="t174" style="font-size:11.4px;color:#2c2c2c;font-weight:bold;left:698.85px;top:1130.41px;transform:scaleX(0.9863);">60%</div><div class="a" style="left:796.55px;top:1076.2px;width:169.2px;height:68.4px;border-radius:5px;background:linear-gradient(#b2b2b2,#9c9c9c 7%,#858585 45%,#5a5a5a)"></div><div class="a" style="left:802.55px;top:1082px;width:157.6px;height:40.6px;border-radius:5px;background:#c1bd4c;box-shadow:inset 0 1.5px 2px rgba(0,0,0,.4),inset 0 0 0 1px rgba(0,0,0,.16)"></div><div class="t" id="t175" style="font-size:11.4px;color:#2c2c2c;font-weight:bold;left:869.90px;top:1130.41px;transform:scaleX(0.9863);">80%</div><div class="a" style="left:967.6px;top:1076.2px;width:169.2px;height:68.4px;border-radius:5px;background:linear-gradient(#1a1a1a,#2a2a2a 60%,#303030)"></div><div class="a" style="left:973.6px;top:1082px;width:157.6px;height:40.6px;border-radius:5px;background:#c5c100;box-shadow:inset 0 1.5px 2px rgba(0,0,0,.4),inset 0 0 0 1px rgba(0,0,0,.16)"></div><div class="t" id="t176" style="font-size:11.4px;color:#fff;font-weight:bold;left:1037.95px;top:1130.41px;transform:scaleX(0.9780);">100%</div><div class="a" style="left:1556.8px;top:1075.8px;width:54px;height:68.8px;border-radius:5px;background:linear-gradient(#a6a6a6,#828282 45%,#5e5e5e)"></div><div class="a" style="left:1556.8px;top:1096.4px;width:54px;height:1.2px;background:#5a5a5a"></div><svg style="left:1573.6px;top:1076.2px" width="20" height="20" viewBox="-10 -10 20 20"><circle cx="0" cy="0" r="8.4" fill="url(#lgup)" fill-opacity=".6"/><path d="M-4.7 1.5h9.4l-4.7 -5.3z" fill="#2c2c2c"/></svg><div class="a" style="left:1566.2px;top:1103.6px;width:34.6px;height:34.8px;border-radius:6px;border:3px solid #222;background:linear-gradient(#b0b0b0,#a0a0a0 49%,#7a7a7a 51%,#8c8c8c)"></div><div class="a" style="left:1576.1px;top:1114px;width:15.2px;height:14.8px;background:linear-gradient(#1c1c1c,#141414 49%,#000 51%)"></div><div class="a" style="left:1611.8px;top:1075.8px;width:306.4px;height:34.4px;border-radius:5px 5px 0 0;background:linear-gradient(#adadad,#959595 45%,#767676)"></div><div class="a" style="left:1663.1px;top:1076.5px;width:1.3px;height:33.7px;background:#545454"></div><div class="a" style="left:1713.9px;top:1076.5px;width:1.3px;height:33.7px;background:#545454"></div><div class="a" style="left:1764.8px;top:1076.5px;width:1.3px;height:33.7px;background:#545454"></div><div class="a" style="left:1815.2px;top:1076.5px;width:1.3px;height:33.7px;background:#545454"></div><div class="a" style="left:1865.5px;top:1076.5px;width:1.3px;height:33.7px;background:#545454"></div><svg style="left:1625.75px;top:1080px" width="24" height="24" viewBox="-12 -12 24 24"><circle r="10" fill="#7c7c7c" fill-opacity=".55"/></svg><svg style="left:1677.1px;top:1080px" width="24" height="24" viewBox="-12 -12 24 24"><circle r="10" fill="#7c7c7c" fill-opacity=".55"/></svg><svg style="left:1727.95px;top:1080px" width="24" height="24" viewBox="-12 -12 24 24"><circle r="10" fill="#7c7c7c" fill-opacity=".55"/></svg><svg style="left:1778.6px;top:1080px" width="24" height="24" viewBox="-12 -12 24 24"><circle r="10" fill="#7c7c7c" fill-opacity=".55"/></svg><svg style="left:1828.95px;top:1080px" width="24" height="24" viewBox="-12 -12 24 24"><circle r="10" fill="#7c7c7c" fill-opacity=".55"/></svg><svg style="left:1880.05px;top:1080px" width="24" height="24" viewBox="-12 -12 24 24"><circle r="10" fill="#7c7c7c" fill-opacity=".55"/></svg><div class="a" style="left:1612.3px;top:1111.3px;width:152.7px;height:33.3px;border-radius:4px;background:linear-gradient(#b6b6b6,#929292 50%,#6e6e6e)"></div><div class="a" style="left:1766px;top:1111.3px;width:152.2px;height:33.3px;border-radius:4px;background:linear-gradient(#b6b6b6,#929292 50%,#6e6e6e)"></div><svg style="left:1633.5px;top:1116.8px" width="24" height="24" viewBox="-12 -12 24 24"><circle r="10.5" fill="#a2a2a2"/><path d="M-1 -4l-4 4l4 4M4 -4l-4 4l4 4" stroke="#333" stroke-width="1.5" fill="none"/></svg><svg style="left:1875.2px;top:1116.8px" width="24" height="24" viewBox="-12 -12 24 24"><circle r="10.5" fill="#a2a2a2"/><path d="M-4 -4l4 4l-4 4M1 -4l4 4l-4 4" stroke="#333" stroke-width="1.5" fill="none"/></svg><div class="t" id="t177" style="font-size:23.6px;color:#262626;left:1677.00px;top:1116.64px;transform:scaleX(1.0676);">Back</div><div class="t" id="t178" style="font-size:23.6px;color:#262626;left:1797.50px;top:1116.64px;transform:scaleX(1.1646);">Next</div><svg style="left:1611px;top:1076px" width="310" height="34" viewBox="1611 1076 310 34" fill="none" stroke="#303030" stroke-width="1.4"><path d="M1686.2 1087.5v10.5l8.600-5.250z" fill="#303030" stroke="none"/><path d="M1736.8 1087.2h-2.600v12h2.600M1743.3 1087.2h2.600v12h-2.6"/><path d="M1738.600 1094.5h.1M1741.400 1094.5h.1" stroke-width="1.6"/><path d="M1790.5 1092.8c-2-3.400-6.600-2.600-6.600.4s4.600 3.8 6.600.4c2-3.400 6.600-2.600 6.600.4s-4.600 3.8-6.600.4z"/><path d="M1846 1090a5.3 5.3 0 1 0 .4 4.600M1846.8 1086.5v4h-4"/></svg><svg style="left:1620px;top:1074px;opacity:.78" width="300" height="70" viewBox="1620 1074 300 70">
<defs><filter id="glow" x="-5%" y="-25%" width="110%" height="150%"><feMorphology in="SourceAlpha" operator="dilate" radius="1.3" result="d"/><feGaussianBlur in="d" stdDeviation=".55" result="b"/><feFlood flood-color="#fff" flood-opacity=".9"/><feComposite in2="b" operator="in" result="g"/><feMerge><feMergeNode in="g"/><feMergeNode in="SourceGraphic"/></feMerge></filter></defs>
<g filter="url(#glow)">
<path d="M1633 1086.7L1669.4 1093L1670.3 1113.6L1641 1117.3" fill="none" stroke="#9e2a36" stroke-width="3.2" stroke-linejoin="miter"/>
<path d="M1633 1085.2L1635.8 1121L1656 1133.2L1695.5 1120L1675 1116.3" fill="none" stroke="#9e2a36" stroke-width="3" stroke-linejoin="miter"/>
<path d="M1642.5 1096.5l5-1.2l6.2 9.5l19-21.5l2 .8l-20.8 27.4z" fill="#383838"/>
<text x="1675.4" y="1112.7" font-size="26.8" font-weight="bold" fill="#9e2a36" stroke="#9e2a36" stroke-width="1.3" textLength="148.5" lengthAdjust="spacingAndGlyphs">NOTEBOOK</text>
<text x="1825" y="1112.7" font-size="26.8" fill="#404040" stroke="#404040" stroke-width=".5" textLength="87.5" lengthAdjust="spacingAndGlyphs">CHECK</text>
</g></svg>
</div>
</body>
</html>
